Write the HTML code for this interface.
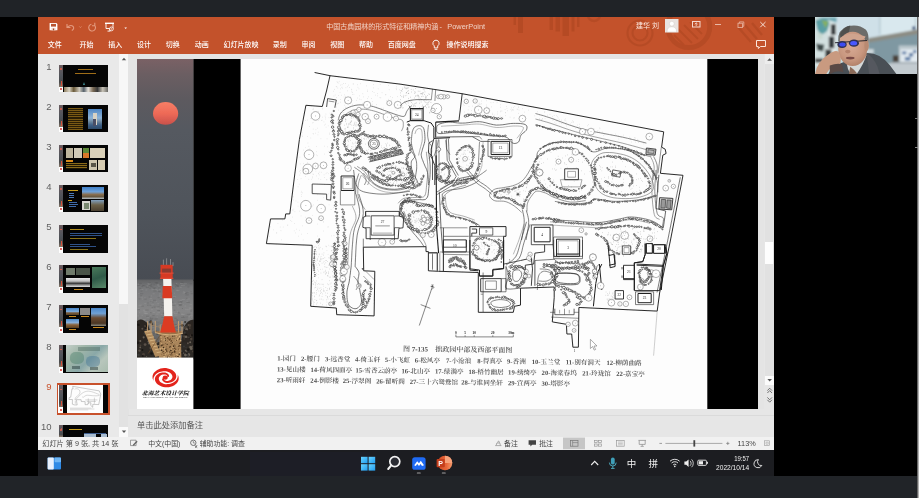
<!DOCTYPE html>
<html lang="zh-CN">
<head>
<meta charset="utf-8">
<title>中国古典园林的形式特征和精神内涵 - PowerPoint</title>
<style>
html,body{margin:0;padding:0;}
body{width:919px;height:498px;overflow:hidden;background:#000;position:relative;font-family:"Liberation Sans","Noto Sans CJK SC",sans-serif;}
.abs{position:absolute;}
#root{position:absolute;left:0;top:0;width:919px;height:498px;will-change:transform;}
#topbar{left:0;top:0;width:919px;height:17px;background:#202327;}
#botbar{left:0;top:476px;width:919px;height:22px;background:#212428;}
#rstrip{left:917.2px;top:17px;width:1.8px;height:481px;background:linear-gradient(90deg,#3a3a3a,#8a8a8a 45%,#d4d4d4);}
#ppt{left:38px;top:17px;width:736px;height:433px;background:#e6e6e6;overflow:hidden;}
#title{left:0;top:0;width:736px;height:37px;background:#c3522b;}
#title .t{color:#f1d2c6;font-size:7px;white-space:nowrap;line-height:10px;}
#menu span{position:absolute;top:22.7px;color:#fff;font-size:7px;line-height:10px;white-space:nowrap;font-weight:500;}
#thumbs{left:0;top:37px;width:81px;height:383px;background:#e9e9e9;}
.num{position:absolute;left:0;width:14px;text-align:right;font-size:10px;color:#444;line-height:12px;}
.th{position:absolute;left:21px;width:48px;height:27px;background:#050505;overflow:hidden;}
#tscroll{left:80.5px;top:37px;width:10px;height:383px;background:#f3f3f3;}
#work{left:90px;top:37px;width:636px;height:355px;background:#e4e4e4;}
#vscroll{left:726.5px;top:37px;width:9.6px;height:355px;background:#e1e1e1;}
#notes{left:90px;top:398px;width:646px;height:22px;background:#e6e6e6;border-top:1px solid #dadada;}
#status{left:0;top:420px;width:736px;height:13px;background:#f1f1f1;font-size:7.2px;color:#444;}
#status span{position:absolute;top:0;line-height:13px;white-space:nowrap;}
#taskbar{left:38px;top:450px;width:736px;height:27px;background:#1c1d21;}
#slide{left:137px;top:59px;width:621px;height:350px;background:#fdfdfd;overflow:hidden;}
#tw i{position:absolute;display:block;}
.tn{position:absolute;left:37px;width:14.5px;text-align:right;font-size:9.5px;line-height:12px;}
.leg{position:absolute;font-family:"Liberation Serif","Noto Serif CJK SC",serif;font-size:7.4px;color:#333;white-space:nowrap;line-height:10px;font-weight:500;}
</style>
</head>
<body>
<div id="root">
<div id="topbar" class="abs"></div>

<div id="ppt" class="abs">
  <div id="title" class="abs">
    <svg class="abs" style="left:0;top:0" width="736" height="37" viewBox="0 0 736 37">
      <!-- decorative pattern -->
      <g fill="#a8431f" opacity="0.5">
        <rect x="475.5" y="0" width="2.5" height="8"/><rect x="480" y="0" width="5" height="16"/>
        <rect x="511.5" y="0" width="3.5" height="13"/><rect x="517.5" y="0" width="4.5" height="14.5"/><rect x="524.5" y="0" width="6.5" height="19"/><rect x="533.5" y="0" width="3" height="14.5"/><rect x="539" y="0" width="2.5" height="10"/>
      </g>
      <g fill="none" stroke="#a8431f" opacity="0.45">
        <circle cx="556" cy="-2" r="6" stroke-width="2.5"/>
        <circle cx="602" cy="16" r="7.5" stroke-width="2.2"/><circle cx="602" cy="16" r="12.5" stroke-width="2.2"/>
        <circle cx="650.8" cy="9.6" r="21" stroke-width="5"/>
        <path d="M640 12l14 14M646 8l14 14M652 5l12 12M636 18l10 10" stroke-width="2"/>
        <path d="M700 10l13 15M707 8l12 14M714 6l10 12" stroke-width="2.5"/>
      </g>
      <!-- quick access icons -->
      <g fill="none" stroke="#fff" stroke-width="1" transform="translate(0 0.9)">
        <path d="M11.6 5h6.8l1 1v6.4h-7.8z" fill="#fff" stroke="none"/><rect x="13" y="6" width="5" height="2.7" fill="#b9532f" stroke="none"/><rect x="13.4" y="10" width="4.2" height="2.4" fill="#f3d9cd" stroke="none"/><rect x="14.9" y="10.6" width="1.2" height="1.8" fill="#9a4526" stroke="none"/>
        <path d="M29.4 9.3 Q32.6 6.2 35.2 8.6 Q36.6 11 33.8 12.6 M29 6.2 V9.6 H32.4" stroke="#e39a7e" stroke-width="1.1"/>
        <path d="M41.4 8.6l1 1 1-1" stroke="#e39a7e" stroke-width="0.8"/>
        <path d="M53.4 6.4 A3.4 3.4 0 1 0 56.4 7.2 M56.8 4.8 V7.8 H54" stroke="#e39a7e" stroke-width="1.1"/>
        <path d="M67 5.4h9" stroke-width="1.4"/><path d="M68 6v4.6h7V6 M71.5 10.6v2.2 M69.5 13.2h3" stroke-width="0.9"/>
        <circle cx="73.4" cy="11" r="1.9" fill="#c3522b" stroke-width="0.8"/><path d="M72.9 10.2l1.3 0.8-1.3 0.8z" fill="#fff" stroke="none"/>
        <path d="M86.4 9.6l1.3 1.5 1.3 -1.5z" fill="#fff" stroke="none"/>
      </g>
      <!-- user avatar -->
      <rect x="627" y="2" width="13.5" height="13.5" fill="#e9e3e0"/>
      <circle cx="633.8" cy="6.7" r="2.4" fill="#fff" stroke="#c9c2be" stroke-width="0.4"/><path d="M629 15 Q629 9.8 633.8 9.8 Q638.6 9.8 638.6 15z" fill="#fff" stroke="#c9c2be" stroke-width="0.4"/>
      <!-- window controls -->
      <g fill="none" stroke="#f4d9cf" stroke-width="1">
        <rect x="654.5" y="4.5" width="7.5" height="5.5"/><path d="M658.2 6v3 M656.8 7.2l1.4-1.4 1.4 1.4" stroke-width="0.8"/>
        <path d="M677 7.5h6" stroke="#e8b8a5"/>
        <rect x="700" y="6.2" width="4.4" height="4.4" stroke="#e8b8a5" stroke-width="0.8"/><path d="M701.4 6.2v-1.3h4.4v4.4h-1.4" stroke="#e8b8a5" stroke-width="0.8"/>
        <path d="M722.3 5l5.2 5.2 M727.5 5l-5.2 5.2" stroke="#fbeee8" stroke-width="0.9"/>
      </g>
    </svg>
    <div class="t abs" style="left:288.2px;top:4.5px;">中国古典园林的形式特征和精神内涵</div><div class="t abs" style="left:401.5px;top:4.5px;font-size:7.4px">-</div><div class="t abs" style="left:409.3px;top:4.5px;font-size:7.4px">PowerPoint</div>
    <div class="t abs" style="left:598px;top:3.5px;color:#fbe9e1;">建华 刘</div>
    <div id="menu">
      <span style="left:9.7px">文件</span><span style="left:41.6px">开始</span><span style="left:70.3px">插入</span><span style="left:99.0px">设计</span><span style="left:127.8px">切换</span><span style="left:156.7px">动画</span><span style="left:185.4px">幻灯片放映</span><span style="left:234.7px">录制</span><span style="left:263.6px">审阅</span><span style="left:292.2px">视图</span><span style="left:320.9px">帮助</span><span style="left:349.8px">百度网盘</span><span style="left:408.6px">操作说明搜索</span>
    </div>
    <svg class="abs" style="left:391px;top:20.5px" width="14" height="15" viewBox="0 0 14 15"><path d="M7 2.2a3.1 3.1 0 0 1 1.7 5.7v2h-3.4v-2A3.1 3.1 0 0 1 7 2.2z M5.6 11.3h2.8" fill="none" stroke="#fff" stroke-width="0.9"/></svg>
    <svg class="abs" style="left:716px;top:22px" width="14" height="12" viewBox="0 0 14 12"><path d="M2.5 1.5h9v6h-5l-2.2 2v-2h-1.8z" fill="none" stroke="#fbe6dc" stroke-width="1"/></svg>
  </div>

  <div id="thumbs" class="abs"></div>
  <div id="tscroll" class="abs"><div class="abs" style="left:0;top:0;width:10px;height:250px;background:#f7f7f7"></div><div class="abs" style="left:0;top:250px;width:10px;height:133px;background:#e2e2e2"></div><div class="abs" style="left:0.5px;top:373px;width:9px;height:9.5px;background:#fafafa"></div>
<svg class="abs" style="left:0;top:0" width="10" height="383"><path d="M2.8 6.2L5 3.8 7.2 6.2z" fill="#555"/><path d="M2.8 376.5L5 378.9 7.2 376.5z" fill="#555"/></svg></div>
  <div id="work" class="abs"></div>
  <div id="vscroll" class="abs">
<div class="abs" style="left:0;top:0;width:9.6px;height:10px;background:#ededed"></div>
<div class="abs" style="left:0.4px;top:188px;width:8.6px;height:22.3px;background:#fdfdfd"></div>
<div class="abs" style="left:0.3px;top:322px;width:8.8px;height:8.6px;background:#fbfbfb"></div>
<div class="abs" style="left:0;top:331px;width:9.6px;height:24px;background:#e6e6e6"></div>
<svg class="abs" style="left:0;top:0" width="10" height="355"><path d="M2.2 6.8L4.6 4.2 7 6.8z" fill="#555"/><path d="M2.4 325L4.7 327.6 7 325z" fill="#555"/>
<path d="M2.4 336.6L4.7 334.2 7 336.6M2.4 339L4.7 336.6 7 339" fill="none" stroke="#555" stroke-width="0.8"/><path d="M2.4 343.4L4.7 345.8 7 343.4M2.4 345.8L4.7 348.2 7 345.8" fill="none" stroke="#555" stroke-width="0.8"/></svg>
</div>
  <div id="notes" class="abs"><span style="position:absolute;left:9px;top:3.5px;font-size:8.25px;color:#555;line-height:12px;">单击此处添加备注</span></div>
  <div id="status" class="abs">
    <span style="left:4.2px">幻灯片 第 9 张, 共 14 张</span>
    <span style="left:110.2px;font-size:6.9px">中文(中国)</span>
    <span style="left:161.7px;font-size:6.9px">辅助功能: 调查</span>
    <span style="left:466px;font-size:6.9px">备注</span>
    <span style="left:501.2px;font-size:6.9px">批注</span>
    <span style="left:699.6px;font-size:7.3px">113%</span>
    <svg class="abs" style="left:0;top:0" width="736" height="13" viewBox="38 437 736 13">
<!-- notes-check icon -->
<path d="M130.5 440.2h5.6v5.4h-5.6z" fill="none" stroke="#777" stroke-width="0.7"/><path d="M133 444.6l3.6-3.8 1 .9-3.6 3.7-1.3.4z" fill="#666"/>
<!-- accessibility -->
<circle cx="193.3" cy="442.8" r="2.7" fill="none" stroke="#555" stroke-width="0.8"/><path d="M193.3 441v2h1.6" fill="none" stroke="#555" stroke-width="0.6"/><path d="M194.6 445.4l2.6 2.2M197 445.2l-1.6 2.6" stroke="#555" stroke-width="0.8"/>
<!-- notes icon -->
<path d="M495.2 445.6h6.2M496.2 445.4l.6-2.4h3l.6 2.4M497.6 442.8l.6-1.6h.8l.6 1.6" fill="none" stroke="#999" stroke-width="0.8"/>
<!-- comments icon -->
<path d="M528.6 440.2h7.4v4.6h-3.8l-1.8 1.8v-1.8h-1.8z" fill="#444"/>
<!-- view buttons -->
<rect x="563" y="437.6" width="22" height="11.6" fill="#c6c6c6"/>
<rect x="570.4" y="440.6" width="7.6" height="5.6" fill="none" stroke="#777" stroke-width="0.7"/><path d="M572.6 440.6v5.6M572.6 442.6h5.4" stroke="#777" stroke-width="0.6"/>
<g fill="none" stroke="#999" stroke-width="0.7"><rect x="594.4" y="440.4" width="2.8" height="2.2"/><rect x="598.6" y="440.4" width="2.8" height="2.2"/><rect x="594.4" y="444" width="2.8" height="2.2"/><rect x="598.6" y="444" width="2.8" height="2.2"/></g>
<g fill="none" stroke="#999" stroke-width="0.7"><rect x="616.6" y="440.4" width="7.6" height="5.8"/><path d="M618 442h4.8M618 443.4h4.8M618 444.8h4.8" stroke-width="0.5"/></g>
<g fill="none" stroke="#888" stroke-width="0.7"><path d="M638.4 440.4h7.6M639.2 440.6v3.8h6v-3.8M642.2 444.4v1.6M640.6 446.4h3.2"/></g>
<!-- zoom slider -->
<path d="M659.4 443.4h2.6" stroke="#777" stroke-width="0.7"/>
<path d="M665.4 443.4h57" stroke="#8a8a8a" stroke-width="0.7"/>
<rect x="693.4" y="440.2" width="1.8" height="6.4" fill="#444"/>
<path d="M726.2 443.4h3.2M727.8 441.8v3.2" stroke="#777" stroke-width="0.7"/>
<!-- fit -->
<rect x="764.6" y="440.8" width="5" height="4.8" fill="none" stroke="#999" stroke-width="0.6"/><path d="M766 442.2h2.2v2h-2.2z" fill="none" stroke="#999" stroke-width="0.5"/>
</svg>

  </div>
</div>

<div id="tw"><span class="tn" style="top:60.8px;color:#606060">1</span>
<i style="left:58.8px;top:65.0px;width:48.9px;height:27.4px;background:#050505;"></i>
<i style="left:59.4px;top:65.0px;width:3.6px;height:22.2px;background:linear-gradient(#6b5c60,#50545a 50%,#4a4a4c 78%,#8a7a6a 100%);"></i>
<i style="left:60.3px;top:68.3px;width:1.8px;height:1.8px;background:#e2604c;border-radius:50%"></i>
<i style="left:60.5px;top:80.5px;width:1.5px;height:5.5px;background:#d8523a;"></i>
<i style="left:59.4px;top:87.0px;width:3.6px;height:5.4px;background:#fff;"></i>
<i style="left:60.2px;top:88.2px;width:2.0px;height:2.0px;background:#d8332a;border-radius:50%"></i>
<span class="tn" style="top:100.8px;color:#606060">2</span>
<i style="left:58.8px;top:105.0px;width:48.9px;height:27.4px;background:#050505;"></i>
<i style="left:59.4px;top:105.0px;width:3.6px;height:22.2px;background:linear-gradient(#6b5c60,#50545a 50%,#4a4a4c 78%,#8a7a6a 100%);"></i>
<i style="left:60.3px;top:108.3px;width:1.8px;height:1.8px;background:#e2604c;border-radius:50%"></i>
<i style="left:60.5px;top:120.5px;width:1.5px;height:5.5px;background:#d8523a;"></i>
<i style="left:59.4px;top:127.0px;width:3.6px;height:5.4px;background:#fff;"></i>
<i style="left:60.2px;top:128.2px;width:2.0px;height:2.0px;background:#d8332a;border-radius:50%"></i>
<span class="tn" style="top:140.9px;color:#606060">3</span>
<i style="left:58.8px;top:145.1px;width:48.9px;height:27.4px;background:#050505;"></i>
<i style="left:59.4px;top:145.1px;width:3.6px;height:22.2px;background:linear-gradient(#6b5c60,#50545a 50%,#4a4a4c 78%,#8a7a6a 100%);"></i>
<i style="left:60.3px;top:148.4px;width:1.8px;height:1.8px;background:#e2604c;border-radius:50%"></i>
<i style="left:60.5px;top:160.6px;width:1.5px;height:5.5px;background:#d8523a;"></i>
<i style="left:59.4px;top:167.1px;width:3.6px;height:5.4px;background:#fff;"></i>
<i style="left:60.2px;top:168.3px;width:2.0px;height:2.0px;background:#d8332a;border-radius:50%"></i>
<span class="tn" style="top:180.9px;color:#606060">4</span>
<i style="left:58.8px;top:185.1px;width:48.9px;height:27.4px;background:#050505;"></i>
<i style="left:59.4px;top:185.1px;width:3.6px;height:22.2px;background:linear-gradient(#6b5c60,#50545a 50%,#4a4a4c 78%,#8a7a6a 100%);"></i>
<i style="left:60.3px;top:188.4px;width:1.8px;height:1.8px;background:#e2604c;border-radius:50%"></i>
<i style="left:60.5px;top:200.6px;width:1.5px;height:5.5px;background:#d8523a;"></i>
<i style="left:59.4px;top:207.1px;width:3.6px;height:5.4px;background:#fff;"></i>
<i style="left:60.2px;top:208.3px;width:2.0px;height:2.0px;background:#d8332a;border-radius:50%"></i>
<span class="tn" style="top:221.0px;color:#606060">5</span>
<i style="left:58.8px;top:225.2px;width:48.9px;height:27.4px;background:#050505;"></i>
<i style="left:59.4px;top:225.2px;width:3.6px;height:22.2px;background:linear-gradient(#6b5c60,#50545a 50%,#4a4a4c 78%,#8a7a6a 100%);"></i>
<i style="left:60.3px;top:228.5px;width:1.8px;height:1.8px;background:#e2604c;border-radius:50%"></i>
<i style="left:60.5px;top:240.7px;width:1.5px;height:5.5px;background:#d8523a;"></i>
<i style="left:59.4px;top:247.2px;width:3.6px;height:5.4px;background:#fff;"></i>
<i style="left:60.2px;top:248.4px;width:2.0px;height:2.0px;background:#d8332a;border-radius:50%"></i>
<span class="tn" style="top:261.1px;color:#606060">6</span>
<i style="left:58.8px;top:265.2px;width:48.9px;height:27.4px;background:#050505;"></i>
<i style="left:59.4px;top:265.2px;width:3.6px;height:22.2px;background:linear-gradient(#6b5c60,#50545a 50%,#4a4a4c 78%,#8a7a6a 100%);"></i>
<i style="left:60.3px;top:268.6px;width:1.8px;height:1.8px;background:#e2604c;border-radius:50%"></i>
<i style="left:60.5px;top:280.8px;width:1.5px;height:5.5px;background:#d8523a;"></i>
<i style="left:59.4px;top:287.2px;width:3.6px;height:5.4px;background:#fff;"></i>
<i style="left:60.2px;top:288.4px;width:2.0px;height:2.0px;background:#d8332a;border-radius:50%"></i>
<span class="tn" style="top:301.1px;color:#606060">7</span>
<i style="left:58.8px;top:305.3px;width:48.9px;height:27.4px;background:#050505;"></i>
<i style="left:59.4px;top:305.3px;width:3.6px;height:22.2px;background:linear-gradient(#6b5c60,#50545a 50%,#4a4a4c 78%,#8a7a6a 100%);"></i>
<i style="left:60.3px;top:308.6px;width:1.8px;height:1.8px;background:#e2604c;border-radius:50%"></i>
<i style="left:60.5px;top:320.8px;width:1.5px;height:5.5px;background:#d8523a;"></i>
<i style="left:59.4px;top:327.3px;width:3.6px;height:5.4px;background:#fff;"></i>
<i style="left:60.2px;top:328.5px;width:2.0px;height:2.0px;background:#d8332a;border-radius:50%"></i>
<span class="tn" style="top:341.1px;color:#606060">8</span>
<i style="left:58.8px;top:345.3px;width:48.9px;height:27.4px;background:#050505;"></i>
<i style="left:59.4px;top:345.3px;width:3.6px;height:22.2px;background:linear-gradient(#6b5c60,#50545a 50%,#4a4a4c 78%,#8a7a6a 100%);"></i>
<i style="left:60.3px;top:348.6px;width:1.8px;height:1.8px;background:#e2604c;border-radius:50%"></i>
<i style="left:60.5px;top:360.8px;width:1.5px;height:5.5px;background:#d8523a;"></i>
<i style="left:59.4px;top:367.3px;width:3.6px;height:5.4px;background:#fff;"></i>
<i style="left:60.2px;top:368.5px;width:2.0px;height:2.0px;background:#d8332a;border-radius:50%"></i>
<span class="tn" style="top:381.2px;color:#c8512b">9</span>
<i style="left:56.9px;top:383.3px;width:52.7px;height:31.4px;background:#c8512b;"></i>
<i style="left:58.2px;top:384.6px;width:50.1px;height:28.8px;background:#fff;"></i>
<i style="left:58.8px;top:385.4px;width:48.9px;height:27.4px;background:#050505;"></i>
<i style="left:59.4px;top:385.4px;width:3.6px;height:22.2px;background:linear-gradient(#6b5c60,#50545a 50%,#4a4a4c 78%,#8a7a6a 100%);"></i>
<i style="left:60.3px;top:388.7px;width:1.8px;height:1.8px;background:#e2604c;border-radius:50%"></i>
<i style="left:60.5px;top:400.9px;width:1.5px;height:5.5px;background:#d8523a;"></i>
<i style="left:59.4px;top:407.4px;width:3.6px;height:5.4px;background:#fff;"></i>
<i style="left:60.2px;top:408.6px;width:2.0px;height:2.0px;background:#d8332a;border-radius:50%"></i>
<span class="tn" style="top:421.2px;color:#606060">10</span>
<i style="left:58.8px;top:425.4px;width:48.9px;height:11.4px;background:#050505;"></i>
<i style="left:59.4px;top:425.4px;width:3.6px;height:11.4px;background:linear-gradient(#6b5c60,#50545a 50%,#4a4a4c 78%,#8a7a6a 100%);"></i>
<i style="left:60.3px;top:428.8px;width:1.8px;height:1.8px;background:#e2604c;border-radius:50%"></i>
<i style="left:60.5px;top:428.4px;width:1.4px;height:1.4px;background:#e2604c;border-radius:50%"></i>
<i style="left:77.8px;top:69.1px;width:15.5px;height:1.4px;background:#a06e18;"></i>
<i style="left:75.2px;top:72.5px;width:20.7px;height:1.6px;background:#a06e18;"></i>
<i style="left:83.3px;top:81.5px;width:0;height:0;border-left:1.8px solid transparent;border-right:1.8px solid transparent;border-bottom:3px solid #3f8f96;background:none"></i>
<i style="left:64.1px;top:86.7px;width:43.6px;height:5.8px;background:linear-gradient(90deg,#8a7a5a,#d8d2c2 12%,#6a5a3a 22%,#cfcabd 35%,#55606a 45%,#e6e2da 55%,#7a6a55 66%,#3a3a3a 76%,#c9c4b8 88%,#6a6a66);"></i>
<i style="left:67.7px;top:108.2px;width:14.9px;height:22.1px;background:repeating-linear-gradient(#7a5a14 0 1px,#2a1e06 1px 2.1px);"></i>
<i style="left:87.8px;top:109.2px;width:14.5px;height:20.1px;background:linear-gradient(#4f86c4,#8fb4d8 45%,#6f8aa0 62%,#3d5f86 80%,#2e4a68);"></i>
<i style="left:92.8px;top:113.2px;width:4.0px;height:12.0px;background:#d9d2c4;"></i>
<i style="left:93.2px;top:118.9px;width:3.0px;height:6.8px;background:#4a4f66;"></i>
<i style="left:66.1px;top:148.4px;width:7.0px;height:10.0px;background:#bdb59e;"></i>
<i style="left:74.2px;top:148.4px;width:7.6px;height:10.0px;background:#cfc9b8;"></i>
<i style="left:82.6px;top:148.4px;width:6.6px;height:4.8px;background:#5e8a3a;"></i>
<i style="left:82.6px;top:153.3px;width:6.6px;height:5.2px;background:#d9772a;"></i>
<i style="left:90.2px;top:148.4px;width:15.1px;height:10.0px;background:#d9d0b8;"></i>
<i style="left:89.2px;top:160.1px;width:8.0px;height:10.0px;background:#cfc6ae;"></i>
<i style="left:97.8px;top:160.1px;width:7.4px;height:10.0px;background:#d6ccb2;"></i>
<i style="left:91.2px;top:162.5px;width:5.0px;height:4.6px;background:#5a5648;"></i>
<i style="left:66.1px;top:160.1px;width:7.0px;height:1.6px;background:#d98a1a;"></i>
<i style="left:66.1px;top:163.1px;width:21.1px;height:6.4px;background:repeating-linear-gradient(#8a6a1a 0 1px,#1e1604 1px 2.2px);"></i>
<i style="left:68.1px;top:189.6px;width:10.0px;height:1.4px;background:#c9a020;"></i>
<i style="left:69.1px;top:193.2px;width:5.0px;height:0.6px;background:#4a78b8;"></i>
<i style="left:69.1px;top:195.2px;width:5.0px;height:0.6px;background:#4a78b8;"></i>
<i style="left:69.1px;top:197.2px;width:5.0px;height:0.6px;background:#4a78b8;"></i>
<i style="left:68.1px;top:199.8px;width:4.0px;height:0.6px;background:#c9a020;"></i>
<i style="left:69.1px;top:201.8px;width:8.0px;height:0.6px;background:#3f6aa8;"></i>
<i style="left:69.1px;top:203.9px;width:9.0px;height:0.6px;background:#3f6aa8;"></i>
<i style="left:69.1px;top:205.9px;width:7.0px;height:0.6px;background:#3f6aa8;"></i>
<i style="left:81.8px;top:187.2px;width:22.5px;height:11.4px;background:linear-gradient(#3f7fc8,#6fa2d8 40%,#8a7050 62%,#6a5a40 80%,#b8c4cc);"></i>
<i style="left:81.8px;top:201.2px;width:8.4px;height:9.0px;background:#d8d8d0;"></i>
<i style="left:83.8px;top:202.7px;width:4.8px;height:6.6px;background:#7a8a70;"></i>
<i style="left:90.8px;top:200.2px;width:13.5px;height:10.4px;background:linear-gradient(#7fa0c0,#6a6048 45%,#4a4030);"></i>
<i style="left:70.1px;top:228.8px;width:14.1px;height:1.0px;background:#b08c1c;"></i>
<i style="left:70.1px;top:233.2px;width:32.1px;height:0.6px;background:#2f5288;"></i>
<i style="left:70.1px;top:235.4px;width:32.1px;height:0.6px;background:#2f5288;"></i>
<i style="left:70.1px;top:237.6px;width:26.1px;height:0.6px;background:#8a741a;"></i>
<i style="left:36.0px;top:225.2px;width:0.0px;height:0.0px;background:#000;"></i>
<i style="left:69.5px;top:243.5px;width:20.0px;height:0.7px;background:#2f5288;"></i>
<i style="left:69.5px;top:246.0px;width:26.0px;height:0.7px;background:#2f5288;"></i>
<i style="left:69.5px;top:248.5px;width:18.0px;height:0.7px;background:#8a741a;"></i>
<i style="left:65.7px;top:268.1px;width:9.4px;height:7.4px;background:#6f7a6a;"></i>
<i style="left:75.8px;top:268.1px;width:14.5px;height:7.4px;background:#4a5448;"></i>
<i style="left:91.8px;top:267.4px;width:14.5px;height:20.7px;background:linear-gradient(160deg,#4a7a5a,#2f5a48 50%,#5a8a6a);"></i>
<i style="left:66.1px;top:277.5px;width:24.1px;height:9.6px;background:linear-gradient(#e8e8e8,#bfbfbf 35%,#3a3a3a 60%,#9a9a9a 80%,#e0e0e0);"></i>
<i style="left:74.2px;top:288.7px;width:9.0px;height:1.0px;background:#c98a20;"></i>
<i style="left:65.7px;top:308.2px;width:13.5px;height:7.0px;background:linear-gradient(#4a86c8,#7aa8d8 50%,#7a5a38 70%,#5a4428);"></i>
<i style="left:80.2px;top:307.6px;width:9.6px;height:7.6px;background:#8a8a8a;"></i>
<i style="left:90.6px;top:307.6px;width:15.7px;height:18.1px;background:linear-gradient(#4a86c8,#6fa0d4 30%,#6a4a30 55%,#4a3624 85%,#8a8a80);"></i>
<i style="left:65.7px;top:318.9px;width:13.5px;height:8.8px;background:linear-gradient(#4f8aca,#8ab0d8 40%,#8a6238 65%,#5a4022);"></i>
<i style="left:69.1px;top:316.2px;width:7.0px;height:0.8px;background:#c98a20;"></i>
<i style="left:69.1px;top:328.5px;width:7.0px;height:0.8px;background:#c98a20;"></i>
<i style="left:93.2px;top:326.9px;width:11.0px;height:0.8px;background:#c98a20;"></i>
<i style="left:81.2px;top:316.2px;width:7.4px;height:0.8px;background:#c98a20;"></i>
<i style="left:66.0px;top:345.4px;width:41.7px;height:26.6px;background:linear-gradient(135deg,#c4cfc8,#9fb5a8 30%,#8aa8a8 55%,#b8c6bc 75%,#a9bcae);"></i>
<i style="left:70.0px;top:352.0px;width:14.0px;height:12.0px;background:rgba(80,130,110,.45);border-radius:40%"></i>
<i style="left:86.0px;top:356.0px;width:14.0px;height:11.0px;background:rgba(70,120,150,.45);border-radius:40%"></i>
<i style="left:78.0px;top:347.0px;width:22.0px;height:4.0px;background:rgba(60,90,80,.35);"></i>
<i style="left:72.0px;top:366.0px;width:8.0px;height:3.0px;background:rgba(40,60,60,.5);"></i>
<i style="left:90.0px;top:367.0px;width:8.0px;height:3.0px;background:rgba(40,60,60,.5);"></i>
<i style="left:67.2px;top:385.4px;width:35.6px;height:27.4px;background:#fdfdfd;"></i>
<svg style="position:absolute;left:67.2px;top:385.4px" width="35.6" height="27.4" viewBox="241 59 466 350"><path d="M315 72L664 132 683 175 660 293 657 311 578 308 578 347 552 322 554 287 520 288 513 312 478 312 478 272 428 271 426 247 363 247 374 316 336 315 311 306 312 245 266 244 270 219 290 214 306 105 322 106Z" fill="none" stroke="#777" stroke-width="5"/><path d="M340 110C380 90 420 120 410 160S350 200 345 240 400 180 460 150 560 140 640 170 600 200 530 190 470 230 440 210M480 250H640M500 270H620M520 230V300M600 220V300M350 260V300" fill="none" stroke="#999" stroke-width="5"/><path d="M280 357H560M280 369H600M280 381H520" stroke="#aaa" stroke-width="5"/></svg>
<i style="left:69.0px;top:429.1px;width:13.0px;height:1.4px;background:#c9a020;"></i>
<i style="left:84.0px;top:434.1px;width:12.0px;height:3.2px;background:#a8bcd0;"></i>
<i style="left:101.0px;top:434.1px;width:6.0px;height:3.2px;background:#a8bcd0;"></i>
<i style="left:84.0px;top:432.6px;width:22.0px;height:0.9px;background:#3f5f90;"></i></div>
<div id="slide" class="abs">
<svg class="abs" style="left:0;top:0" width="621" height="350" viewBox="137 59 621 350" font-family="'Liberation Serif','Noto Serif CJK SC',serif">
<defs>
<linearGradient id="sky" x1="0" y1="0" x2="0" y2="1"><stop offset="0" stop-color="#7a6165"/><stop offset="0.07" stop-color="#6b5e62"/><stop offset="0.18" stop-color="#5d5a5f"/><stop offset="0.32" stop-color="#555960"/><stop offset="0.7" stop-color="#4f545b"/><stop offset="1" stop-color="#484c53"/></linearGradient>
<linearGradient id="sun" x1="0" y1="0" x2="0" y2="1"><stop offset="0" stop-color="#f67e66"/><stop offset="0.5" stop-color="#ee6a57"/><stop offset="1" stop-color="#c9514b"/></linearGradient>
<filter id="mb" x="137" y="59" width="621" height="350" filterUnits="userSpaceOnUse"><feGaussianBlur stdDeviation="0.35"/></filter>
<linearGradient id="sea" x1="0" y1="0" x2="0" y2="1"><stop offset="0" stop-color="#606163"/><stop offset="0.1" stop-color="#77787a"/><stop offset="0.4" stop-color="#858586"/><stop offset="0.65" stop-color="#6e6e6e"/><stop offset="1" stop-color="#4a4a4a"/></linearGradient>
<filter id="sb"><feGaussianBlur stdDeviation="0.5"/></filter>
</defs>
<rect x="137" y="59" width="621" height="350" fill="#fdfdfd"/>
<!-- left picture strip -->
<rect x="137" y="59" width="56.6" height="222" fill="url(#sky)"/>
<ellipse cx="165.6" cy="113.4" rx="12.6" ry="11.3" fill="url(#sun)" filter="url(#sb)"/>
<rect x="137" y="279.5" width="56.6" height="80" fill="url(#sea)"/>
<path d="M170.6 319.1h3.0M187.9 319.0h3.3M138.6 305.3h3.4M172.0 327.0h1.3M162.3 294.3h2.4M168.0 282.7h1.5M152.1 327.8h2.9M145.6 321.9h1.3M170.3 288.3h1.0M184.1 292.5h1.5M190.1 325.6h1.7M188.9 309.0h2.7M148.1 329.0h2.7M189.2 326.7h1.7M156.5 290.3h1.4M140.5 297.1h2.5M137.2 315.9h1.8M153.7 322.9h2.2M154.1 306.1h2.8M140.1 330.8h1.1M177.5 324.2h1.0M179.5 300.3h2.4M137.5 284.3h1.5M188.6 291.8h2.9M187.2 329.1h1.9M156.2 308.2h2.9M142.8 319.4h3.0M183.4 283.8h3.4M141.9 299.0h2.5M186.6 299.0h3.3M166.4 297.6h1.8M146.6 285.9h1.4M174.2 331.8h1.4M139.6 331.3h2.3M158.9 293.9h2.5M181.6 304.8h2.1M140.0 327.8h1.1M163.7 323.9h1.3M176.5 329.5h2.6M179.6 287.3h2.1M145.1 324.2h1.7M161.5 332.0h3.1M189.7 304.7h2.2M176.4 306.0h1.7M158.8 289.3h1.9M190.4 330.0h2.6M164.0 298.9h1.2M151.7 321.1h3.2M156.5 321.3h2.9M174.5 315.2h2.9M156.6 317.2h1.7M163.2 320.5h2.7M152.9 329.3h2.6M168.4 282.6h2.4M150.5 315.6h2.2M181.1 314.4h3.0M155.8 314.2h2.8M181.7 299.5h3.1M184.0 316.4h3.4M188.7 307.9h2.3M146.0 323.8h3.3M162.8 316.6h2.8M176.4 290.6h3.0M168.4 315.3h2.1M170.7 320.7h2.6M175.9 283.4h1.4M160.8 314.5h1.5M174.0 313.5h1.1M162.5 293.3h1.1M144.2 297.9h1.5M147.4 283.8h2.2M157.5 312.6h2.5M149.8 327.2h1.0M158.9 295.9h2.0M143.2 323.6h1.9M138.9 312.7h1.2M166.4 299.0h2.5M188.7 322.9h2.0M180.9 314.1h1.9M144.7 311.8h2.4M188.7 330.4h2.5M156.0 326.7h1.0M142.8 310.3h2.5M144.6 313.5h3.2M157.3 303.6h1.6M152.7 330.6h1.9M188.9 327.7h2.5M151.0 331.0h2.2M159.4 298.0h3.5M163.6 296.3h2.2M143.6 313.1h2.1M152.8 321.1h3.1M137.7 308.6h1.7M187.5 321.1h1.6M151.5 289.7h3.5M152.8 312.4h2.2M171.8 312.2h2.9M143.4 320.0h1.8M165.8 298.8h1.7M165.6 305.2h1.9M177.2 311.5h1.1M150.6 304.8h3.3M184.9 309.3h1.0M179.0 303.4h2.4M175.2 313.6h2.2M186.2 301.3h2.0M183.0 291.8h1.7M181.8 285.3h3.1M174.5 303.6h1.7M179.2 327.5h1.4M162.8 309.5h2.2M154.9 289.7h2.5M180.8 285.4h1.6M181.3 321.6h2.7M138.4 318.1h3.4M190.9 317.1h1.1M182.5 293.0h2.6M188.4 317.6h1.3M152.8 327.9h1.4M170.0 302.7h1.4M170.6 284.2h1.3M157.5 285.6h1.1M168.1 319.1h3.2M144.3 303.6h1.8M169.4 306.5h3.3M157.2 284.8h2.7M145.2 313.6h2.3M186.2 309.7h2.6M151.2 309.6h1.6M177.5 307.8h1.3M149.7 300.6h2.8M146.7 317.7h2.6M141.6 315.4h1.2M143.7 311.7h1.6M184.4 306.0h1.8M180.0 283.5h2.8M139.9 289.5h3.4M173.8 293.2h1.3M189.5 315.3h3.1M144.5 313.2h1.9M149.7 298.7h2.5M155.8 301.3h1.3M181.9 314.4h3.0M160.4 324.6h2.3M169.0 310.7h2.9M158.4 286.8h1.1M147.9 284.0h3.2M163.0 320.0h1.0M162.4 326.5h2.5M160.1 305.3h1.2M145.4 290.0h1.9M157.8 326.0h1.4M150.7 295.9h1.4M152.5 293.8h2.2M138.7 328.2h1.9M187.6 316.4h2.7M162.5 329.3h1.3M173.1 296.6h2.7M176.4 290.2h1.5M138.3 293.5h1.2" stroke="#a5a5a5" stroke-width="0.5" opacity="0.55"/>
<path d="M158.7 334.6h1.9M153.8 307.3h1.7M176.5 320.8h1.4M150.0 318.3h3.4M171.9 305.3h3.4M137.3 285.3h2.9M159.1 284.4h2.4M190.4 310.0h1.9M142.1 285.8h3.2M163.5 332.5h1.1M150.1 284.7h2.0M140.2 295.8h2.0M153.5 284.8h1.1M189.5 291.7h2.3M158.7 310.7h1.2M153.9 287.8h2.4M186.8 314.3h3.1M148.6 282.9h2.3M163.3 312.9h1.9M170.8 321.2h3.3M153.6 306.2h3.1M149.1 288.2h1.8M141.7 323.7h3.0M153.9 289.0h1.2M150.2 286.6h2.1M168.2 295.3h1.2M174.8 284.6h1.5M152.4 302.2h1.2M159.7 299.0h2.9M167.0 330.4h2.6M178.0 313.0h2.1M181.1 317.4h3.4M176.3 319.9h1.7M180.9 302.6h1.3M140.6 291.1h1.7M173.5 297.4h1.2M178.2 312.1h1.1M139.7 289.0h1.9M183.4 333.3h2.5M149.5 305.2h1.9M154.8 282.7h2.5M181.7 321.2h1.2M165.6 291.2h2.8M161.1 332.7h3.0M143.4 299.1h3.3M161.9 305.4h2.1M178.4 332.6h2.3M189.4 314.2h1.3M181.0 304.7h1.1M189.8 283.8h2.4M163.0 329.6h2.0M148.6 297.0h1.5M167.4 301.3h2.9M150.0 301.0h1.6M190.1 327.4h3.1M170.4 303.6h1.4M181.9 308.5h1.1M146.2 287.3h2.8M185.6 292.8h3.0M154.5 318.9h3.2M170.6 325.2h1.9M137.5 309.6h2.5M147.0 303.0h1.8M138.5 298.9h2.0M162.7 320.0h2.0M190.0 326.0h3.3M174.4 318.2h2.3M180.1 301.6h2.5M173.7 310.2h1.7M141.2 286.7h1.9M168.3 323.0h2.8M153.6 332.2h1.7M175.7 285.9h2.9M173.2 333.7h3.2M174.1 327.3h2.8M170.0 293.3h2.3M185.4 294.9h3.4M166.4 303.2h1.0M158.1 291.6h2.6M185.6 331.1h2.5M157.9 287.9h2.7M166.9 320.6h1.9M184.9 293.5h1.8M151.5 315.6h3.2M146.0 316.2h2.9M149.1 285.4h2.4M181.8 329.4h2.8M159.5 305.0h2.3M185.9 298.3h1.7M169.7 334.2h1.5M138.6 288.2h2.4M169.6 291.9h1.5M169.1 316.9h2.7M176.4 285.3h2.2M182.1 333.7h1.8M182.9 316.8h3.3M149.4 319.6h3.1M162.7 287.4h1.5M145.5 287.0h1.4M170.2 287.7h2.9M176.8 326.1h3.0M175.5 331.9h3.4M170.8 334.1h1.3M142.6 285.5h1.5M157.2 306.8h2.7M177.1 286.5h2.0M166.3 302.3h1.3M169.2 302.2h2.7M163.8 334.0h3.4M140.9 323.0h2.8M153.0 288.3h2.2M156.1 321.8h3.3M157.6 297.7h2.2M174.6 324.6h2.4M153.0 300.2h3.1M165.0 284.7h2.1M149.8 318.0h1.2M151.6 287.2h2.2M190.2 311.2h2.0M187.4 287.0h1.9M180.8 282.3h2.9M156.5 282.9h1.6M161.7 302.7h2.3M139.9 293.8h3.4M160.9 307.5h1.2M152.1 333.6h2.7M164.4 284.9h2.0M179.0 305.5h2.5M185.7 316.8h2.6M138.9 283.3h2.9M159.3 329.2h3.1M186.4 302.4h3.5M177.8 330.2h1.4M179.2 304.8h3.4M190.7 293.7h2.1M151.6 307.4h1.7M173.0 288.7h1.4M161.7 286.0h2.0M185.5 329.8h1.5M138.0 326.7h3.4M169.3 289.4h1.6M186.7 332.6h1.1M147.0 305.2h1.7M177.7 302.1h2.9M145.2 310.0h3.4M174.9 286.9h1.3M171.7 302.2h1.9M162.8 313.4h3.4M150.0 312.7h1.7M166.4 321.5h1.3M163.0 320.1h1.0M178.6 304.6h2.3M170.0 324.8h1.1M164.0 284.1h2.0M155.7 283.2h1.7M161.3 317.4h3.3M157.0 310.6h2.8M187.6 333.3h3.5M153.3 291.0h3.3M141.2 306.2h2.8" stroke="#4a4a4a" stroke-width="0.5" opacity="0.5"/>
<path d="M137 321.1 Q141.2 316.9 147.6 323.2 Q151.1 332.3 152.5 342.2 L155.3 359 L137 359z" fill="#2b2622"/>
<path d="M193.6 319.7 Q188.3 319.0 184.1 326.7 Q182.0 336.5 180.6 345.0 L179.2 359 L193.6 359z" fill="#2b2622"/>
<rect x="137" y="342.2" width="56.6" height="16.8" fill="#2e2a26"/>
<circle cx="185.7" cy="350.6" r="0.9" fill="#6a6258"/><circle cx="185.2" cy="322.1" r="1.1" fill="#3a3a38"/><circle cx="146.5" cy="326.1" r="1.4" fill="#1a1714"/><circle cx="184.2" cy="338.9" r="0.6" fill="#4a4038"/><circle cx="191.0" cy="335.6" r="1.1" fill="#5a5048"/><circle cx="188.1" cy="354.0" r="1.3" fill="#3a3a38"/><circle cx="181.6" cy="341.6" r="0.5" fill="#4a4038"/><circle cx="151.6" cy="322.9" r="0.9" fill="#6a6258"/><circle cx="152.1" cy="340.8" r="1.2" fill="#4a4038"/><circle cx="152.1" cy="324.3" r="1.0" fill="#3a3a38"/><circle cx="155.7" cy="355.5" r="1.2" fill="#1a1714"/><circle cx="190.1" cy="337.9" r="0.8" fill="#1a1714"/><circle cx="191.8" cy="335.3" r="1.2" fill="#1a1714"/><circle cx="188.3" cy="325.1" r="0.9" fill="#4a4038"/><circle cx="186.3" cy="328.1" r="0.6" fill="#6a6258"/><circle cx="187.0" cy="353.9" r="0.6" fill="#1a1714"/><circle cx="148.8" cy="341.4" r="1.2" fill="#6a6258"/><circle cx="184.0" cy="332.3" r="0.6" fill="#1a1714"/><circle cx="191.2" cy="339.0" r="1.2" fill="#4a4038"/><circle cx="157.1" cy="333.8" r="0.6" fill="#1a1714"/><circle cx="154.7" cy="349.2" r="1.0" fill="#5a5048"/><circle cx="189.7" cy="325.5" r="1.4" fill="#4a4038"/><circle cx="184.5" cy="336.4" r="1.4" fill="#4a4038"/><circle cx="138.4" cy="355.0" r="1.3" fill="#3a3a38"/><circle cx="145.5" cy="329.9" r="0.5" fill="#3a3a38"/><circle cx="188.8" cy="354.7" r="1.4" fill="#6a6258"/><circle cx="145.0" cy="326.0" r="1.0" fill="#4a4038"/><circle cx="189.0" cy="337.3" r="0.8" fill="#3a3a38"/><circle cx="146.5" cy="329.3" r="1.0" fill="#5a5048"/><circle cx="145.0" cy="333.4" r="1.3" fill="#3a3a38"/><circle cx="184.7" cy="332.7" r="1.1" fill="#3a3a38"/><circle cx="150.3" cy="348.0" r="0.8" fill="#6a6258"/><circle cx="145.5" cy="326.7" r="0.7" fill="#4a4038"/><circle cx="146.3" cy="327.9" r="0.6" fill="#6a6258"/><circle cx="142.4" cy="350.1" r="1.0" fill="#1a1714"/><circle cx="184.0" cy="346.4" r="1.0" fill="#3a3a38"/><circle cx="190.2" cy="342.2" r="1.0" fill="#6a6258"/><circle cx="187.3" cy="343.2" r="0.6" fill="#1a1714"/><circle cx="186.0" cy="335.0" r="1.3" fill="#1a1714"/><circle cx="150.8" cy="322.0" r="1.4" fill="#1a1714"/><circle cx="186.0" cy="336.7" r="1.3" fill="#6a6258"/><circle cx="189.8" cy="346.9" r="1.1" fill="#4a4038"/><circle cx="140.3" cy="340.9" r="1.0" fill="#6a6258"/><circle cx="154.6" cy="338.8" r="0.6" fill="#5a5048"/><circle cx="140.5" cy="345.3" r="0.9" fill="#4a4038"/><circle cx="145.1" cy="344.6" r="1.4" fill="#5a5048"/><circle cx="188.0" cy="337.2" r="0.8" fill="#4a4038"/><circle cx="188.2" cy="349.5" r="1.2" fill="#1a1714"/><circle cx="181.0" cy="324.0" r="0.5" fill="#5a5048"/><circle cx="186.5" cy="353.5" r="1.0" fill="#1a1714"/><circle cx="181.3" cy="351.2" r="1.1" fill="#3a3a38"/><circle cx="188.8" cy="356.6" r="0.7" fill="#4a4038"/><circle cx="183.4" cy="353.1" r="0.7" fill="#6a6258"/><circle cx="186.1" cy="328.6" r="1.4" fill="#6a6258"/><circle cx="192.4" cy="346.1" r="0.7" fill="#6a6258"/><circle cx="155.9" cy="331.6" r="1.0" fill="#5a5048"/><circle cx="191.3" cy="348.7" r="1.4" fill="#6a6258"/><circle cx="186.0" cy="347.6" r="0.7" fill="#3a3a38"/><circle cx="142.3" cy="328.7" r="1.0" fill="#5a5048"/><circle cx="182.1" cy="334.7" r="0.6" fill="#1a1714"/><circle cx="187.5" cy="355.2" r="1.2" fill="#3a3a38"/><circle cx="190.9" cy="347.4" r="1.4" fill="#6a6258"/><circle cx="140.2" cy="347.3" r="0.9" fill="#6a6258"/><circle cx="187.9" cy="343.3" r="1.0" fill="#5a5048"/><circle cx="145.3" cy="330.0" r="0.8" fill="#3a3a38"/><circle cx="138.5" cy="324.9" r="1.2" fill="#1a1714"/><circle cx="189.8" cy="328.1" r="0.9" fill="#4a4038"/><circle cx="143.5" cy="354.4" r="1.4" fill="#4a4038"/><circle cx="187.2" cy="329.6" r="0.8" fill="#6a6258"/><circle cx="142.8" cy="355.9" r="1.0" fill="#1a1714"/><circle cx="154.5" cy="354.6" r="0.8" fill="#4a4038"/><circle cx="188.5" cy="325.1" r="0.8" fill="#5a5048"/><circle cx="182.2" cy="325.4" r="1.4" fill="#1a1714"/><circle cx="137.7" cy="342.8" r="1.4" fill="#1a1714"/><circle cx="190.9" cy="340.0" r="0.6" fill="#3a3a38"/><circle cx="149.0" cy="343.5" r="0.9" fill="#6a6258"/><circle cx="181.8" cy="352.8" r="0.8" fill="#1a1714"/><circle cx="145.8" cy="328.1" r="0.9" fill="#1a1714"/><circle cx="137.9" cy="324.4" r="0.6" fill="#1a1714"/><circle cx="143.0" cy="337.2" r="0.8" fill="#1a1714"/><circle cx="193.0" cy="351.5" r="1.1" fill="#4a4038"/><circle cx="186.7" cy="351.7" r="0.6" fill="#6a6258"/><circle cx="185.4" cy="355.0" r="1.4" fill="#6a6258"/><circle cx="186.4" cy="326.6" r="1.2" fill="#3a3a38"/><circle cx="146.6" cy="356.4" r="0.5" fill="#6a6258"/><circle cx="143.6" cy="337.3" r="1.1" fill="#6a6258"/><circle cx="139.5" cy="350.6" r="1.2" fill="#5a5048"/><circle cx="151.5" cy="353.5" r="1.3" fill="#1a1714"/><circle cx="185.0" cy="327.7" r="1.4" fill="#4a4038"/><circle cx="181.4" cy="340.4" r="0.5" fill="#5a5048"/>
<path d="M159.8 333.7 L180.9 333.7 L181.4 359 L158.8 359z" fill="#a8845a"/>
<circle cx="180.7" cy="342.7" r="0.5" fill="#3a2a18"/><circle cx="169.4" cy="335.9" r="0.4" fill="#6a4a2a"/><circle cx="162.1" cy="351.0" r="0.4" fill="#5a3e24"/><circle cx="173.2" cy="352.8" r="0.8" fill="#c8a270"/><circle cx="179.2" cy="354.2" r="0.7" fill="#3a2a18"/><circle cx="168.5" cy="352.9" r="0.5" fill="#d8b480"/><circle cx="163.5" cy="351.6" r="0.6" fill="#5a3e24"/><circle cx="176.0" cy="345.9" r="0.5" fill="#5a3e24"/><circle cx="175.2" cy="351.9" r="0.8" fill="#c8a270"/><circle cx="164.4" cy="350.3" r="0.4" fill="#d8b480"/><circle cx="160.6" cy="341.1" r="0.6" fill="#5a3e24"/><circle cx="175.4" cy="356.3" r="0.5" fill="#6a4a2a"/><circle cx="180.0" cy="346.3" r="0.7" fill="#5a3e24"/><circle cx="172.3" cy="342.5" r="0.5" fill="#3a2a18"/><circle cx="165.4" cy="340.1" r="0.7" fill="#c8a270"/><circle cx="166.0" cy="338.6" r="0.4" fill="#c8a270"/><circle cx="164.0" cy="355.9" r="0.6" fill="#5a3e24"/><circle cx="164.6" cy="339.8" r="0.6" fill="#c8a270"/><circle cx="164.4" cy="354.4" r="0.4" fill="#6a4a2a"/><circle cx="162.3" cy="348.7" r="0.7" fill="#c8a270"/><circle cx="170.1" cy="355.1" r="0.6" fill="#3a2a18"/><circle cx="161.5" cy="339.4" r="0.6" fill="#c8a270"/><circle cx="173.5" cy="350.6" r="0.6" fill="#c8a270"/><circle cx="169.8" cy="347.1" r="0.7" fill="#3a2a18"/><circle cx="160.1" cy="338.9" r="0.4" fill="#3a2a18"/><circle cx="167.8" cy="354.3" r="0.7" fill="#c8a270"/><circle cx="173.4" cy="338.2" r="0.6" fill="#c8a270"/><circle cx="173.1" cy="352.1" r="0.6" fill="#5a3e24"/><circle cx="179.1" cy="339.3" r="0.6" fill="#6a4a2a"/><circle cx="165.5" cy="338.8" r="0.5" fill="#3a2a18"/><circle cx="161.5" cy="343.2" r="0.7" fill="#c8a270"/><circle cx="164.9" cy="348.9" r="0.8" fill="#d8b480"/><circle cx="169.1" cy="341.0" r="0.6" fill="#d8b480"/><circle cx="180.4" cy="344.4" r="0.8" fill="#d8b480"/><circle cx="179.6" cy="336.6" r="0.8" fill="#d8b480"/><circle cx="172.7" cy="336.2" r="0.6" fill="#3a2a18"/><circle cx="166.8" cy="350.8" r="0.5" fill="#c8a270"/><circle cx="176.8" cy="350.6" r="0.4" fill="#d8b480"/><circle cx="174.7" cy="351.4" r="0.7" fill="#6a4a2a"/><circle cx="171.7" cy="353.1" r="0.6" fill="#3a2a18"/><circle cx="175.7" cy="340.3" r="0.6" fill="#c8a270"/><circle cx="177.7" cy="339.2" r="0.7" fill="#d8b480"/><circle cx="179.6" cy="345.3" r="0.6" fill="#6a4a2a"/><circle cx="166.6" cy="351.5" r="0.8" fill="#5a3e24"/><circle cx="162.4" cy="345.3" r="0.6" fill="#5a3e24"/><circle cx="177.9" cy="338.5" r="0.6" fill="#c8a270"/><circle cx="174.1" cy="338.3" r="0.4" fill="#5a3e24"/><circle cx="177.3" cy="336.6" r="0.5" fill="#6a4a2a"/><circle cx="179.7" cy="352.4" r="0.5" fill="#d8b480"/><circle cx="171.0" cy="350.4" r="0.6" fill="#3a2a18"/><circle cx="174.9" cy="357.3" r="0.6" fill="#d8b480"/><circle cx="177.7" cy="355.6" r="0.5" fill="#c8a270"/><circle cx="166.5" cy="346.6" r="0.4" fill="#6a4a2a"/><circle cx="171.4" cy="340.9" r="0.8" fill="#6a4a2a"/><circle cx="176.9" cy="340.7" r="0.7" fill="#c8a270"/><circle cx="170.3" cy="356.2" r="0.5" fill="#d8b480"/><circle cx="165.3" cy="343.5" r="0.4" fill="#5a3e24"/><circle cx="176.5" cy="340.6" r="0.5" fill="#6a4a2a"/><circle cx="179.7" cy="343.2" r="0.5" fill="#3a2a18"/><circle cx="162.0" cy="347.9" r="0.5" fill="#c8a270"/><circle cx="170.8" cy="341.3" r="0.4" fill="#5a3e24"/><circle cx="161.9" cy="342.0" r="0.4" fill="#6a4a2a"/><circle cx="166.5" cy="356.8" r="0.4" fill="#d8b480"/><circle cx="167.9" cy="337.8" r="0.7" fill="#c8a270"/><circle cx="174.9" cy="352.0" r="0.7" fill="#5a3e24"/><circle cx="166.4" cy="348.0" r="0.4" fill="#6a4a2a"/><circle cx="167.5" cy="357.2" r="0.7" fill="#3a2a18"/><circle cx="161.5" cy="344.9" r="0.6" fill="#d8b480"/><circle cx="169.9" cy="352.0" r="0.8" fill="#5a3e24"/><circle cx="166.3" cy="352.9" r="0.5" fill="#d8b480"/><circle cx="162.1" cy="348.5" r="0.6" fill="#c8a270"/><circle cx="172.9" cy="347.1" r="0.7" fill="#d8b480"/><circle cx="170.8" cy="343.5" r="0.4" fill="#5a3e24"/><circle cx="160.3" cy="349.3" r="0.5" fill="#d8b480"/><circle cx="166.9" cy="340.5" r="0.5" fill="#d8b480"/><circle cx="165.3" cy="340.3" r="0.6" fill="#3a2a18"/><circle cx="161.2" cy="337.1" r="0.8" fill="#c8a270"/><circle cx="171.4" cy="357.7" r="0.5" fill="#d8b480"/><circle cx="179.5" cy="350.3" r="0.4" fill="#d8b480"/><circle cx="170.7" cy="355.0" r="0.4" fill="#3a2a18"/><circle cx="164.7" cy="336.6" r="0.6" fill="#6a4a2a"/><circle cx="164.5" cy="356.7" r="0.8" fill="#d8b480"/><circle cx="171.9" cy="354.9" r="0.6" fill="#6a4a2a"/><circle cx="178.0" cy="346.2" r="0.7" fill="#3a2a18"/><circle cx="161.3" cy="345.7" r="0.7" fill="#3a2a18"/><circle cx="177.5" cy="356.5" r="0.7" fill="#5a3e24"/><circle cx="170.7" cy="350.2" r="0.5" fill="#3a2a18"/><circle cx="174.2" cy="336.0" r="0.5" fill="#3a2a18"/><circle cx="176.4" cy="354.6" r="0.5" fill="#d8b480"/><circle cx="167.7" cy="341.2" r="0.5" fill="#6a4a2a"/><circle cx="172.4" cy="352.3" r="0.8" fill="#5a3e24"/><circle cx="167.0" cy="336.2" r="0.7" fill="#d8b480"/><circle cx="175.7" cy="349.2" r="0.6" fill="#5a3e24"/><circle cx="168.8" cy="339.6" r="0.4" fill="#5a3e24"/><circle cx="171.7" cy="343.8" r="0.5" fill="#6a4a2a"/><circle cx="167.2" cy="344.6" r="0.5" fill="#3a2a18"/><circle cx="170.2" cy="339.0" r="0.7" fill="#5a3e24"/><circle cx="175.8" cy="342.6" r="0.4" fill="#d8b480"/><circle cx="167.4" cy="342.0" r="0.5" fill="#c8a270"/><circle cx="166.7" cy="351.1" r="0.7" fill="#6a4a2a"/><circle cx="169.8" cy="356.8" r="0.5" fill="#3a2a18"/><circle cx="179.4" cy="349.4" r="0.6" fill="#c8a270"/><circle cx="163.9" cy="344.7" r="0.4" fill="#5a3e24"/><circle cx="174.7" cy="348.3" r="0.7" fill="#5a3e24"/><circle cx="177.7" cy="354.9" r="0.6" fill="#d8b480"/><circle cx="174.3" cy="355.5" r="0.4" fill="#c8a270"/><circle cx="164.4" cy="357.8" r="0.4" fill="#c8a270"/><circle cx="180.5" cy="342.4" r="0.7" fill="#6a4a2a"/><circle cx="172.7" cy="351.4" r="0.4" fill="#d8b480"/><circle cx="165.9" cy="349.3" r="0.7" fill="#3a2a18"/><circle cx="174.9" cy="342.3" r="0.4" fill="#3a2a18"/><circle cx="173.7" cy="345.9" r="0.6" fill="#6a4a2a"/><circle cx="165.3" cy="336.9" r="0.4" fill="#c8a270"/><circle cx="162.0" cy="344.5" r="0.6" fill="#5a3e24"/><circle cx="177.8" cy="357.7" r="0.6" fill="#d8b480"/><circle cx="160.6" cy="348.9" r="0.5" fill="#c8a270"/><circle cx="165.2" cy="354.5" r="0.8" fill="#c8a270"/><circle cx="163.9" cy="356.8" r="0.7" fill="#d8b480"/><circle cx="162.6" cy="351.8" r="0.5" fill="#6a4a2a"/><circle cx="173.0" cy="348.7" r="0.5" fill="#5a3e24"/><circle cx="168.0" cy="338.2" r="0.7" fill="#6a4a2a"/><circle cx="179.0" cy="345.2" r="0.4" fill="#5a3e24"/><circle cx="161.9" cy="347.0" r="0.4" fill="#c8a270"/><circle cx="180.6" cy="340.4" r="0.7" fill="#d8b480"/><circle cx="170.4" cy="346.5" r="0.4" fill="#6a4a2a"/><circle cx="171.4" cy="349.0" r="0.8" fill="#c8a270"/><circle cx="177.6" cy="335.6" r="0.4" fill="#d8b480"/><circle cx="173.1" cy="338.2" r="0.4" fill="#5a3e24"/><circle cx="168.6" cy="357.7" r="0.6" fill="#d8b480"/><circle cx="173.6" cy="346.3" r="0.7" fill="#3a2a18"/><circle cx="177.1" cy="346.0" r="0.8" fill="#d8b480"/><circle cx="162.3" cy="351.7" r="0.8" fill="#5a3e24"/><circle cx="163.9" cy="353.6" r="0.6" fill="#6a4a2a"/><circle cx="166.7" cy="350.3" r="0.6" fill="#5a3e24"/><circle cx="167.0" cy="344.0" r="0.4" fill="#5a3e24"/><circle cx="161.3" cy="354.6" r="0.4" fill="#6a4a2a"/><circle cx="178.6" cy="356.2" r="0.5" fill="#3a2a18"/><circle cx="167.9" cy="348.8" r="0.4" fill="#6a4a2a"/><circle cx="161.6" cy="350.3" r="0.8" fill="#3a2a18"/><circle cx="165.4" cy="351.8" r="0.8" fill="#c8a270"/><circle cx="168.0" cy="355.1" r="0.5" fill="#6a4a2a"/><circle cx="172.3" cy="338.6" r="0.4" fill="#6a4a2a"/><circle cx="160.8" cy="335.2" r="0.5" fill="#3a2a18"/><circle cx="170.3" cy="346.4" r="0.6" fill="#5a3e24"/><circle cx="174.0" cy="342.4" r="0.6" fill="#c8a270"/><circle cx="160.7" cy="355.4" r="0.4" fill="#5a3e24"/><circle cx="171.7" cy="354.0" r="0.4" fill="#5a3e24"/><circle cx="169.8" cy="355.7" r="0.7" fill="#c8a270"/><circle cx="178.7" cy="349.1" r="0.7" fill="#6a4a2a"/><circle cx="167.7" cy="337.7" r="0.7" fill="#6a4a2a"/><circle cx="169.7" cy="341.3" r="0.5" fill="#c8a270"/><circle cx="169.6" cy="339.9" r="0.8" fill="#6a4a2a"/><circle cx="178.4" cy="338.0" r="0.6" fill="#d8b480"/><circle cx="160.1" cy="355.2" r="0.8" fill="#d8b480"/><circle cx="164.1" cy="340.2" r="0.6" fill="#d8b480"/><circle cx="179.5" cy="338.7" r="0.5" fill="#3a2a18"/><circle cx="163.5" cy="347.4" r="0.7" fill="#3a2a18"/><circle cx="180.5" cy="343.4" r="0.7" fill="#3a2a18"/><circle cx="163.7" cy="345.0" r="0.4" fill="#6a4a2a"/><circle cx="176.8" cy="336.4" r="0.8" fill="#c8a270"/><circle cx="171.4" cy="357.9" r="0.7" fill="#5a3e24"/><circle cx="178.9" cy="357.3" r="0.4" fill="#6a4a2a"/><circle cx="165.2" cy="352.8" r="0.5" fill="#d8b480"/><circle cx="179.7" cy="356.4" r="0.5" fill="#d8b480"/><circle cx="176.2" cy="340.5" r="0.4" fill="#6a4a2a"/><circle cx="165.3" cy="352.5" r="0.5" fill="#6a4a2a"/><circle cx="174.7" cy="344.9" r="0.4" fill="#3a2a18"/><circle cx="167.0" cy="340.3" r="0.4" fill="#5a3e24"/><circle cx="174.8" cy="351.9" r="0.6" fill="#3a2a18"/><circle cx="174.3" cy="350.8" r="0.6" fill="#3a2a18"/>
<path d="M144.1 331.2 L150.4 329.8 L161.6 355.5 L155.3 356.9 z" fill="#b08a5c"/>
<path d="M144.8 332.0L150.7 330.9" stroke="#e0c08c" stroke-width="0.7"/>
<path d="M146.4 335.0L152.4 333.9" stroke="#e0c08c" stroke-width="0.7"/>
<path d="M148.1 338.0L154.0 336.8" stroke="#e0c08c" stroke-width="0.7"/>
<path d="M149.8 340.9L155.7 339.8" stroke="#e0c08c" stroke-width="0.7"/>
<path d="M151.5 343.9L157.4 342.7" stroke="#e0c08c" stroke-width="0.7"/>
<path d="M153.2 346.8L159.1 345.7" stroke="#e0c08c" stroke-width="0.7"/>
<path d="M154.9 349.8L160.8 348.6" stroke="#e0c08c" stroke-width="0.7"/>
<path d="M156.6 352.7L162.5 351.6" stroke="#e0c08c" stroke-width="0.7"/>
<path d="M148.3 353.4L160.2 335.1" stroke="#6a4a2a" stroke-width="0.6"/>
<path d="M154.6 331.2 L182.7 331.2 L180.9 335.1 L159.8 335.1 z" fill="#9a7248"/>
<path d="M155.0 332.6Q169.4 336.8 183.1 333.2" stroke="#ddb884" stroke-width="0.9" fill="none"/>
<path d="M147.6 321.1V332.6" stroke="#c9a070" stroke-width="0.9"/>
<path d="M151.1 321.1V332.6" stroke="#c9a070" stroke-width="0.9"/>
<path d="M155.3 321.1V332.6" stroke="#c9a070" stroke-width="0.9"/>
<path d="M160.2 324.6V332.6" stroke="#c9a070" stroke-width="0.9"/>
<path d="M170.1 324.6V332.6" stroke="#c9a070" stroke-width="0.9"/>
<path d="M178.5 321.1V332.6" stroke="#c9a070" stroke-width="0.9"/>
<path d="M182.0 321.1V332.6" stroke="#c9a070" stroke-width="0.9"/>
<path d="M147.6 323.9L160.2 327.4 M170.1 327.4L182.0 323.9" stroke="#b08a60" stroke-width="0.5"/>
<path d="M163.1 278.3 L171.4 278.3 L172.4 316.6 L164.2 316.6 z" fill="#f4f2ee"/>
<path d="M162.8 286.0 L171.7 286.0 L172.2 298.2 L162.3 298.2 z" fill="#d93a22"/>
<path d="M164.2 316.2 L172.4 316.2 Q173.5 323.9 175.9 332.6 L160.1 332.6 Q162.8 323.9 164.2 316.2 z" fill="#dc3c22"/>
<rect x="160.5" y="264.8" width="12.2" height="14.1" fill="#d63a24"/>
<rect x="162.1" y="268.6" width="9.0" height="4.5" fill="#8a3a30"/>
<path d="M159.5 273.1H173.7 M159.9 278.3H173.4" stroke="#e8503a" stroke-width="0.9"/>
<path d="M163.4 259.6V264.8 M166.6 258.3V264.8 M170.5 259.0V264.8 M173.0 262.2V266.1" stroke="#b9b9b9" stroke-width="0.5"/>
<!-- white box and logo -->
<rect x="137" y="357.6" width="56.6" height="51.4" fill="#fff"/>
<g transform="translate(165.6 377.7)" fill="#e3241c"><path d="M-12.0 3.2L-12.6 1.9L-13.0 0.7L-13.1 -0.7L-13.0 -2.0L-12.6 -3.3L-11.9 -4.6L-10.9 -5.7L-9.7 -6.8L-8.4 -7.7L-6.8 -8.5L-5.1 -9.1L-3.3 -9.5L-1.4 -9.6L0.5 -9.6L2.3 -9.3L4.0 -8.8L5.5 -8.1L6.9 -7.4L8.1 -6.5L9.1 -5.5L9.9 -4.4L10.4 -3.3L10.6 -2.2L10.7 -1.1L10.5 -0.0L10.1 1.0L9.5 2.0L8.7 2.8L7.8 3.5L6.8 4.1L5.7 4.6L4.6 4.9L3.5 5.1L2.4 5.2L1.3 5.2L0.2 5.1L-0.7 4.8L-1.5 4.4L-2.2 3.9L-2.7 3.4L-3.1 2.9L-3.4 2.3L-3.5 1.8L-3.4 1.3L-3.3 0.9L-1.4 0.4L-1.6 0.6L-1.7 0.9L-1.8 1.2L-1.7 1.6L-1.5 1.9L-1.3 2.3L-0.9 2.6L-0.4 2.9L0.2 3.1L0.8 3.2L1.5 3.3L2.2 3.2L2.9 3.1L3.6 2.9L4.3 2.6L5.0 2.2L5.5 1.8L6.0 1.2L6.4 0.6L6.7 -0.0L6.8 -0.7L6.8 -1.4L6.6 -2.1L6.3 -2.8L5.9 -3.5L5.3 -4.2L4.5 -4.8L3.6 -5.4L2.6 -5.8L1.5 -6.2L0.3 -6.5L-1.0 -6.5L-2.2 -6.4L-3.5 -6.2L-4.8 -6.0L-6.1 -5.6L-7.3 -5.1L-8.5 -4.4L-9.5 -3.6L-10.4 -2.7L-11.1 -1.7L-11.7 -0.6L-12.1 0.6L-12.2 1.9L-12.0 3.2z"/><path d="M-12.0 3.2L-12.6 1.9L-13.0 0.7L-13.1 -0.7L-13.0 -2.0L-12.6 -3.3L-11.9 -4.6L-10.9 -5.7L-9.7 -6.8L-8.4 -7.7L-6.8 -8.5L-5.1 -9.1L-3.3 -9.5L-1.4 -9.6L0.5 -9.6L2.3 -9.3L4.0 -8.8L5.5 -8.1L6.9 -7.4L8.1 -6.5L9.1 -5.5L9.9 -4.4L10.4 -3.3L10.6 -2.2L10.7 -1.1L10.5 -0.0L10.1 1.0L9.5 2.0L8.7 2.8L7.8 3.5L6.8 4.1L5.7 4.6L4.6 4.9L3.5 5.1L2.4 5.2L1.3 5.2L0.2 5.1L-0.7 4.8L-1.5 4.4L-2.2 3.9L-2.7 3.4L-3.1 2.9L-3.4 2.3L-3.5 1.8L-3.4 1.3L-3.3 0.9L-1.4 0.4L-1.6 0.6L-1.7 0.9L-1.8 1.2L-1.7 1.6L-1.5 1.9L-1.3 2.3L-0.9 2.6L-0.4 2.9L0.2 3.1L0.8 3.2L1.5 3.3L2.2 3.2L2.9 3.1L3.6 2.9L4.3 2.6L5.0 2.2L5.5 1.8L6.0 1.2L6.4 0.6L6.7 -0.0L6.8 -0.7L6.8 -1.4L6.6 -2.1L6.3 -2.8L5.9 -3.5L5.3 -4.2L4.5 -4.8L3.6 -5.4L2.6 -5.8L1.5 -6.2L0.3 -6.5L-1.0 -6.5L-2.2 -6.4L-3.5 -6.2L-4.8 -6.0L-6.1 -5.6L-7.3 -5.1L-8.5 -4.4L-9.5 -3.6L-10.4 -2.7L-11.1 -1.7L-11.7 -0.6L-12.1 0.6L-12.2 1.9L-12.0 3.2z" transform="rotate(180)"/><ellipse cx="-0.4" cy="0" rx="2.6" ry="2.1"/></g>
<text x="165.3" y="394.8" font-size="5.4" font-weight="900" text-anchor="middle" fill="#1a1a1a" textLength="47" lengthAdjust="spacingAndGlyphs" font-family="'Liberation Serif','Noto Serif CJK SC',serif" font-style="italic">北海艺术设计学院</text>
<text x="165.3" y="397.6" font-size="1.9" text-anchor="middle" fill="#444" textLength="44" lengthAdjust="spacingAndGlyphs" font-family="'Liberation Sans',sans-serif">BEIHAI UNIVERSITY OF ART AND DESIGN</text>
<!-- black bands -->
<rect x="193.4" y="59" width="47.2" height="350" fill="#000"/>
<rect x="707.3" y="59" width="50.7" height="350" fill="#000"/>
<!-- map -->
<g filter="url(#mb)">
<path d="M357.2 84.7h.5M373.8 92.5h.5M336.5 97.6h.5M334.9 95h.5M337.4 82.6h.5M341.6 87.3h.5M377 93.6h.5M399 89.7h.5M343.2 83.5h.5M346 100.3h.5M381.8 92.7h.5M336.6 86.7h.5M385 94.7h.5M356.5 100.4h.5M367.3 90.1h.5M393.9 104.5h.5M351 100h.5M388.9 89.7h.5M343.8 97h.5M335 103.4h.5M391.6 100h.5M400.3 90.6h.5M386.2 100.8h.5M377.2 95.8h.5M368.9 103.3h.5M336.7 104.6h.5M396.1 89.6h.5M362 103.4h.5M333.7 96h.5M345 83.5h.5M336.5 107h.5M342 88.2h.5M338.2 95.5h.5M395.9 110.5h.5M353.7 94.3h.5M345.7 87.7h.5M350.1 96.8h.5M377.9 88.8h.5M360.8 99.7h.5M406.3 104.2h.5M372.2 101.6h.5M402.2 107.5h.5M400.2 108.1h.5M362.6 93.7h.5M340 102.2h.5M336.8 81.7h.5M348.2 85.1h.5M339.8 92.4h.5M379.9 84.6h.5M351.6 91.8h.5M360.4 83.7h.5M368.3 96.8h.5M338.6 83h.5M358.7 88.8h.5M373.2 84.6h.5M399.3 104.4h.5M352.3 92.5h.5M345 107.2h.5M357.7 87.3h.5M398.5 108.4h.5M395.8 106h.5M349.6 98h.5M334.1 89.4h.5M352.2 104.3h.5M406.6 95.4h.5M406.5 92.5h.5M349.1 87.5h.5M347.3 86.7h.5M397.5 96.6h.5M382.9 108.2h.5M338.5 103.2h.5M403 107.6h.5M390.5 96.6h.5M345.9 107.8h.5M407.8 93.6h.5M388.5 85.4h.5M341.8 84.7h.5M402.6 108.4h.5M343.3 109.2h.5M408.5 103h.5M359.3 99.1h.5M407.7 102.8h.5M396.4 86.9h.5M351.6 89.9h.5M350.7 100.5h.5M352.2 94.4h.5M342.2 112.2h.5M359.5 95.8h.5M371.1 98.5h.5M366.3 85.9h.5M345.4 96.4h.5M388.5 99.4h.5M357.4 98h.5M340.2 99.5h.5M351.3 89.3h.5M392.2 97.6h.5M375.8 106.7h.5M403.2 95.3h.5M379.7 97.6h.5M371.9 104.3h.5M367.2 98.6h.5M405.5 88.7h.5M341.4 95.3h.5M337.6 88h.5M337.6 103.5h.5M344 105.2h.5M363 96.9h.5M409.2 109.4h.5M344.5 94.9h.5M372.2 91.5h.5M347.2 90.8h.5M375.2 95.2h.5M333.3 91.3h.5M380.6 97.8h.5M340.1 88.9h.5M335 107.4h.5M353 84h.5M395.9 88.6h.5M343.6 112.5h.5M376.5 104.6h.5M338.9 81.4h.5M385.7 94.7h.5M381.5 108.3h.5M338.5 110.2h.5M367.4 91.5h.5M352.8 83.9h.5M373.1 87.9h.5M340.5 85.1h.5M335.9 86.6h.5M356.3 90.3h.5" stroke="#b0b0b0" stroke-width="0.5" fill="none"/>
<path d="M319 204.8h.5M301.2 191.3h.5M317.2 236.1h.5M279.9 227h.5M331.1 182.8h.5M323.1 221.9h.5M293.9 230.8h.5M314.1 287.9h.5M315.4 246.3h.5M294.7 211.7h.5M326.7 250.5h.5M287 225.1h.5M277.7 223.5h.5M333.7 235.6h.5M299.5 230.3h.5M280.7 230.6h.5M307.1 233.5h.5M318.4 248.9h.5M316 275.5h.5M293.6 209.1h.5M316.6 247.2h.5M328.1 245.3h.5M317.3 267.5h.5M276.4 232.9h.5M322.1 269.2h.5M313.8 253.2h.5M300.5 170.4h.5M321.6 259.8h.5M301.4 234.2h.5M312.1 177.9h.5M317.5 200.3h.5M317 194.6h.5M317.7 287.1h.5M300.8 215.9h.5M319.5 244h.5M311 179.3h.5M317.9 206.5h.5M305.9 171.5h.5M313 253.1h.5M313.3 204.9h.5M302.3 225.8h.5M298.9 184.2h.5M328.2 193.9h.5M323.2 286.2h.5M297.7 202.2h.5M281.3 239.8h.5M276.6 232.9h.5M332.3 185.9h.5M323.2 231h.5M327.8 254.4h.5M300.3 173h.5M297.8 206.2h.5M324.5 184.4h.5M330.5 255.6h.5M328.8 204.8h.5M292.4 217.1h.5M335.5 240.7h.5M291.6 221.4h.5M302 192.8h.5M327.6 267.4h.5M331.5 235.9h.5M316.3 175.9h.5M317.2 224.1h.5M318.6 247.3h.5M330.5 185.3h.5M299.3 211.2h.5M311.9 206.1h.5M305.1 217.3h.5M301 196.4h.5M329.1 289.6h.5M297.8 186.8h.5M318.3 219.5h.5M295.3 232.9h.5M292.7 210.6h.5M326.1 195.9h.5M294.3 223.5h.5M332.4 271.8h.5M326.8 172.6h.5M328.4 226.8h.5M307.2 170h.5M323.6 272.7h.5M331.5 256.6h.5M298.3 236.2h.5M311.2 206.5h.5M302.9 239.9h.5M293.5 196.8h.5M308.1 171.3h.5M287.6 225.3h.5M332.7 247.3h.5M327.6 227h.5M332.8 254.6h.5M295.7 200.9h.5M312.7 281h.5M290.1 220.5h.5M313.7 193.8h.5M321.6 258.7h.5M301.5 194.6h.5M333.5 207.4h.5M323.2 197.7h.5M300.9 192.5h.5M282.2 220h.5M312.6 283.9h.5M328.5 276h.5M317.2 289.7h.5M330.8 209.5h.5M318.1 173.8h.5M312.5 215.4h.5M292.5 209.8h.5M332.5 184.8h.5M333.1 194.9h.5M323.3 221.9h.5M270.3 226.8h.5M328.5 173.6h.5M319.5 174.9h.5M330.1 200.8h.5M318.2 277.8h.5M332.6 244h.5M329.8 246.1h.5M331.6 172.9h.5M282.9 227h.5M293.4 200.1h.5M296.4 229.2h.5M330.6 192h.5M322 258.6h.5M323.4 262.7h.5M308.6 209.3h.5M320.6 179.5h.5M269.2 236.3h.5M327.5 288.5h.5M273.5 229.8h.5" stroke="#bbb" stroke-width="0.5" fill="none"/>
<path d="M320.7 138.7h.5M302.4 136.4h.5M317.3 155.7h.5M322.2 168.6h.5M319 114.4h.5M325.8 127.2h.5M315.2 133.2h.5M321.8 120.2h.5M302.9 123.6h.5M299.3 171.3h.5M315.7 129.7h.5M308.6 179.4h.5M312.9 122.6h.5M324.5 154.1h.5M331.6 112.9h.5M311.7 166.5h.5M325.8 173.6h.5M330.9 148.9h.5M329.2 133.1h.5M326.8 138.8h.5M303.4 163.4h.5M329.8 113.2h.5M316.4 151.6h.5M301.8 132.8h.5M303.2 150.1h.5M318.5 120.5h.5M319.5 119.1h.5M305.4 120.5h.5M324 146.2h.5M308.6 146.4h.5M318 112.1h.5M299.7 157.2h.5M309.2 126.5h.5M305.2 176.5h.5M305.4 147.6h.5M307.1 136.4h.5M326.7 179.7h.5M307.4 120h.5M321.4 120.5h.5M309.7 166.6h.5M309 171.2h.5M311.1 117.4h.5M318.1 173.3h.5M307.7 143h.5M313.5 174.4h.5M324.4 177.5h.5M329.7 178.2h.5M312 109.3h.5M329.1 134.3h.5M328.2 151.6h.5M325.2 117.3h.5M323.7 121.9h.5M309 168.5h.5M325.3 119h.5M301.8 135.2h.5M313.3 134h.5M321.3 172.3h.5M322.6 108.1h.5M325.7 114.1h.5M316.5 146.4h.5M317.5 128.2h.5M309.6 148.8h.5M309.8 154.5h.5M310.6 138h.5M312.2 122.9h.5M322.8 163.6h.5M311 118.7h.5M311.6 113.3h.5M313 108.3h.5M317.9 111.4h.5M321.7 163.4h.5M313.1 109.4h.5M312.8 133.5h.5M330 115.5h.5M326.4 179.7h.5M321.6 166.2h.5M300.8 178.6h.5M312.3 176.8h.5M328.7 117.6h.5M323.8 174.8h.5M322.5 117.2h.5M327.9 125.8h.5M324.8 116h.5M312.7 174h.5M312.9 129.1h.5M299.6 175.2h.5M319.6 172.2h.5M299.9 163.9h.5M317.9 132.2h.5M327 146.8h.5M315.7 171.2h.5M297.4 179.5h.5M317.7 134.8h.5M324.1 125.1h.5M307.3 162.4h.5M310.4 118.5h.5M322 108.9h.5M325 124.2h.5M318 178.8h.5M316 154.9h.5" stroke="#bbb" stroke-width="0.5" fill="none"/>
<path d="M318.1 245.4h.5M325.3 271.7h.5M322.8 299.9h.5M313.8 259.2h.5M326.1 246.7h.5M313.2 267.1h.5M316 280.9h.5M324.6 257.7h.5M325.5 274.3h.5M313.9 302.4h.5M316.5 254.4h.5M313 284.2h.5M331.3 293h.5M320.2 261.4h.5M324 266.7h.5M326 272.4h.5M332.9 290h.5M316.6 300.4h.5M311.8 277.7h.5M320.3 259.8h.5M312.1 292.8h.5M332.9 254h.5M315.4 282.4h.5M322.7 284.4h.5M329.9 255.9h.5M318 263.6h.5M311.9 299.5h.5M329.2 288.9h.5M328.3 273.7h.5M328.2 272.9h.5M316.1 251.7h.5M316.2 247.7h.5M318.6 291h.5M327.1 296.8h.5M327.5 261.5h.5M323.8 271.9h.5M329.3 277.2h.5M317 284.4h.5M333.5 258.5h.5M331.5 246.2h.5M316.9 259.7h.5M328.3 302.9h.5M328.3 265.2h.5M331.5 265.3h.5M316.4 300.6h.5M325.6 287.5h.5M326.4 305h.5M321.8 296.5h.5M327.2 297.6h.5M321 289.5h.5M324.2 264.1h.5M315.7 283.3h.5M312.6 300.8h.5M314.1 246.9h.5M313.2 301.9h.5M318.9 253.9h.5M327.1 283.9h.5M327.2 290.2h.5M312.3 281.3h.5M319.3 295.1h.5M330.1 299.6h.5M312.3 298.2h.5M332.3 302.9h.5M313.3 257.8h.5M313.4 247.4h.5M330.7 294.8h.5M325.7 295.6h.5M325.6 262.8h.5M313.1 251.3h.5M328.6 257.8h.5M318.3 271.1h.5M317.4 288.9h.5M319.4 264.9h.5M333.5 276h.5M330.8 283h.5M321 292.4h.5M318.9 288.3h.5M323.4 258.5h.5M331.1 250.8h.5M330.1 255.7h.5M328.7 304.9h.5M322.3 293.9h.5M315.1 275.5h.5M318.9 296h.5M316.9 302.8h.5M317.4 258.4h.5M327.2 275.7h.5M313.3 284.1h.5M312.6 293.3h.5M327.2 293.3h.5M325.6 267h.5M320.2 269.4h.5M331.7 250.6h.5M331.7 246.8h.5M315.6 261.3h.5M332 275.9h.5M319.7 299.2h.5M316.2 273.4h.5M323.3 291.3h.5M328.5 284.7h.5M319 265.2h.5M314.4 296.7h.5M326.4 290.5h.5M314.7 272.1h.5M329 280.6h.5M313.7 273.5h.5M331.6 259.8h.5M315.2 263.7h.5M327.3 296.7h.5M314.4 254.8h.5M316.6 265.2h.5M323.1 255.1h.5M318.5 256.8h.5M333.8 289.7h.5M313.1 304h.5M313.1 268.7h.5M334 293.8h.5M328 271.8h.5M315.4 284.2h.5M313.2 257.9h.5M319.9 247.4h.5M320.1 293.5h.5M327.1 275.8h.5M325.7 273.5h.5M314.1 282.1h.5M320.3 290.5h.5M332.2 271.5h.5M324.3 291h.5M320.7 259.2h.5M327.8 299h.5M329 288h.5M330.9 286.7h.5M325.9 273h.5M318.1 283.6h.5M313 270.9h.5M329.2 288.8h.5M325.6 260.5h.5M320.7 273.1h.5M325.4 270.3h.5M326.7 302h.5M315 285.2h.5M329.1 269h.5M322.3 304.7h.5M311.6 278.4h.5M314.5 293h.5M332.9 277h.5M313.1 280.3h.5M323.5 289h.5M322.8 284.3h.5M330.3 277.1h.5M320.4 303.1h.5M315.7 287h.5M320 291.8h.5M313.6 305.3h.5M319.1 248.8h.5M317.2 269.7h.5M320.7 287.9h.5M319 261.5h.5M316 290.5h.5M332.9 277.4h.5M315.9 294.2h.5M320 258.2h.5M313.8 292.6h.5M329.8 284h.5M321.8 279.6h.5M316.1 304.1h.5M319.1 284.2h.5M330.1 295.1h.5M321.8 263.2h.5M323.7 252.9h.5M330.4 266.9h.5M330.8 261.6h.5M319.6 260.8h.5M320.8 256.6h.5M317.4 260.2h.5M317.9 274.5h.5M320.8 284.2h.5M326.3 267.4h.5M332.7 297.4h.5M312.1 295.8h.5M332.1 293.1h.5M314 296h.5M325.7 246.2h.5M311 303.3h.5M326.2 260.5h.5M313.1 254h.5M316.2 292.6h.5M318.9 254.6h.5M332.1 293.6h.5M314.7 299.6h.5M325.1 292.9h.5M326.5 299.8h.5M329.3 296.4h.5M315.4 287.5h.5M323.3 290.5h.5M321.1 299.1h.5M323.8 261.4h.5M316.3 253.8h.5M322.4 248.9h.5M321.8 254.1h.5" stroke="#999" stroke-width="0.5" fill="none"/>
<path d="M415.4 103.3h.5M414.7 105.5h.5M411.7 100.6h.5M400.9 107.1h.5M416 102.9h.5M422.5 107.6h.5M411.5 102.5h.5M406.6 101.2h.5M413.2 105.2h.5M425.9 96.4h.5M425.9 100.1h.5M415.8 95.7h.5M410.4 97.2h.5M409.4 106.3h.5M427.7 104.9h.5M401.6 96.6h.5M400.2 92.9h.5M428.9 107h.5M428.5 107.1h.5M419.3 107.7h.5M421.8 106.6h.5M421.3 93.7h.5M420.9 102h.5M423.9 89.9h.5M405.7 87.8h.5M420.5 98.9h.5M417.6 95.2h.5M409.5 100.7h.5M410 101h.5M401.7 105.7h.5M401.2 90.5h.5M425.4 105.9h.5M428.8 101.6h.5M400.4 99.6h.5M430.7 102.5h.5M412.9 89.9h.5M420.2 93.7h.5M404 87.1h.5M422.5 94.7h.5M423 92.8h.5M422.9 89.3h.5M415.2 88.5h.5M411.5 105.9h.5M419.7 100.6h.5M429.6 113h.5M417.8 96.4h.5M410.4 106.9h.5M418.8 96.9h.5M425.3 96.1h.5M400.1 95.4h.5M413.2 106.3h.5M417.9 95.7h.5M410.9 89.4h.5M429.2 94.4h.5M414.6 93.5h.5M424.8 102h.5M424.2 94.4h.5M427.7 104.1h.5M414.9 106.4h.5M405.9 93h.5M411.4 105.5h.5M412.6 104h.5M404.7 88h.5M424.7 91.8h.5M418.7 98.1h.5M427.1 102.9h.5M417.8 95.3h.5M424.4 100.9h.5M429.6 112.4h.5M408 87.8h.5M406.3 92.6h.5M402.6 88.2h.5M418.7 99.9h.5M408.1 105.5h.5M421 99.8h.5M414 91.9h.5M406.9 87.8h.5M408 98.4h.5M401.7 91.4h.5M421.2 96.6h.5M403.3 97.4h.5M408.1 90.7h.5M415.1 92.2h.5M407.5 91.3h.5M422.5 93.1h.5M404.4 101.6h.5M426.4 107.7h.5M414.2 98h.5M425.8 102.6h.5M419.7 91.3h.5M406.9 88.4h.5M422.4 105.2h.5M408.3 100.4h.5M404.9 95.7h.5M426.3 97.8h.5M405.3 103.1h.5M420.9 93.6h.5M415 96.2h.5M408.1 93.3h.5M403.1 96.3h.5M422.8 96.4h.5M425.3 98h.5M426.1 104.3h.5M405.8 101.2h.5M428.6 93.9h.5M417.9 91.2h.5M422.3 93.1h.5M402.5 89.5h.5M419.1 103.2h.5M408.6 93.5h.5M425.4 106.2h.5M406.3 88.7h.5M423 100.3h.5M425.4 97.8h.5M428.5 102.6h.5M427.3 95.5h.5M411.5 92h.5M411.6 106.6h.5M400.1 104h.5M414 103.9h.5" stroke="#666" stroke-width="0.5" fill="none"/>
<path d="M474.4 115.1h.5M542.1 119.1h.5M493.9 115h.5M499.8 116.1h.5M512.6 110.2h.5M465.6 98.7h.5M464.4 112h.5M518.8 110h.5M547.3 115.2h.5M467 99.4h.5M510.7 109.4h.5M477 111.3h.5M500.5 107.3h.5M486.1 105h.5M541 120.3h.5M542 118.6h.5M467.9 109.9h.5M555.9 120.9h.5M486.9 107.3h.5M504.8 109.5h.5M464.7 99.8h.5M557 116.7h.5M541.4 119.6h.5M513.3 107.6h.5M492.4 113.3h.5M474.4 111.9h.5M488.8 108.5h.5M474.7 99.6h.5M491.2 106.9h.5M490.7 102.6h.5M471.2 110.6h.5M544.4 112.3h.5M518.2 113.4h.5M482.2 115h.5M507.5 110.7h.5M522.3 108.6h.5M492.9 102.6h.5M484.2 109.7h.5M500 111.7h.5M463.8 105.5h.5M516.8 109.2h.5M491.4 116.6h.5M468.7 106.4h.5M505.5 115.6h.5M473.3 102.1h.5M556 115.7h.5M477.7 105.1h.5M497 114h.5M522.6 118.7h.5M534.6 115.8h.5M539.1 114.9h.5M537.2 111.7h.5M518.3 107.2h.5M538.9 119.3h.5M506.7 108.3h.5M500.7 110.9h.5M500.1 104.7h.5M539.3 118.7h.5M511.3 107.9h.5M480.6 104.2h.5M476.8 111.4h.5M544.8 118.4h.5M463.7 97.4h.5M517.6 109.3h.5M552.2 116.6h.5M513 109.9h.5M497.5 111.9h.5M528.5 110.1h.5M472.3 106.1h.5M501.7 111h.5M505.5 112.7h.5M514.3 117.8h.5M479.3 104.6h.5M557.9 118h.5M549.7 114.4h.5M477.9 103.8h.5M512.5 109.5h.5M481 101h.5M524 112.1h.5M502.7 117h.5M492.5 114.5h.5M463 104.2h.5M544.6 111.7h.5M511.1 110.8h.5M488.5 113.3h.5M518.6 107h.5M474.5 100.3h.5M472.4 100.7h.5M513.5 118h.5M522.3 117.5h.5M479.1 103.2h.5M506.4 106.4h.5M505.4 112.6h.5M553.3 118.8h.5M486.3 106.5h.5M509.8 117.2h.5M486.3 100.7h.5M514.6 106.4h.5M496.8 102.6h.5M481.3 103.7h.5" stroke="#b0b0b0" stroke-width="0.5" fill="none"/>
<path d="M558.9 123h.5M599.4 131.9h.5M584.8 130.5h.5M577.2 127.3h.5M637.6 139.4h.5M635.1 142.2h.5M562.7 123.2h.5M620.8 137.4h.5M553.9 115.5h.5M565.6 120.7h.5M579.2 126.6h.5M630.4 139.5h.5M554.6 122.2h.5M591.3 130.9h.5M618.1 136h.5M572.9 122.1h.5M599.7 128.7h.5M561 123.6h.5M555.8 123.4h.5M581.3 129.5h.5M630 138.4h.5M604.6 134.7h.5M629 137.2h.5M597.7 130.5h.5M565.2 124h.5M631 142h.5M599.6 127.9h.5M582.6 128.5h.5M578.5 128.6h.5M581.2 129.2h.5M643.6 143.8h.5M615.2 134h.5M552.7 120.4h.5M590.1 131.5h.5M561 120.1h.5M597.2 132.2h.5M572.8 126.3h.5M570.5 124h.5M638.4 142.5h.5M566.4 126h.5M595.1 133h.5M587.4 125.7h.5M554.4 119h.5M634.1 139.4h.5M611 134.9h.5M573.5 121.9h.5M593.7 128.7h.5M579.1 124.3h.5M557.7 120h.5M565.9 122.9h.5M582.2 130.3h.5M565.1 118.9h.5M601.9 133.4h.5M603.5 135.6h.5M618.6 139h.5M552.7 118.6h.5M564.4 120h.5M571.6 122.4h.5M575.3 128.3h.5M572.3 120.8h.5M623.2 135.1h.5M577.2 125h.5M559.4 119.7h.5M584.1 130.4h.5M635.1 138h.5M589.3 132.3h.5M616.3 135.5h.5M602.4 132.1h.5M634.2 137.6h.5M588.5 124.6h.5" stroke="#b0b0b0" stroke-width="0.5" fill="none"/>
<path d="M314.6 72.5 L330 75.7 L400 84.1 L462 93.7 L550 110.1 L663.7 131.8 L661.6 147.2 L665.2 149.2 L666.1 153.5 L662.8 155.2 L660.4 173.3 L683 175.3 L670.5 240 L659.6 293 L657.2 311.1 L580.1 307.5 L578.9 307.5 L578.4 347.2 L572.9 347.2 L571.7 334 L566.9 334 L566.4 324.3 L552.3 321.9 L554.2 297.8 L554.2 287 L520.5 288.2 L520.5 305.1 L514.5 306.3 L513.3 312.3 L478.3 312.3 L478.3 272.5 L438.6 271.3 L428.4 270.8 L428.4 251.6 L426 251.6 L426 246.7 L363.3 247.2 L363.7 270.8 L374.8 271.3 L374.1 315.9 L336.7 314.7 L336.3 308 L310.7 306.3 L312.2 245.3 L266.4 243.6 L270.5 218.9 L284.9 218.9 L285.7 213.9 L289.8 213.9 L295.3 170 L299.4 139.5 L305.9 105.3 L322.3 106.5 L326.5 91 L330 75.7" fill="none" stroke="#1e1e1e" stroke-width="0.95"/>
<path d="M680.3 177.3 L667.8 240 L657 292.5" fill="none" stroke="#222" stroke-width="0.6"/>
<path d="M657.2 311.1 L653.6 355.7" fill="none" stroke="#888" stroke-width="0.4"/>
<path d="M326.6 107 L327.6 98.6 L336.3 100 L334.8 107.7" fill="none" stroke="#2a2a2a" stroke-width="0.8"/>
<path d="M328.6 101 L334.3 101.9" fill="none" stroke="#2a2a2a" stroke-width="0.5"/>
<g fill="#fff" stroke="#1e1e1e" stroke-width="0.62"><ellipse cx="333.8" cy="111" rx="0.8" ry="0.6"/><ellipse cx="331.9" cy="114.6" rx="0.8" ry="0.5"/><ellipse cx="333" cy="116.2" rx="1" ry="0.8"/><ellipse cx="331.6" cy="117.6" rx="0.8" ry="0.5"/><ellipse cx="332.5" cy="120.4" rx="1.1" ry="0.7"/><ellipse cx="331.6" cy="121.5" rx="1" ry="0.9"/><ellipse cx="332.9" cy="123.1" rx="0.8" ry="0.7"/><ellipse cx="332.6" cy="127.1" rx="1.2" ry="1.2"/><ellipse cx="333.5" cy="130.2" rx="0.7" ry="0.5"/><ellipse cx="333.4" cy="131.3" rx="1.1" ry="0.9"/><ellipse cx="333.9" cy="134.4" rx="1" ry="0.8"/><ellipse cx="334.5" cy="136.7" rx="0.7" ry="0.7"/><ellipse cx="334.3" cy="140" rx="0.9" ry="0.7"/><ellipse cx="332.4" cy="143.7" rx="0.7" ry="0.6"/><ellipse cx="332.6" cy="144.9" rx="0.9" ry="0.6"/><ellipse cx="332.6" cy="145.7" rx="0.7" ry="0.6"/><ellipse cx="332.3" cy="147.9" rx="1.1" ry="0.7"/><ellipse cx="331.5" cy="150.7" rx="0.8" ry="0.5"/><ellipse cx="330.3" cy="152.3" rx="0.7" ry="0.5"/><ellipse cx="331.2" cy="155.8" rx="1.1" ry="0.7"/><ellipse cx="332.7" cy="159.2" rx="0.8" ry="0.6"/><ellipse cx="333" cy="162.2" rx="0.9" ry="0.6"/><ellipse cx="332.8" cy="164.6" rx="1" ry="0.7"/><ellipse cx="332.9" cy="167.3" rx="0.8" ry="0.5"/><ellipse cx="333.2" cy="168.3" rx="0.7" ry="0.5"/><ellipse cx="332.6" cy="170.4" rx="1.1" ry="0.7"/><ellipse cx="332.1" cy="172.6" rx="1.1" ry="1.1"/><ellipse cx="332.5" cy="174.4" rx="0.7" ry="0.6"/><ellipse cx="331.7" cy="175.3" rx="0.8" ry="0.6"/><ellipse cx="331.8" cy="177.9" rx="1.1" ry="0.9"/><ellipse cx="331.7" cy="179.8" rx="1.1" ry="0.9"/></g>
<circle cx="315.5" cy="115.9" r="4.3" fill="#fff" stroke="#555" stroke-width="0.45"/>
<circle cx="315.5" cy="115.9" r="0.35" fill="#555"/>
<circle cx="309" cy="154.7" r="4.8" fill="#fff" stroke="#555" stroke-width="0.45"/>
<circle cx="309" cy="154.7" r="0.35" fill="#555"/>
<circle cx="307.8" cy="168.9" r="4.8" fill="#fff" stroke="#555" stroke-width="0.45"/>
<circle cx="307.8" cy="168.9" r="0.35" fill="#555"/>
<circle cx="315.5" cy="166" r="2.9" fill="#fff" stroke="#555" stroke-width="0.45"/>
<circle cx="315.5" cy="166" r="0.35" fill="#555"/>
<circle cx="323.5" cy="165.3" r="3.4" fill="#fff" stroke="#555" stroke-width="0.45"/>
<circle cx="323.5" cy="165.3" r="0.35" fill="#555"/>
<path d="M338.1 120.3 L338.4 119.5 L338.7 118.4 L339 117 L339.5 115.6 L340.1 114.3 L340.8 113.1 L341.7 112 L342.8 111 L344 110.1 L345.2 109.2 L346.6 108.4 L348.1 107.7 L349.7 107 L351.4 106.4 L353.2 105.9 L355 105.4 L357 105.1 L358.9 104.9 L360.9 104.9 L363 105 L365.1 105.1 L367.3 105.4 L369.4 105.8 L371.6 106.2 L373.7 106.7 L375.8 107.4 L377.9 108.1 L380 108.8 L382.1 109.6 L384.2 110.4 L386.4 111.1 L388.6 112 L390.9 112.8 L393.1 113.6 L395.1 114.3 L396.9 114.9 L398.4 115.4 L399.9 115.8 L401.1 116.2 L402.2 116.4 L403.2 116.5 L404.1 116.3 L404.8 115.9 L405.3 115.1 L405.7 114.2 L406 113.2 L406.4 112.2 L406.8 111.3 L407.4 110.4 L408.1 109.4 L408.8 108.4 L409.5 107.5 L410 106.8 L410.4 106.2" fill="none" stroke="#333" stroke-width="0.62"/>
<path d="M341.7 122.1 L342 121.4 L342.3 120.4 L342.7 119.2 L343.2 118 L343.8 116.8 L344.5 115.8 L345.3 114.9 L346.2 114.1 L347.2 113.3 L348.3 112.5 L349.5 111.9 L350.8 111.3 L352.1 110.7 L353.5 110.2 L355 109.8 L356.5 109.5 L358.1 109.2 L359.8 109.1 L361.6 109.1 L363.5 109.2 L365.5 109.3 L367.5 109.6 L369.5 109.9 L371.6 110.4 L373.6 110.9 L375.8 111.5 L378 112.3 L380.1 113 L382.2 113.8 L384.2 114.5 L386.2 115.2 L388.1 115.9 L390 116.7 L391.8 117.3 L393.5 118 L395.1 118.5 L396.6 118.9 L398 119.1 L399.3 119.3 L400.5 119.4 L401.5 119.8 L402.3 120.3 L402.8 121.1 L403.2 122.1 L403.3 123.3 L403.3 124.5 L403.3 125.6 L403.2 126.6 L403 127.5 L402.7 128.4 L402.3 129.3 L402 130 L401.6 130.7 L401.4 131.1" fill="none" stroke="#505050" stroke-width="0.5700000000000001"/>
<circle cx="348.1" cy="100.4" r="3.6" fill="#fff" stroke="#555" stroke-width="0.45"/>
<circle cx="348.1" cy="100.4" r="0.35" fill="#555"/>
<circle cx="367.1" cy="104.9" r="3.6" fill="#fff" stroke="#555" stroke-width="0.45"/>
<circle cx="367.1" cy="104.9" r="0.35" fill="#555"/>
<circle cx="389.3" cy="103.1" r="2.5" fill="#fff" stroke="#555" stroke-width="0.45"/>
<circle cx="389.3" cy="103.1" r="0.35" fill="#555"/>
<circle cx="397.8" cy="104.9" r="3.6" fill="#fff" stroke="#555" stroke-width="0.45"/>
<circle cx="397.8" cy="104.9" r="0.35" fill="#555"/>
<circle cx="353.1" cy="112.2" r="2.2" fill="#fff" stroke="#555" stroke-width="0.45"/>
<circle cx="353.1" cy="112.2" r="0.35" fill="#555"/>
<circle cx="358.9" cy="109.5" r="2.2" fill="#fff" stroke="#555" stroke-width="0.45"/>
<circle cx="358.9" cy="109.5" r="0.35" fill="#555"/>
<circle cx="358" cy="114.5" r="2.2" fill="#fff" stroke="#555" stroke-width="0.45"/>
<circle cx="358" cy="114.5" r="0.35" fill="#555"/>
<circle cx="365.2" cy="116.7" r="3.3" fill="#fff" stroke="#555" stroke-width="0.45"/>
<circle cx="365.2" cy="116.7" r="0.35" fill="#555"/>
<circle cx="368" cy="121.2" r="2.5" fill="#fff" stroke="#555" stroke-width="0.45"/>
<circle cx="368" cy="121.2" r="0.35" fill="#555"/>
<circle cx="376.6" cy="116.7" r="2.5" fill="#fff" stroke="#555" stroke-width="0.45"/>
<circle cx="376.6" cy="116.7" r="0.35" fill="#555"/>
<circle cx="387.5" cy="117" r="4.3" fill="#fff" stroke="#555" stroke-width="0.45"/>
<circle cx="387.5" cy="117" r="0.35" fill="#555"/>
<circle cx="396" cy="118.5" r="2.5" fill="#fff" stroke="#555" stroke-width="0.45"/>
<circle cx="396" cy="118.5" r="0.35" fill="#555"/>
<circle cx="348.1" cy="168.2" r="3.3" fill="#fff" stroke="#555" stroke-width="0.45"/>
<circle cx="348.1" cy="168.2" r="0.35" fill="#555"/>
<circle cx="436.6" cy="108.6" r="5.1" fill="#fff" stroke="#555" stroke-width="0.45"/>
<circle cx="436.6" cy="108.6" r="0.35" fill="#555"/>
<circle cx="439.3" cy="116.7" r="2.2" fill="#fff" stroke="#555" stroke-width="0.45"/>
<circle cx="439.3" cy="116.7" r="0.35" fill="#555"/>
<circle cx="443.9" cy="96.8" r="2.2" fill="#fff" stroke="#555" stroke-width="0.45"/>
<circle cx="443.9" cy="96.8" r="0.35" fill="#555"/>
<circle cx="438.4" cy="96.8" r="1.8" fill="#fff" stroke="#555" stroke-width="0.45"/>
<circle cx="438.4" cy="96.8" r="0.35" fill="#555"/>
<circle cx="433" cy="110.4" r="2.2" fill="#fff" stroke="#555" stroke-width="0.45"/>
<circle cx="433" cy="110.4" r="0.35" fill="#555"/>
<path d="M347 127.5h.5M346.1 116.2h.5M354.8 122.1h.5M350.1 124.3h.5M357.8 129.2h.5M339.9 126.1h.5M348.8 123.7h.5M356.5 122.8h.5M349.1 131.8h.5M348.4 124.2h.5M349.9 130.5h.5M353.1 128.9h.5M347.6 115.7h.5M353.3 125.4h.5M355.1 129.5h.5M341.8 119.1h.5M354.8 125.6h.5M340.5 127.8h.5M353.9 124h.5M340.5 128h.5M347.9 126h.5M346.2 124.7h.5M345 119.9h.5M345.8 119.7h.5M356.9 125.4h.5M349.8 122.9h.5M357.1 130.1h.5M356.9 119.8h.5M350.4 122h.5M348.9 124.2h.5M351.3 121.8h.5M355.8 118.7h.5M358.2 125.4h.5M350.3 122.6h.5M350.9 121h.5M345 130h.5M345.4 128.4h.5M355.8 126.1h.5M348.7 132.6h.5M348.5 131.5h.5M340.6 123.1h.5M351.6 118.3h.5M358.2 125.5h.5M355.8 124.3h.5M353.2 127.7h.5M345.4 118.9h.5M347.9 127.4h.5M344.7 132.1h.5M353.4 117.8h.5M340.6 128.1h.5M345.4 119.3h.5M351.3 120.9h.5M350.8 117.8h.5M358 121h.5M347.4 115.5h.5M347.2 127h.5M344 125.2h.5M341.3 123.7h.5M354.3 123h.5M353.3 117.1h.5M358.6 124.9h.5M345.3 121.5h.5M354.7 124.3h.5M349.3 131.3h.5M351.6 125.1h.5M344.9 131.8h.5M356.7 119.2h.5M346.4 132.8h.5M346.2 123.4h.5M344.5 129h.5" stroke="#888" stroke-width="0.5" fill="none"/>
<g fill="#fff" stroke="#1e1e1e" stroke-width="0.62"><ellipse cx="342.1" cy="118" rx="0.7" ry="0.5"/><ellipse cx="342.5" cy="117.1" rx="1" ry="1"/><ellipse cx="344.2" cy="115.6" rx="1.1" ry="0.9"/><ellipse cx="345.9" cy="115" rx="0.7" ry="0.6"/><ellipse cx="347" cy="115" rx="0.9" ry="0.6"/><ellipse cx="349.2" cy="114.5" rx="0.7" ry="0.7"/><ellipse cx="350.4" cy="114.4" rx="1.3" ry="0.8"/><ellipse cx="351.8" cy="115.1" rx="1.3" ry="1.1"/><ellipse cx="353.8" cy="115.3" rx="0.7" ry="0.6"/><ellipse cx="355.2" cy="116" rx="1" ry="0.8"/><ellipse cx="356.2" cy="117.1" rx="0.8" ry="0.7"/><ellipse cx="358" cy="118.1" rx="1" ry="1"/><ellipse cx="358.9" cy="120.1" rx="1" ry="0.9"/><ellipse cx="359.6" cy="121.2" rx="0.8" ry="0.6"/><ellipse cx="359.7" cy="123" rx="0.6" ry="0.4"/><ellipse cx="359.7" cy="124.6" rx="1.3" ry="0.9"/><ellipse cx="360.4" cy="126.3" rx="1.1" ry="0.7"/><ellipse cx="360.1" cy="128.2" rx="0.8" ry="0.5"/><ellipse cx="359.5" cy="130.1" rx="1.1" ry="0.8"/><ellipse cx="357.8" cy="131.4" rx="1.2" ry="0.8"/><ellipse cx="355.6" cy="131.4" rx="1.4" ry="0.9"/><ellipse cx="354.3" cy="131.9" rx="0.8" ry="0.5"/><ellipse cx="352.1" cy="131.6" rx="0.9" ry="0.6"/><ellipse cx="351.4" cy="132.8" rx="0.9" ry="0.8"/><ellipse cx="349.4" cy="133.1" rx="1" ry="0.9"/><ellipse cx="348.1" cy="133.2" rx="1.2" ry="1"/><ellipse cx="346.8" cy="133.5" rx="1.3" ry="1.1"/><ellipse cx="344.1" cy="134.3" rx="0.9" ry="0.8"/><ellipse cx="342.2" cy="132.9" rx="1.2" ry="1.2"/><ellipse cx="341.6" cy="131.6" rx="1.3" ry="1.2"/><ellipse cx="340.3" cy="130.1" rx="1.1" ry="1"/><ellipse cx="339.4" cy="128.7" rx="1.3" ry="1.1"/><ellipse cx="338.9" cy="127.2" rx="1.4" ry="1.2"/><ellipse cx="339.5" cy="124.8" rx="0.8" ry="0.5"/><ellipse cx="339.1" cy="123.3" rx="1" ry="0.9"/><ellipse cx="340.1" cy="121.5" rx="1.1" ry="1"/><ellipse cx="340.7" cy="120.5" rx="1.2" ry="1.1"/></g>
<g fill="#fff" stroke="#1e1e1e" stroke-width="0.62"><ellipse cx="338.3" cy="131.2" rx="0.9" ry="0.9"/><ellipse cx="338.5" cy="133.9" rx="0.9" ry="0.8"/><ellipse cx="338" cy="135.7" rx="0.6" ry="0.4"/><ellipse cx="337.6" cy="139.4" rx="1.2" ry="1"/><ellipse cx="337.2" cy="141.8" rx="0.9" ry="0.8"/><ellipse cx="337.4" cy="144.1" rx="1.1" ry="0.8"/><ellipse cx="337.7" cy="147.5" rx="1.2" ry="1.1"/><ellipse cx="338.3" cy="149.4" rx="0.7" ry="0.6"/><ellipse cx="338.2" cy="153" rx="0.7" ry="0.6"/><ellipse cx="339.5" cy="154.8" rx="0.8" ry="0.7"/><ellipse cx="339.8" cy="157.3" rx="0.9" ry="0.7"/><ellipse cx="340.4" cy="159.1" rx="1.4" ry="0.9"/><ellipse cx="341.2" cy="160.1" rx="1" ry="1"/><ellipse cx="343.5" cy="161.6" rx="1" ry="0.7"/><ellipse cx="344.5" cy="163.2" rx="0.7" ry="0.5"/><ellipse cx="346.6" cy="163.4" rx="0.9" ry="0.8"/><ellipse cx="348" cy="162.5" rx="0.7" ry="0.6"/><ellipse cx="350" cy="162" rx="0.9" ry="0.7"/><ellipse cx="351.9" cy="161.4" rx="1" ry="0.8"/><ellipse cx="354.1" cy="159.5" rx="0.9" ry="0.8"/><ellipse cx="355.4" cy="159.1" rx="1.1" ry="1"/><ellipse cx="357.5" cy="158.5" rx="1.3" ry="0.8"/><ellipse cx="358.6" cy="157.7" rx="0.9" ry="0.8"/><ellipse cx="360.6" cy="156.3" rx="0.7" ry="0.4"/></g>
<g fill="#fff" stroke="#1e1e1e" stroke-width="0.62"><ellipse cx="364.6" cy="134.6" rx="0.9" ry="0.7"/><ellipse cx="365.8" cy="135.1" rx="1.2" ry="0.9"/><ellipse cx="368.1" cy="135.9" rx="1.4" ry="1.2"/><ellipse cx="370.3" cy="136.3" rx="0.9" ry="0.8"/><ellipse cx="371.1" cy="136.4" rx="0.8" ry="0.8"/><ellipse cx="373.1" cy="136" rx="1.2" ry="1"/><ellipse cx="374.7" cy="136.8" rx="1.3" ry="0.9"/><ellipse cx="376.4" cy="136.2" rx="0.8" ry="0.6"/><ellipse cx="379.3" cy="136.1" rx="1.4" ry="1"/><ellipse cx="380.3" cy="136.4" rx="1.4" ry="1.1"/><ellipse cx="382.2" cy="136.6" rx="0.7" ry="0.5"/><ellipse cx="384.1" cy="136.4" rx="1.4" ry="1.3"/><ellipse cx="386.6" cy="137.1" rx="1" ry="0.9"/><ellipse cx="387.5" cy="137.6" rx="0.9" ry="0.7"/><ellipse cx="389.8" cy="138.1" rx="1" ry="0.7"/><ellipse cx="391.7" cy="138.5" rx="0.9" ry="0.6"/><ellipse cx="392.4" cy="139.6" rx="1.1" ry="0.7"/><ellipse cx="394.2" cy="140" rx="1.3" ry="1.2"/><ellipse cx="395.1" cy="140.6" rx="0.8" ry="0.7"/><ellipse cx="396.7" cy="142.1" rx="1.2" ry="1.1"/><ellipse cx="397.2" cy="143.6" rx="0.7" ry="0.7"/><ellipse cx="398.5" cy="145.1" rx="1.1" ry="0.8"/><ellipse cx="399.4" cy="146.4" rx="1.4" ry="1"/></g>
<g fill="#fff" stroke="#1e1e1e" stroke-width="0.62"><ellipse cx="360.1" cy="140.8" rx="1.2" ry="1.2"/><ellipse cx="360" cy="143.2" rx="1" ry="1"/><ellipse cx="359.5" cy="144.4" rx="0.7" ry="0.5"/><ellipse cx="360.1" cy="146.9" rx="1" ry="0.8"/><ellipse cx="360.2" cy="147.8" rx="0.9" ry="0.9"/><ellipse cx="361.2" cy="149.1" rx="1.2" ry="1.1"/><ellipse cx="361.8" cy="151.3" rx="1.2" ry="1.2"/><ellipse cx="363.4" cy="152.1" rx="1.2" ry="1.1"/><ellipse cx="364.7" cy="153.1" rx="0.7" ry="0.6"/><ellipse cx="365.6" cy="153.6" rx="0.8" ry="0.8"/><ellipse cx="367.8" cy="153.4" rx="0.8" ry="0.5"/><ellipse cx="370.9" cy="154.1" rx="1.1" ry="0.8"/><ellipse cx="372.1" cy="154" rx="1.2" ry="0.8"/><ellipse cx="375.1" cy="152.9" rx="0.6" ry="0.4"/><ellipse cx="377.1" cy="153.1" rx="0.6" ry="0.6"/><ellipse cx="379.8" cy="152" rx="0.6" ry="0.4"/><ellipse cx="381.4" cy="151.6" rx="1.1" ry="0.9"/><ellipse cx="384.1" cy="150.7" rx="0.8" ry="0.7"/><ellipse cx="385.9" cy="149.9" rx="1.2" ry="1.1"/><ellipse cx="388" cy="149.8" rx="0.6" ry="0.4"/><ellipse cx="390.6" cy="149.4" rx="1.1" ry="0.8"/><ellipse cx="392.7" cy="148.4" rx="1" ry="1"/><ellipse cx="395" cy="148.8" rx="1.4" ry="1"/><ellipse cx="395.8" cy="147.9" rx="1.4" ry="0.9"/></g>
<path d="M351.2 146.6h.5M354.8 143.1h.5M349.6 139.1h.5M350.5 140.5h.5M347.6 147.4h.5M352.1 142.9h.5M347.6 146.9h.5M347.6 140.2h.5M352.7 146.9h.5M355 147.1h.5M355 145.8h.5M348.5 141.6h.5M347.1 145.8h.5M349.8 149.9h.5M356.2 143.1h.5M346.3 137.8h.5M347 148h.5M351.5 148.7h.5M346.6 137.9h.5M352.8 143.9h.5M347.8 140h.5M355.1 142h.5M356.3 149h.5M347.8 145.1h.5M356.5 148.1h.5" stroke="#888" stroke-width="0.5" fill="none"/>
<g fill="#fff" stroke="#1e1e1e" stroke-width="0.62"><ellipse cx="347.6" cy="136.8" rx="0.9" ry="0.7"/><ellipse cx="349.5" cy="136.2" rx="0.6" ry="0.6"/><ellipse cx="351.4" cy="135.6" rx="0.9" ry="0.6"/><ellipse cx="352.7" cy="135.7" rx="1.2" ry="1"/><ellipse cx="354.5" cy="136.7" rx="0.6" ry="0.5"/><ellipse cx="356.4" cy="137.5" rx="1" ry="0.6"/><ellipse cx="357" cy="138.6" rx="1.1" ry="0.8"/><ellipse cx="358.6" cy="139.5" rx="1" ry="0.9"/><ellipse cx="359" cy="141.4" rx="1" ry="1"/><ellipse cx="358.4" cy="143.2" rx="1" ry="1"/><ellipse cx="358.3" cy="145.6" rx="0.7" ry="0.7"/><ellipse cx="357.9" cy="146.7" rx="1" ry="0.6"/><ellipse cx="357" cy="148.2" rx="1.2" ry="0.8"/><ellipse cx="356" cy="149.4" rx="0.7" ry="0.6"/><ellipse cx="354.1" cy="151" rx="1.2" ry="0.9"/><ellipse cx="351.7" cy="151.4" rx="0.7" ry="0.4"/><ellipse cx="350.5" cy="151.2" rx="1.2" ry="1.1"/><ellipse cx="348.7" cy="151.1" rx="0.7" ry="0.6"/><ellipse cx="347.5" cy="150.3" rx="1.2" ry="1.1"/><ellipse cx="346.2" cy="149.1" rx="0.9" ry="0.8"/><ellipse cx="345.4" cy="146.6" rx="1" ry="0.6"/><ellipse cx="344.5" cy="144.8" rx="0.9" ry="0.6"/><ellipse cx="344.3" cy="143.5" rx="1.1" ry="1"/><ellipse cx="344.5" cy="141.4" rx="0.9" ry="0.6"/><ellipse cx="344.9" cy="140" rx="0.8" ry="0.7"/><ellipse cx="345.5" cy="138.2" rx="0.8" ry="0.7"/></g>
<g fill="#fff" stroke="#1e1e1e" stroke-width="0.62"><ellipse cx="344.6" cy="155.1" rx="1" ry="0.7"/><ellipse cx="346.6" cy="154.8" rx="1" ry="1"/><ellipse cx="348" cy="154" rx="1" ry="0.6"/><ellipse cx="350" cy="154.3" rx="0.9" ry="0.7"/><ellipse cx="351.5" cy="154.5" rx="0.7" ry="0.7"/><ellipse cx="353.4" cy="154.9" rx="0.9" ry="0.9"/><ellipse cx="354.2" cy="155" rx="0.9" ry="0.9"/><ellipse cx="356.5" cy="154.7" rx="0.8" ry="0.7"/></g>
<g fill="#fff" stroke="#1e1e1e" stroke-width="0.62"><ellipse cx="353.7" cy="134.4" rx="0.8" ry="0.5"/><ellipse cx="355.2" cy="134.9" rx="0.7" ry="0.5"/><ellipse cx="357.3" cy="136.1" rx="1.1" ry="1"/><ellipse cx="359.1" cy="135.7" rx="1" ry="0.7"/><ellipse cx="359.9" cy="134.3" rx="0.6" ry="0.4"/><ellipse cx="361.7" cy="133.9" rx="1" ry="1"/><ellipse cx="363" cy="133.3" rx="1" ry="0.8"/><ellipse cx="364.1" cy="131.6" rx="0.5" ry="0.5"/></g>
<path d="M375 145h.5M381.4 147.4h.5M364.2 138.3h.5M371.9 152.7h.5M361.3 139.3h.5M367.6 143h.5M387.4 148.2h.5M389.7 149.5h.5M370.4 139.2h.5M361.8 148.2h.5M368.9 139.3h.5M398.2 147.2h.5M383.7 147.5h.5M384 148.3h.5M374.8 136.8h.5M365.1 144.1h.5M398.4 148.1h.5M371.4 149.8h.5M367.6 135.9h.5M372.5 142.4h.5M387.5 143.1h.5M397 141h.5M392.9 138.6h.5M386.8 139.6h.5M361.1 137.8h.5M386.3 146.1h.5M386.4 137.6h.5M366.3 135.9h.5M398.9 141.8h.5M386.1 145.7h.5M369.4 135.2h.5M361.3 151.6h.5M365.8 153.9h.5M374.9 148.9h.5M366.1 150.2h.5M370.5 141.5h.5M370.4 150.4h.5M371.8 141.8h.5M390.4 138.5h.5M368.3 138.4h.5M375.7 141.5h.5M385.6 143.7h.5M377.8 136.3h.5M378.6 148.6h.5M364.4 136.3h.5M379.4 137.5h.5M369.7 143h.5M365.3 135.3h.5M374.8 143.6h.5M397.1 145.4h.5M363.5 138.5h.5M389.6 145.6h.5M397.4 144.8h.5M370 137.4h.5M394.3 138.3h.5M364 139.4h.5M396.6 143.4h.5M378.3 140.5h.5M368.7 147.6h.5M374.8 136.3h.5M399 143.9h.5M386.1 144.6h.5M361.7 143.6h.5M389.5 145h.5M369.8 144.2h.5M384.2 147.4h.5M366.4 150.6h.5M397.5 149.2h.5M394 141.5h.5M369.5 146.3h.5M377.8 136.8h.5M368.2 149.4h.5M376.3 148h.5M361.2 153.6h.5M369.8 143.8h.5M384.9 138.4h.5M393.1 138.1h.5M399.6 143.3h.5M373.2 142.3h.5M374.1 147.8h.5M361.6 141.6h.5M367 151.1h.5M360.7 146.5h.5M370.7 143.3h.5M382.6 148.7h.5M366.1 138.9h.5M365.4 153.8h.5M366.5 136.7h.5M381 145.9h.5M369.8 137.3h.5" stroke="#999" stroke-width="0.5" fill="none"/>
<circle cx="373.9" cy="143.8" r="5.4" fill="#fff" stroke="#222" stroke-width="0.7"/>
<circle cx="373.9" cy="143.8" r="3.8" fill="#fff" stroke="#333" stroke-width="0.5"/>
<text x="373.9" y="145.1" font-size="3.4" text-anchor="middle" fill="#222">25</text>
<path d="M367.7 157.4 L401.1 149.3" fill="none" stroke="#222" stroke-width="0.7"/>
<path d="M369.2 161.9 L403.4 153.8" fill="none" stroke="#222" stroke-width="0.7"/>
<path d="M368.4 159.6 L402.2 151.5" fill="none" stroke="#444" stroke-width="0.5"/>
<g fill="#fff" stroke="#1e1e1e" stroke-width="0.62"><ellipse cx="370.5" cy="157.9" rx="0.9" ry="0.8"/><ellipse cx="372.2" cy="157.8" rx="0.9" ry="0.6"/><ellipse cx="373.7" cy="156.9" rx="1.1" ry="1"/><ellipse cx="375.3" cy="156.6" rx="0.5" ry="0.4"/><ellipse cx="377.7" cy="156.2" rx="1.1" ry="0.9"/><ellipse cx="379.6" cy="155.8" rx="1" ry="0.8"/><ellipse cx="381.2" cy="155.4" rx="0.6" ry="0.5"/><ellipse cx="383.5" cy="155.1" rx="1" ry="0.7"/><ellipse cx="385.2" cy="154.4" rx="0.5" ry="0.4"/><ellipse cx="386.6" cy="153.8" rx="0.9" ry="0.7"/><ellipse cx="388.7" cy="153.3" rx="0.8" ry="0.7"/><ellipse cx="390.5" cy="153.2" rx="0.9" ry="0.8"/><ellipse cx="392.4" cy="152.7" rx="0.5" ry="0.4"/><ellipse cx="394.2" cy="152.4" rx="0.9" ry="0.8"/><ellipse cx="396.1" cy="152" rx="0.6" ry="0.4"/><ellipse cx="398.1" cy="151.5" rx="0.7" ry="0.5"/><ellipse cx="399.3" cy="151" rx="1" ry="0.9"/><ellipse cx="400.4" cy="150.5" rx="0.6" ry="0.4"/></g>
<g fill="#fff" stroke="#1e1e1e" stroke-width="0.62"><ellipse cx="370.9" cy="160.2" rx="0.5" ry="0.4"/><ellipse cx="372.6" cy="160.2" rx="0.5" ry="0.4"/><ellipse cx="374.4" cy="159.5" rx="0.7" ry="0.5"/><ellipse cx="375.8" cy="159.2" rx="0.8" ry="0.5"/><ellipse cx="378.3" cy="158.8" rx="0.7" ry="0.7"/><ellipse cx="380.1" cy="158.3" rx="0.9" ry="0.9"/><ellipse cx="382.1" cy="157.6" rx="0.6" ry="0.4"/><ellipse cx="383.9" cy="157.4" rx="1" ry="1"/><ellipse cx="385.4" cy="156.5" rx="0.9" ry="0.7"/><ellipse cx="387.2" cy="156.1" rx="0.9" ry="0.6"/><ellipse cx="389.4" cy="155.6" rx="0.6" ry="0.4"/><ellipse cx="391.4" cy="155.7" rx="0.6" ry="0.4"/><ellipse cx="393.5" cy="155.3" rx="0.6" ry="0.4"/><ellipse cx="395.3" cy="154.4" rx="0.7" ry="0.5"/><ellipse cx="397" cy="153.8" rx="0.8" ry="0.5"/><ellipse cx="398.6" cy="153.7" rx="0.6" ry="0.5"/><ellipse cx="400.6" cy="153.4" rx="0.6" ry="0.5"/><ellipse cx="401.6" cy="153.2" rx="0.8" ry="0.7"/></g>
<path d="M401.1 149.3 L403.4 153.8" fill="none" stroke="#222" stroke-width="0.7"/>
<g fill="#fff" stroke="#1e1e1e" stroke-width="0.62"><ellipse cx="377.2" cy="167.9" rx="0.6" ry="0.5"/><ellipse cx="379.5" cy="167.3" rx="1.2" ry="1.1"/><ellipse cx="382.5" cy="165.7" rx="0.7" ry="0.6"/><ellipse cx="385.5" cy="165" rx="1.2" ry="0.8"/><ellipse cx="387.9" cy="164.1" rx="1.1" ry="0.8"/><ellipse cx="390" cy="164.1" rx="1.1" ry="0.7"/><ellipse cx="393.3" cy="163.2" rx="0.8" ry="0.7"/><ellipse cx="396.5" cy="162.2" rx="0.6" ry="0.4"/><ellipse cx="399.2" cy="162.3" rx="1.1" ry="1.1"/><ellipse cx="401.2" cy="162.4" rx="0.8" ry="0.5"/><ellipse cx="403.1" cy="163" rx="0.7" ry="0.7"/><ellipse cx="405.8" cy="163.9" rx="1.2" ry="0.8"/><ellipse cx="407.2" cy="164.1" rx="0.9" ry="0.7"/><ellipse cx="407.8" cy="165.9" rx="0.7" ry="0.4"/><ellipse cx="410" cy="167.2" rx="1.3" ry="0.9"/><ellipse cx="410.5" cy="168.9" rx="0.7" ry="0.5"/><ellipse cx="411.3" cy="171" rx="1.2" ry="0.8"/><ellipse cx="411.7" cy="172.5" rx="0.7" ry="0.5"/><ellipse cx="411.8" cy="174.3" rx="1.1" ry="0.9"/><ellipse cx="412.6" cy="176.2" rx="1.2" ry="0.9"/><ellipse cx="412.4" cy="178.4" rx="1.3" ry="0.9"/><ellipse cx="411.2" cy="180" rx="1" ry="0.6"/><ellipse cx="410.6" cy="181.7" rx="1.4" ry="1.1"/><ellipse cx="409" cy="183.3" rx="1.1" ry="1"/></g>
<g fill="#fff" stroke="#1e1e1e" stroke-width="0.62"><ellipse cx="363.2" cy="167.8" rx="1.2" ry="0.9"/><ellipse cx="365.3" cy="168.7" rx="0.7" ry="0.5"/><ellipse cx="366" cy="169.8" rx="1.2" ry="0.8"/><ellipse cx="368.1" cy="171.7" rx="0.7" ry="0.5"/><ellipse cx="369.9" cy="172.2" rx="0.7" ry="0.5"/><ellipse cx="370.7" cy="174" rx="0.7" ry="0.5"/><ellipse cx="372.7" cy="175.1" rx="0.8" ry="0.8"/><ellipse cx="374.4" cy="175.9" rx="1" ry="0.7"/><ellipse cx="375.6" cy="177.1" rx="1" ry="0.6"/><ellipse cx="377.4" cy="177.2" rx="0.8" ry="0.7"/><ellipse cx="378.1" cy="178.2" rx="0.9" ry="0.7"/><ellipse cx="379.6" cy="179.6" rx="1.4" ry="1"/><ellipse cx="382" cy="179.6" rx="0.7" ry="0.5"/><ellipse cx="383.8" cy="180.6" rx="0.9" ry="0.8"/><ellipse cx="385.4" cy="180.5" rx="0.6" ry="0.6"/><ellipse cx="386.7" cy="180.6" rx="1.4" ry="1.3"/><ellipse cx="388.6" cy="179.7" rx="0.8" ry="0.6"/><ellipse cx="390.2" cy="179" rx="0.9" ry="0.9"/><ellipse cx="392.6" cy="179.3" rx="0.9" ry="0.8"/><ellipse cx="394.6" cy="178.5" rx="0.8" ry="0.8"/><ellipse cx="396.1" cy="177.7" rx="1.2" ry="0.8"/><ellipse cx="397.3" cy="176.8" rx="1.1" ry="0.7"/><ellipse cx="398.7" cy="175.9" rx="1" ry="0.8"/><ellipse cx="400.9" cy="175" rx="1.3" ry="0.8"/></g>
<path d="M407.5 179.6h.5M399 177.6h.5M394.8 173.4h.5M388 180.4h.5M402.4 182.2h.5M384 170.9h.5M402.9 168.5h.5M401.1 167.9h.5M392 172.2h.5M403.1 184h.5M387.1 177.2h.5M406.1 173.7h.5M406.3 179.3h.5M387.1 182.3h.5M395.6 165.9h.5M396.1 181.4h.5M393.9 174h.5M390.5 182.5h.5M398.6 168.1h.5M388.8 171.4h.5M408.2 178.5h.5M391.1 179h.5M391 165.6h.5M394 181.2h.5M402.7 171.3h.5M384.2 179.6h.5M403.1 168.3h.5M405.7 184.8h.5M391.1 171.8h.5M400.1 183.5h.5M383.6 170.1h.5M387.7 179.3h.5M383.1 175.3h.5M393.3 177.9h.5M409.5 175.6h.5M402.9 167.6h.5M406.6 175.4h.5M401.7 182.2h.5M388.8 183.4h.5M393.3 182.8h.5M406.3 184h.5M393.6 183.6h.5M395.2 166.7h.5M397.5 180.8h.5M390.8 176.5h.5M385.4 169.6h.5M390.7 174.6h.5M392.2 165.6h.5M400.3 179.6h.5M384.7 169.1h.5M393.8 167.4h.5M396.6 183h.5M383.6 176.2h.5M400.4 179.7h.5M400.2 178.8h.5M385.9 181.6h.5M407.7 173.1h.5M402.9 178.1h.5M381.6 173.5h.5M397.8 185h.5M387.9 180h.5M385 167.9h.5M382.2 172.4h.5M397.1 170.1h.5M382.3 168.3h.5M379.8 167.8h.5M387.3 174.4h.5M383 173.9h.5M391.3 184.4h.5M392.8 183.8h.5M392.3 167.9h.5M396.2 166.8h.5M399.8 184.3h.5M390.1 171.2h.5M390.8 171.2h.5M399.5 172h.5M404.6 179.2h.5M388.5 177.1h.5M406.9 172.2h.5M391.1 170h.5M395 177.8h.5M400.9 183.9h.5M381.7 171.5h.5M404.7 180.5h.5M396.2 178.1h.5M388.1 183.8h.5M394.9 172.3h.5M406.2 180.8h.5M392.6 174.3h.5M388.8 182.8h.5" stroke="#888" stroke-width="0.5" fill="none"/>
<circle cx="398.7" cy="178.1" r="1.8" fill="#fff" stroke="#555" stroke-width="0.45"/>
<circle cx="403.2" cy="174.5" r="1.6" fill="#fff" stroke="#555" stroke-width="0.45"/>
<circle cx="393.3" cy="172.7" r="1.4" fill="#fff" stroke="#555" stroke-width="0.45"/>
<circle cx="405.9" cy="179.9" r="1.4" fill="#fff" stroke="#555" stroke-width="0.45"/>
<circle cx="389.6" cy="176.3" r="1.3" fill="#fff" stroke="#555" stroke-width="0.45"/>
<g fill="#fff" stroke="#1e1e1e" stroke-width="0.62"><ellipse cx="384.1" cy="170.6" rx="0.8" ry="0.7"/><ellipse cx="385.4" cy="169.4" rx="0.9" ry="0.7"/><ellipse cx="387" cy="168.7" rx="1.1" ry="0.8"/><ellipse cx="389.3" cy="168.4" rx="0.8" ry="0.6"/><ellipse cx="391.5" cy="167.8" rx="0.8" ry="0.7"/><ellipse cx="393.1" cy="167.8" rx="0.6" ry="0.5"/><ellipse cx="395.3" cy="168.2" rx="0.6" ry="0.5"/><ellipse cx="397.7" cy="169.8" rx="1.1" ry="1"/><ellipse cx="399.5" cy="170.1" rx="0.9" ry="0.9"/><ellipse cx="400.1" cy="172.1" rx="0.9" ry="0.8"/></g>
<path d="M354.4 167.3 L355.2 167.9 L356.4 168.6 L357.7 169.6 L359.2 170.6 L360.5 171.6 L361.6 172.7 L362.6 173.8 L363.6 175.1 L364.5 176.4 L365.2 177.6 L365.8 178.8 L366.1 179.9 L366.2 181 L365.9 182 L365.5 182.9 L365 183.8 L364.6 184.5 L364.3 185" fill="none" stroke="#333" stroke-width="0.5700000000000001"/>
<path d="M357.1 166.4 L358 167 L359.2 167.7 L360.6 168.6 L362.1 169.6 L363.5 170.7 L364.7 171.8 L365.7 173 L366.6 174.3 L367.4 175.7 L368.1 177.1 L368.7 178.4 L369 179.6 L369.1 180.7 L368.9 181.8 L368.6 182.8 L368.2 183.7 L367.8 184.4 L367.6 185" fill="none" stroke="#505050" stroke-width="0.52"/>
<path d="M410.4 108.6 L423.1 108.6 L423.1 120.3 L410.4 120.3Z" fill="#fff" stroke="#222" stroke-width="1.1"/>
<path d="M411.7 109.8 L421.8 109.8 L421.8 119 L411.7 119Z" fill="none" stroke="#444" stroke-width="0.45"/>
<text x="416.8" y="115.7" font-size="3.6" text-anchor="middle" fill="#222">24</text>
<path d="M406.8 122.1 L410.4 120.7 L424 120.7 L431.2 123 L433.9 127.2 L433.9 138.4 L450 137.7" fill="none" stroke="#1a1a1a" stroke-width="1.0"/>
<path d="M409.5 106.2 L410.4 108.6" fill="none" stroke="#2a2a2a" stroke-width="0.6"/>
<path d="M424 106.2 L423.1 108.6" fill="none" stroke="#2a2a2a" stroke-width="0.6"/>
<path d="M435.7 122.1 L435.7 137.7" fill="none" stroke="#1a1a1a" stroke-width="0.95"/>
<path d="M435.7 122.1 L459 120.8" fill="none" stroke="#1a1a1a" stroke-width="1.2"/>
<path d="M412.2 132.1 L412.4 131.5 L412.7 130.7 L413 129.7 L413.5 128.7 L414 127.8 L414.6 127.2 L415.4 126.7 L416.3 126.2 L417.4 125.9 L418.5 125.7 L419.5 125.6 L420.4 125.7 L421.1 126 L421.8 126.3 L422.5 126.8 L423.1 127.4 L423.6 128.3 L424 129.3 L424.3 130.7 L424.6 132.5 L424.8 134.4 L424.9 136.4 L425 138.4 L424.9 140.2 L424.7 141.8 L424.3 143.4 L423.8 145 L423.4 146.5 L422.9 147.9 L422.5 149.2 L422.2 150.4 L421.9 151.5 L421.6 152.4 L421.4 153.4 L421.2 154.4 L421.3 155.5 L421.5 156.8 L421.8 158.1 L422.3 159.4 L422.9 160.8 L423.4 162.3 L424 163.7 L424.6 165.1 L425.2 166.5 L425.9 167.9 L426.6 169.4 L427.1 171 L427.6 172.7 L427.9 174.7 L428.1 177 L428.3 179.4 L428.4 181.7 L428.4 183.6 L428.5 185" fill="none" stroke="#333" stroke-width="0.67"/>
<path d="M412.2 132.1 L412.1 133.1 L411.9 134.7 L411.7 136.5 L411.5 138.4 L411.3 140.3 L411.3 142 L411.5 143.6 L411.7 145.2 L412.1 146.8 L412.4 148.3 L412.8 149.7 L413.1 151 L413.5 152.1 L413.9 153.1 L414.4 154 L414.7 154.8 L415 155.6 L414.9 156.4 L414.6 157.3 L414 158.1 L413.2 158.9 L412.4 159.8 L411.7 160.8 L411.3 161.9 L411.2 163.2 L411.2 164.6 L411.3 166.2 L411.5 167.8 L411.8 169.4 L412.2 170.9 L412.8 172.5 L413.6 174.1 L414.4 175.7 L415.3 177.2 L416.1 178.7 L416.8 179.9 L417.2 181.1 L417.6 182.1 L417.9 183 L418.2 183.8 L418.4 184.5 L418.6 185" fill="none" stroke="#333" stroke-width="0.62"/>
<path d="M414.9 133.9 L415.1 133.4 L415.4 132.7 L415.6 131.8 L416 131 L416.3 130.3 L416.8 129.7 L417.2 129.3 L417.8 129 L418.4 128.7 L419 128.6 L419.5 128.6 L420 128.6 L420.4 128.8 L420.8 129 L421.1 129.2 L421.4 129.7 L421.6 130.3 L421.8 131.1 L422 132.3 L422.1 133.7 L422.2 135.3 L422.3 136.9 L422.3 138.6 L422.2 140.2 L422 141.7 L421.6 143.3 L421.2 144.9 L420.8 146.4 L420.4 147.9 L420 149.2 L419.7 150.5 L419.4 151.8 L419.1 152.9 L418.9 154 L418.7 154.9 L418.6 155.5" fill="none" stroke="#5a5a5a" stroke-width="0.47"/>
<g fill="#fff" stroke="#1e1e1e" stroke-width="0.62"><ellipse cx="408.5" cy="124.5" rx="0.8" ry="0.7"/><ellipse cx="409.1" cy="125.3" rx="1" ry="0.6"/><ellipse cx="407.5" cy="128.1" rx="0.6" ry="0.5"/><ellipse cx="407.4" cy="129.7" rx="0.6" ry="0.5"/><ellipse cx="408.3" cy="132.1" rx="1" ry="1"/><ellipse cx="407.9" cy="134.6" rx="0.9" ry="0.6"/><ellipse cx="409" cy="137.8" rx="1.2" ry="0.8"/><ellipse cx="408.5" cy="140.1" rx="0.7" ry="0.6"/><ellipse cx="409.4" cy="143" rx="0.6" ry="0.4"/><ellipse cx="410" cy="144.8" rx="0.9" ry="0.7"/><ellipse cx="410.1" cy="146.2" rx="1.2" ry="0.9"/><ellipse cx="410.9" cy="149" rx="1.2" ry="1"/><ellipse cx="410.1" cy="150.3" rx="0.6" ry="0.6"/><ellipse cx="410.3" cy="152.5" rx="0.5" ry="0.4"/><ellipse cx="409" cy="153.4" rx="0.5" ry="0.5"/><ellipse cx="407.6" cy="154.9" rx="1" ry="0.9"/><ellipse cx="407.2" cy="157.5" rx="1.2" ry="0.9"/><ellipse cx="406.4" cy="159.8" rx="0.8" ry="0.7"/><ellipse cx="407.2" cy="162.2" rx="1.1" ry="1"/><ellipse cx="407.4" cy="163.7" rx="0.8" ry="0.6"/><ellipse cx="407.9" cy="166.2" rx="0.7" ry="0.5"/><ellipse cx="407.5" cy="168.8" rx="1.2" ry="1.1"/><ellipse cx="409" cy="170.2" rx="0.6" ry="0.6"/><ellipse cx="409.4" cy="172.5" rx="1" ry="0.6"/><ellipse cx="409.8" cy="173.4" rx="1.1" ry="0.7"/><ellipse cx="411" cy="175.7" rx="1.2" ry="0.8"/><ellipse cx="411.8" cy="176.8" rx="1.1" ry="0.9"/><ellipse cx="411.7" cy="179.4" rx="1.1" ry="0.8"/><ellipse cx="413" cy="181.8" rx="0.8" ry="0.8"/><ellipse cx="412.9" cy="183.4" rx="0.8" ry="0.8"/><ellipse cx="413.6" cy="184.9" rx="0.9" ry="0.9"/></g>
<path d="M428.5 124.8 L428.4 125.9 L428.2 127.5 L428 129.3 L427.8 131.3 L427.6 133.1 L427.6 134.8 L427.7 136.2 L427.9 137.6 L428.1 138.9 L428.4 140.2 L428.7 141.3 L429 142.4 L429.4 143.2 L429.9 143.8 L430.4 144.4 L430.9 145 L431.3 145.6 L431.6 146.5 L431.7 147.7 L431.7 149.1 L431.7 150.6 L431.6 152.1 L431.4 153.5 L431.2 154.6 L430.9 155.5 L430.5 156.3 L430.1 157 L429.7 157.5 L429.3 157.9 L429 158.3" fill="none" stroke="#333" stroke-width="0.5700000000000001"/>
<path d="M433.9 138.4 L431.2 149.2 L431.2 156.4 L434.8 165.5 L434.8 185" fill="none" stroke="#222" stroke-width="0.9"/>
<path d="M438.4 139.3 L436.6 149.2 L433.9 156.4" fill="none" stroke="#2a2a2a" stroke-width="0.5"/>
<path d="M445.7 140.2 L446.6 149.2 L450 154.6" fill="none" stroke="#2a2a2a" stroke-width="0.5"/>
<g fill="#fff" stroke="#1e1e1e" stroke-width="0.62"><ellipse cx="442.1" cy="169.8" rx="0.9" ry="0.6"/><ellipse cx="443.5" cy="168.8" rx="1" ry="0.8"/><ellipse cx="445.3" cy="167.4" rx="1.1" ry="0.8"/><ellipse cx="448.2" cy="166.3" rx="0.7" ry="0.6"/><ellipse cx="449.9" cy="167" rx="0.6" ry="0.4"/><ellipse cx="451.8" cy="166.7" rx="0.9" ry="0.8"/></g>
<g fill="#fff" stroke="#1e1e1e" stroke-width="0.62"><ellipse cx="440.7" cy="176.2" rx="0.8" ry="0.5"/><ellipse cx="440.9" cy="178.1" rx="1.1" ry="0.9"/><ellipse cx="442.6" cy="180.4" rx="0.8" ry="0.6"/><ellipse cx="444.5" cy="181" rx="1.1" ry="0.8"/><ellipse cx="447.1" cy="181.5" rx="1.2" ry="1.1"/><ellipse cx="449.4" cy="181.7" rx="1" ry="0.8"/><ellipse cx="451.9" cy="181.9" rx="0.6" ry="0.5"/></g>
<path d="M438.4 146.5 L438.7 146.8 L439.2 147.2 L439.7 147.7 L440.1 148.2 L440.5 148.7 L440.6 149.2 L440.5 149.8 L440.1 150.4 L439.7 151 L439.2 151.6 L438.7 152.1 L438.4 152.5" fill="none" stroke="#333" stroke-width="0.62"/>
<path d="M400 105.8 L400.5 105.4 L401.1 104.8 L401.8 104.1 L402.7 103.4 L403.7 102.7 L404.8 102.2 L406.1 101.7 L407.4 101.2 L408.9 100.7 L410.5 100.3 L412.4 100 L414.5 99.8 L417 99.6 L420.2 99.6 L423.5 99.6 L426.7 99.7 L429.4 99.7 L431.3 99.8" fill="none" stroke="#333" stroke-width="0.62"/>
<path d="M432.5 88.9 L431.3 99.8" fill="none" stroke="#2a2a2a" stroke-width="0.5"/>
<path d="M435.7 89.4 L434.9 101" fill="none" stroke="#2a2a2a" stroke-width="0.5"/>
<path d="M462.2 93.7 L459 120.2" fill="none" stroke="#1e1e1e" stroke-width="0.9"/>
<path d="M438.6 124.6 L439.7 124 L441 123.5 L442.6 123.1 L444.3 122.7 L446.2 122.4 L448.2 122.2 L450.3 122.2 L452.6 122.3 L455 122.6 L457.5 122.9 L460 123.1 L462.7 123.1 L465.3 123 L468.1 122.7 L470.9 122.3 L473.8 121.9 L476.7 121.7 L479.5 121.7 L482.3 122 L485.1 122.6 L488 123.4 L490.8 124.1 L493.6 124.7 L496.4 125.1 L499.3 125 L502.2 124.8 L505.1 124.4 L508 123.9 L510.7 123.5 L513.3 123.4 L515.7 123.4 L518 123.4 L520.3 123.5 L522.3 123.8 L524 124.1 L525.3 124.6 L526.2 125.2 L526.8 126 L527 127 L527 128 L526.8 128.9 L526.5 129.9 L525.9 130.7 L525 131.6 L524 132.4 L522.8 133.3 L521.8 134.2 L521 135.2 L520.4 136.3 L520.1 137.5 L519.8 138.8 L519.5 140 L519.1 141.1 L518.6 141.9 L517.8 142.5 L516.9 143 L515.9 143.3 L514.9 143.5 L513.8 143.4 L512.8 143.1 L511.8 142.5 L510.9 141.5 L509.9 140.3 L508.9 139 L507.6 137.9 L506 137.1 L504.1 136.6 L502 136.4 L499.6 136.3 L497 136.2 L494.3 136.1 L491.6 135.9 L488.6 135.6 L485.4 135.1 L482.1 134.7 L478.7 134.3 L475.4 133.8 L472.3 133.5 L469.3 133.2 L466.5 132.9 L463.7 132.7 L460.9 132.5 L458.2 132.3 L455.4 132.3 L452.5 132.4 L449.4 132.7 L446.3 133.1 L443.4 133.4 L441 133.6 L439 133.5 L437.8 133 L437 132.3 L436.7 131.4 L436.6 130.5 L436.6 129.5 L436.6 128.7 L436.6 127.9 L436.7 127.2 L436.8 126.5 L437.2 125.8 L437.7 125.2Z" fill="none" stroke="#333" stroke-width="0.67"/>
<path d="M441 126.3 L443.4 126.1 L446.8 125.9 L450.8 125.7 L455 125.5 L459.1 125.3 L462.7 125.1 L465.7 124.8 L468.6 124.6 L471.4 124.3 L474.1 124.1 L476.8 124 L479.5 124.1 L482.3 124.5 L485.1 125.1 L488 125.8 L490.8 126.5 L493.6 127.1 L496.4 127.5 L499.3 127.5 L502.3 127.3 L505.3 126.9 L508.2 126.5 L510.9 126.2 L513.3 126 L515.4 126 L517.4 126 L519.2 126.1 L520.7 126.3 L522 126.6 L522.9 127 L523.4 127.5 L523.4 128.2 L523.2 129.1 L522.8 129.9 L522.2 130.9 L521.7 131.8 L521 132.9 L520.2 134.1 L519.2 135.4 L518.3 136.6 L517.4 137.6 L516.9 138.3" fill="none" stroke="#6a6a6a" stroke-width="0.47"/>
<g fill="#fff" stroke="#222" stroke-width="0.62"><ellipse cx="465.4" cy="116.1" rx="1.2" ry="1.1"/><ellipse cx="467.7" cy="115.3" rx="1.4" ry="1.2"/><ellipse cx="469.1" cy="114.9" rx="1" ry="0.7"/><ellipse cx="471.3" cy="114.7" rx="1" ry="0.7"/><ellipse cx="473.6" cy="115.1" rx="1" ry="0.7"/><ellipse cx="475.4" cy="115.6" rx="1.3" ry="1.3"/><ellipse cx="477.9" cy="116" rx="0.7" ry="0.5"/><ellipse cx="480.1" cy="115.5" rx="1" ry="0.7"/><ellipse cx="482.7" cy="116.5" rx="0.7" ry="0.6"/><ellipse cx="484.5" cy="116.5" rx="1.4" ry="1.3"/><ellipse cx="485.9" cy="117.2" rx="1.1" ry="1"/><ellipse cx="487.8" cy="116.9" rx="0.9" ry="0.9"/><ellipse cx="490" cy="116.9" rx="0.8" ry="0.5"/><ellipse cx="491.3" cy="117.7" rx="1" ry="0.7"/><ellipse cx="493.7" cy="118.1" rx="1.3" ry="1.2"/><ellipse cx="495.6" cy="118.4" rx="1.4" ry="0.8"/><ellipse cx="497.2" cy="118.9" rx="0.6" ry="0.5"/><ellipse cx="498.3" cy="118.6" rx="1.1" ry="1"/><ellipse cx="501.5" cy="118.5" rx="1.1" ry="0.7"/></g>
<circle cx="441" cy="96.6" r="2.4" fill="#fff" stroke="#555" stroke-width="0.45"/>
<circle cx="441" cy="96.6" r="0.35" fill="#555"/>
<circle cx="447.7" cy="96.6" r="1.9" fill="#fff" stroke="#555" stroke-width="0.45"/>
<circle cx="447.7" cy="96.6" r="0.35" fill="#555"/>
<circle cx="466.3" cy="101.4" r="2.2" fill="#fff" stroke="#555" stroke-width="0.45"/>
<circle cx="466.3" cy="101.4" r="0.35" fill="#555"/>
<circle cx="475.2" cy="101" r="2.2" fill="#fff" stroke="#555" stroke-width="0.45"/>
<circle cx="475.2" cy="101" r="0.35" fill="#555"/>
<circle cx="478.3" cy="109.9" r="3.9" fill="#fff" stroke="#555" stroke-width="0.45"/>
<circle cx="478.3" cy="109.9" r="0.35" fill="#555"/>
<circle cx="486.7" cy="110.6" r="2.9" fill="#fff" stroke="#555" stroke-width="0.45"/>
<circle cx="486.7" cy="110.6" r="0.35" fill="#555"/>
<circle cx="522.4" cy="118.6" r="3.4" fill="#fff" stroke="#555" stroke-width="0.45"/>
<circle cx="522.4" cy="118.6" r="0.35" fill="#555"/>
<path d="M436.1 137.1 L472.3 136.6 L480.7 141.4 L490.4 141.4" fill="none" stroke="#2a2a2a" stroke-width="0.7"/>
<path d="M432.5 140.7 L428.9 143.1 L428.4 152.8 L432.5 156.4 L432.5 180" fill="none" stroke="#2a2a2a" stroke-width="0.8"/>
<path d="M436.1 139.5 L436.1 180" fill="none" stroke="#2a2a2a" stroke-width="0.8"/>
<path d="M439 139.5 L439 180" fill="none" stroke="#2a2a2a" stroke-width="0.5"/>
<path d="M459.6 165.8h.5M461.1 166.9h.5M465.3 154.2h.5M472.9 156h.5M468.4 148.3h.5M461.2 150.1h.5M462.8 161.9h.5M467.6 150.4h.5M468.9 159.4h.5M462.7 167.4h.5M460.9 150h.5M466.6 165.1h.5M459.3 158.3h.5M466.3 159.6h.5M463.6 159.2h.5M463.8 152.2h.5M469.4 152.3h.5M470.5 152.3h.5M458.2 157.7h.5M463.2 154.4h.5M469.5 151.8h.5M467.9 165.9h.5M464.3 158.3h.5M472.2 160.6h.5M458 154.3h.5M458.1 161.6h.5M463.8 153.8h.5M465.3 168.2h.5M460.7 150.3h.5M461.8 154.2h.5M463.9 150.5h.5M470.9 161.6h.5M459.3 161.1h.5M457.6 158.4h.5M462.3 149.1h.5M469.2 163.2h.5M465.2 150.6h.5M467.9 156.7h.5M467.8 148.8h.5M460.4 155.9h.5" stroke="#888" stroke-width="0.5" fill="none"/>
<g fill="#fff" stroke="#1e1e1e" stroke-width="0.62"><ellipse cx="456.6" cy="154.5" rx="0.7" ry="0.7"/><ellipse cx="457.5" cy="152.5" rx="0.8" ry="0.5"/><ellipse cx="459" cy="150.5" rx="0.8" ry="0.5"/><ellipse cx="460.2" cy="149.6" rx="0.6" ry="0.6"/><ellipse cx="461.4" cy="147.9" rx="0.6" ry="0.4"/><ellipse cx="463" cy="147.4" rx="1" ry="0.7"/><ellipse cx="465.1" cy="146.4" rx="1.2" ry="0.8"/><ellipse cx="466.3" cy="146.3" rx="0.9" ry="0.8"/><ellipse cx="468.9" cy="145.7" rx="1" ry="0.8"/><ellipse cx="470.1" cy="147.1" rx="1.1" ry="0.7"/><ellipse cx="471.8" cy="148.6" rx="1" ry="0.8"/><ellipse cx="472.7" cy="150.5" rx="0.8" ry="0.8"/><ellipse cx="472.6" cy="152.6" rx="0.9" ry="0.8"/><ellipse cx="473.6" cy="154.9" rx="1.2" ry="1.1"/><ellipse cx="473.1" cy="157.4" rx="1.1" ry="0.9"/><ellipse cx="472.7" cy="160" rx="0.5" ry="0.5"/><ellipse cx="472.3" cy="163.3" rx="1.3" ry="1.1"/><ellipse cx="471.7" cy="166" rx="1.2" ry="1"/><ellipse cx="470.6" cy="167.4" rx="1.2" ry="1"/><ellipse cx="469" cy="168.9" rx="0.9" ry="0.7"/><ellipse cx="467" cy="169.8" rx="1" ry="0.8"/><ellipse cx="465" cy="170.8" rx="0.9" ry="0.6"/><ellipse cx="462.7" cy="171" rx="0.9" ry="0.8"/><ellipse cx="461" cy="169.9" rx="1.1" ry="1.1"/><ellipse cx="459.5" cy="168.7" rx="0.9" ry="0.7"/><ellipse cx="458.8" cy="166.6" rx="1.1" ry="0.9"/><ellipse cx="457.5" cy="163.5" rx="0.7" ry="0.5"/><ellipse cx="457.4" cy="162.3" rx="0.8" ry="0.5"/><ellipse cx="457" cy="159.1" rx="0.7" ry="0.6"/></g>
<circle cx="438.6" cy="149.2" r="1.9" fill="#fff" stroke="#555" stroke-width="0.45"/>
<circle cx="438.6" cy="149.2" r="0.35" fill="#555"/>
<circle cx="465.1" cy="158.8" r="2.4" fill="#fff" stroke="#555" stroke-width="0.45"/>
<circle cx="465.1" cy="158.8" r="0.35" fill="#555"/>
<path d="M488 139.5 L512 139.5 L512 156.4 L488 156.4Z" fill="none" stroke="#2a2a2a" stroke-width="0.6"/>
<path d="M491.1 141.4 L509.6 141.4 L509.6 154.5 L491.1 154.5Z" fill="#fff" stroke="#222" stroke-width="1.0"/>
<path d="M492.8 143.1 L508 143.1 L508 152.8 L492.8 152.8Z" fill="none" stroke="#444" stroke-width="0.45"/>
<text x="500.4" y="149.3" font-size="3.6" text-anchor="middle" fill="#222">13</text>
<g fill="#fff" stroke="#1e1e1e" stroke-width="0.62"><ellipse cx="491" cy="157.4" rx="0.8" ry="0.5"/><ellipse cx="492.7" cy="158.4" rx="0.6" ry="0.5"/><ellipse cx="495" cy="158.5" rx="0.8" ry="0.6"/><ellipse cx="495.6" cy="158.6" rx="0.6" ry="0.5"/><ellipse cx="497.2" cy="158.3" rx="0.7" ry="0.6"/><ellipse cx="499.1" cy="159" rx="0.8" ry="0.8"/><ellipse cx="499.9" cy="158.6" rx="0.7" ry="0.7"/><ellipse cx="502" cy="158.6" rx="0.5" ry="0.5"/><ellipse cx="504.5" cy="158.9" rx="0.9" ry="0.9"/><ellipse cx="506.7" cy="158.6" rx="0.7" ry="0.5"/><ellipse cx="509.5" cy="157.9" rx="0.5" ry="0.4"/><ellipse cx="510.5" cy="157.2" rx="0.8" ry="0.6"/></g>
<path d="M472.3 136.6 L479.5 136.6 L481.9 139.5" fill="none" stroke="#2a2a2a" stroke-width="0.5"/>
<path d="M479.5 141.9 L478.3 166 L472.3 180" fill="none" stroke="#2a2a2a" stroke-width="0.5"/>
<path d="M483.1 141.9 L481.9 166 L476.6 180" fill="none" stroke="#666" stroke-width="0.4"/>
<path d="M535.5 113.5 L536.9 113.9 L538.7 114.4 L540.8 115 L543.4 115.7 L546.4 116.7 L550 117.8 L554.1 119.3 L558.8 121.1 L564 123 L569.5 125 L575.4 126.9 L581.3 128.7 L587.8 130.2 L594.9 131.8 L602.3 133.2 L609.5 134.6 L616.3 135.9 L622.3 137.1 L627.6 138.3 L632.5 139.5 L636.9 140.6 L640.8 141.7 L644 142.5 L646.4 143.1" fill="none" stroke="#333" stroke-width="0.5700000000000001"/>
<path d="M535.5 119 L536.9 119.4 L538.7 119.9 L540.8 120.4 L543.4 121.2 L546.4 122 L550 123.1 L554.1 124.5 L558.8 126.1 L564 128 L569.5 129.9 L575.4 131.7 L581.3 133.5 L587.8 135.2 L594.9 136.9 L602.3 138.6 L609.5 140.2 L616.3 141.7 L622.3 143.1 L627.6 144.5 L632.5 145.8 L636.9 147 L640.8 148.1 L644 149 L646.4 149.6" fill="none" stroke="#505050" stroke-width="0.52"/>
<path d="M535.5 124.6 L536.9 125 L538.8 125.5 L541 126.2 L543.6 126.9 L546.6 127.8 L550 128.7 L553.8 129.7 L558 130.7 L562.7 131.9 L567.7 133.1 L573.1 134.5 L578.9 135.9 L585.5 137.5 L593.1 139.3 L601 141.2 L608.8 143.2 L616.1 145 L622.3 146.7 L627.5 148.4 L632.1 150 L636.1 151.6 L639.6 153 L642.6 154.2 L645.2 155.2 L647.2 155.8 L648.7 156.2 L649.6 156.3 L650.3 156.3 L650.7 156.3 L651.2 156.4" fill="none" stroke="#333" stroke-width="0.5700000000000001"/>
<circle cx="582.5" cy="131.6" r="3.1" fill="#fff" stroke="#555" stroke-width="0.45"/>
<circle cx="582.5" cy="131.6" r="0.35" fill="#555"/>
<circle cx="591" cy="131.6" r="3.4" fill="#fff" stroke="#555" stroke-width="0.45"/>
<circle cx="591" cy="131.6" r="0.35" fill="#555"/>
<circle cx="649.3" cy="136.6" r="3.4" fill="#fff" stroke="#555" stroke-width="0.45"/>
<circle cx="649.3" cy="136.6" r="0.35" fill="#555"/>
<path d="M646.4 148 L656 149.2 L655.1 155.2 L645.9 154.5Z" fill="#bbb" stroke="#2a2a2a" stroke-width="0.8"/>
<path d="M648.3 149.6 L654.1 150.6 L653.6 153.5 L647.8 152.8Z" fill="none" stroke="#2a2a2a" stroke-width="0.5"/>
<path d="M653.6 156.4 L654.1 157.4 L654.7 158.7 L655.5 160.3 L656.2 162.1 L656.9 164.1 L657.2 166 L657.3 168.3 L657.1 170.9 L656.9 173.6 L656.5 176.2 L656.2 178.4 L656 180" fill="none" stroke="#333" stroke-width="0.5700000000000001"/>
<path d="M650.7 156.9 L651.1 157.8 L651.8 159.1 L652.5 160.6 L653.2 162.3 L653.7 164.1 L654.1 166 L654.2 168.2 L654.1 170.8 L653.8 173.6 L653.5 176.2 L653.3 178.4 L653.1 180" fill="none" stroke="#505050" stroke-width="0.52"/>
<path d="M661.3 147.2 L658 173.3" fill="none" stroke="#2a2a2a" stroke-width="0.5"/>
<path d="M556.5 148.8h.5M556.1 185.9h.5M553.7 181.9h.5M571.6 157.6h.5M570.8 162.8h.5M569.2 176.7h.5M553 150h.5M553.2 180.1h.5M570.2 173.5h.5M540.8 158.8h.5M552.4 168.9h.5M555.6 192.9h.5M548 190.7h.5M548.2 177.3h.5M556.4 150.1h.5M582.2 188.4h.5M549.8 186.7h.5M536.6 167.1h.5M547.2 179.2h.5M581 189.9h.5M566.9 167.4h.5M549.2 185.5h.5M538.8 171.1h.5M555.9 169.7h.5M564.4 162.6h.5M576.4 173.8h.5M564.6 172.7h.5M556.1 190.9h.5M555.2 164.9h.5M571 176.1h.5M550.7 152.4h.5M540.3 180.7h.5M565.9 164.5h.5M553.4 190.1h.5M554 168.9h.5M557.9 156.3h.5M573.9 181.2h.5M560.7 168.3h.5M547.5 187.4h.5M561.3 189.4h.5M556.3 184.6h.5M592.3 182h.5M574.8 172.9h.5M562.3 158h.5M543.9 180.2h.5M575.9 161.1h.5M572.8 155h.5M570.9 156.7h.5M564.6 163.8h.5M567.1 154.9h.5M562.9 178.8h.5M541.5 163.5h.5M574.9 175.3h.5M571.1 186.9h.5M568.4 159.2h.5M560.4 189.3h.5M568.1 185.5h.5M555.6 170.4h.5M573.4 153.5h.5M570.8 149.9h.5M578 161.5h.5M584.1 174h.5M560.3 189.3h.5M575.5 174.6h.5M588.5 165h.5M534.8 164.9h.5M571.6 154.2h.5M543.1 162.7h.5M588.9 191.3h.5M582.1 162.2h.5M590.2 188.4h.5M578.2 159.5h.5M567.2 178.6h.5M576.2 171.2h.5M581.5 170.8h.5M550.5 185.1h.5M584.3 160.5h.5M575.9 167.9h.5M547 159h.5M564.6 173.1h.5M579 191.6h.5M555.2 158.6h.5M554.6 184.5h.5M573.7 168.3h.5M565.5 155.9h.5M589.7 171.6h.5M564.4 187.2h.5M545.4 184h.5M555 188.5h.5M539 161.9h.5" stroke="#888" stroke-width="0.5" fill="none"/>
<g fill="#fff" stroke="#1e1e1e" stroke-width="0.62"><ellipse cx="535.1" cy="161.4" rx="1" ry="0.8"/><ellipse cx="535.9" cy="159.1" rx="0.7" ry="0.6"/><ellipse cx="537.4" cy="157.9" rx="0.7" ry="0.6"/><ellipse cx="538.1" cy="156.3" rx="1" ry="0.7"/><ellipse cx="540.8" cy="154.6" rx="1.2" ry="1.1"/><ellipse cx="543.3" cy="153.4" rx="0.9" ry="0.6"/><ellipse cx="544.4" cy="152.1" rx="0.6" ry="0.4"/><ellipse cx="546.6" cy="151.2" rx="0.7" ry="0.5"/><ellipse cx="548" cy="150.3" rx="0.7" ry="0.5"/><ellipse cx="549.5" cy="150" rx="0.9" ry="0.9"/><ellipse cx="551.9" cy="149.1" rx="0.6" ry="0.3"/><ellipse cx="553.3" cy="149" rx="1.1" ry="0.8"/><ellipse cx="554.8" cy="148.8" rx="1.1" ry="0.8"/><ellipse cx="556.9" cy="148.1" rx="1" ry="0.8"/><ellipse cx="558.7" cy="148.3" rx="0.6" ry="0.4"/><ellipse cx="560.6" cy="147.5" rx="0.9" ry="0.9"/><ellipse cx="561.7" cy="147.6" rx="1.2" ry="0.7"/><ellipse cx="563.7" cy="147.9" rx="0.7" ry="0.5"/><ellipse cx="566.1" cy="147.9" rx="0.8" ry="0.7"/><ellipse cx="567.5" cy="147.9" rx="1.1" ry="0.6"/><ellipse cx="569.4" cy="148.7" rx="0.8" ry="0.7"/><ellipse cx="571.3" cy="148.3" rx="1.3" ry="1.1"/><ellipse cx="573.8" cy="149.1" rx="0.8" ry="0.6"/><ellipse cx="575.3" cy="149.7" rx="0.6" ry="0.5"/><ellipse cx="577.8" cy="151.2" rx="0.9" ry="0.7"/><ellipse cx="579.7" cy="152.8" rx="0.7" ry="0.5"/><ellipse cx="582" cy="154" rx="1" ry="0.8"/><ellipse cx="583.9" cy="156.4" rx="0.7" ry="0.5"/><ellipse cx="586.1" cy="158.6" rx="0.8" ry="0.5"/><ellipse cx="587.6" cy="160.6" rx="1" ry="0.8"/><ellipse cx="588.8" cy="162.9" rx="0.6" ry="0.6"/><ellipse cx="590.7" cy="165.4" rx="0.7" ry="0.6"/><ellipse cx="591.8" cy="167.7" rx="0.6" ry="0.5"/><ellipse cx="592.4" cy="170.9" rx="0.8" ry="0.6"/><ellipse cx="593.5" cy="173.5" rx="1.1" ry="1"/><ellipse cx="594.4" cy="174.4" rx="0.6" ry="0.6"/><ellipse cx="594.8" cy="176.3" rx="0.6" ry="0.4"/><ellipse cx="594.8" cy="177.9" rx="0.8" ry="0.5"/><ellipse cx="594.8" cy="180.1" rx="0.9" ry="0.7"/><ellipse cx="594.8" cy="183" rx="0.9" ry="0.6"/><ellipse cx="595.1" cy="185" rx="1" ry="0.9"/><ellipse cx="593.2" cy="187.1" rx="0.7" ry="0.6"/><ellipse cx="591.9" cy="190.1" rx="1.2" ry="1.1"/><ellipse cx="590" cy="192.5" rx="0.7" ry="0.6"/><ellipse cx="588.7" cy="194.1" rx="1.2" ry="1"/><ellipse cx="585.1" cy="195.9" rx="0.8" ry="0.8"/><ellipse cx="584.3" cy="196.8" rx="0.8" ry="0.5"/><ellipse cx="582.1" cy="196.8" rx="1.2" ry="1.1"/><ellipse cx="580.7" cy="196.9" rx="0.6" ry="0.4"/><ellipse cx="578.7" cy="197.3" rx="0.6" ry="0.3"/><ellipse cx="576.8" cy="197.9" rx="0.6" ry="0.4"/><ellipse cx="575.1" cy="197.7" rx="1.1" ry="0.8"/><ellipse cx="572.7" cy="198.3" rx="1.1" ry="0.7"/><ellipse cx="571.2" cy="198.1" rx="1.2" ry="1.2"/><ellipse cx="568.9" cy="198.1" rx="0.6" ry="0.5"/><ellipse cx="567.3" cy="197.8" rx="1.1" ry="0.7"/><ellipse cx="565.5" cy="197.6" rx="0.9" ry="0.6"/><ellipse cx="564" cy="196.7" rx="0.7" ry="0.7"/><ellipse cx="561.6" cy="196.4" rx="0.9" ry="0.7"/><ellipse cx="560.3" cy="196.2" rx="0.9" ry="0.7"/><ellipse cx="557.8" cy="196.4" rx="1.2" ry="1.1"/><ellipse cx="556.7" cy="194.9" rx="1.3" ry="1.2"/><ellipse cx="554" cy="195.2" rx="1" ry="0.8"/><ellipse cx="552.7" cy="193.4" rx="1.1" ry="1.1"/><ellipse cx="550.7" cy="193.3" rx="0.7" ry="0.5"/><ellipse cx="549.8" cy="191.8" rx="0.9" ry="0.8"/><ellipse cx="548.1" cy="191.6" rx="0.6" ry="0.5"/><ellipse cx="546.4" cy="191" rx="0.6" ry="0.4"/><ellipse cx="545.4" cy="189.7" rx="0.8" ry="0.8"/><ellipse cx="544.3" cy="188.4" rx="1" ry="0.8"/><ellipse cx="543.8" cy="187.7" rx="0.7" ry="0.6"/><ellipse cx="542.2" cy="186.4" rx="1.3" ry="0.9"/><ellipse cx="541.6" cy="185.3" rx="1.1" ry="1"/><ellipse cx="539.2" cy="182.9" rx="1.2" ry="0.9"/><ellipse cx="537.7" cy="180.9" rx="0.8" ry="0.7"/><ellipse cx="536.6" cy="178.3" rx="1.1" ry="0.8"/><ellipse cx="534.9" cy="176.7" rx="0.9" ry="0.6"/><ellipse cx="534.5" cy="174.8" rx="0.7" ry="0.6"/><ellipse cx="533.9" cy="173.1" rx="0.8" ry="0.5"/><ellipse cx="532.5" cy="171.5" rx="0.8" ry="0.6"/><ellipse cx="533.4" cy="169.6" rx="0.5" ry="0.3"/><ellipse cx="532.7" cy="167.6" rx="1.2" ry="0.8"/><ellipse cx="533.7" cy="166.2" rx="0.6" ry="0.5"/><ellipse cx="533.7" cy="164.9" rx="0.7" ry="0.5"/></g>
<g fill="#fff" stroke="#1e1e1e" stroke-width="0.62"><ellipse cx="549.2" cy="178.8" rx="1.1" ry="1"/><ellipse cx="550.4" cy="181.4" rx="0.5" ry="0.4"/><ellipse cx="552.4" cy="182.9" rx="0.8" ry="0.7"/><ellipse cx="554.1" cy="185" rx="0.7" ry="0.6"/><ellipse cx="557" cy="187" rx="0.8" ry="0.7"/><ellipse cx="560.2" cy="188.2" rx="1.1" ry="0.8"/><ellipse cx="561.6" cy="188.3" rx="1.1" ry="0.8"/><ellipse cx="564.1" cy="189.3" rx="0.9" ry="0.8"/><ellipse cx="565.9" cy="189.6" rx="1.1" ry="0.8"/><ellipse cx="567.5" cy="189.6" rx="1" ry="0.8"/><ellipse cx="569.4" cy="190.5" rx="1" ry="1"/><ellipse cx="571.1" cy="190.5" rx="0.6" ry="0.4"/><ellipse cx="573.7" cy="190.5" rx="1.1" ry="1"/><ellipse cx="575.9" cy="190.8" rx="0.9" ry="0.6"/><ellipse cx="578.9" cy="188.9" rx="0.5" ry="0.4"/><ellipse cx="581.8" cy="188" rx="0.7" ry="0.7"/><ellipse cx="583.5" cy="186.4" rx="1" ry="0.7"/><ellipse cx="584.9" cy="185.6" rx="0.8" ry="0.6"/></g>
<path d="M564.7 168.8 L578.4 168.8 L578.4 179.7 L564.7 179.7Z" fill="#fff" stroke="#2a2a2a" stroke-width="0.9"/>
<path d="M567.6 171.4 L575.5 171.4 L575.5 177.2 L567.6 177.2Z" fill="none" stroke="#2a2a2a" stroke-width="0.4"/>
<path d="M560.4 179.7 L582 179.7 L580.2 186.9 L562.2 186.9Z" fill="none" stroke="#2a2a2a" stroke-width="0.4"/>
<circle cx="539.4" cy="172.5" r="3.6" fill="#fff" stroke="#555" stroke-width="0.45"/>
<circle cx="539.4" cy="172.5" r="0.35" fill="#555"/>
<circle cx="558.5" cy="161.6" r="2.5" fill="#fff" stroke="#555" stroke-width="0.45"/>
<circle cx="558.5" cy="161.6" r="0.35" fill="#555"/>
<circle cx="571.2" cy="159.8" r="2.5" fill="#fff" stroke="#555" stroke-width="0.45"/>
<circle cx="571.2" cy="159.8" r="0.35" fill="#555"/>
<circle cx="575.5" cy="151.9" r="3.3" fill="#fff" stroke="#555" stroke-width="0.45"/>
<circle cx="575.5" cy="151.9" r="0.35" fill="#555"/>
<path d="M591.8 162.7 L592.8 160.6 L594.2 158.6 L596 156.7 L598.1 155.1 L600.4 153.8 L603 152.9 L605.9 152.5 L609.4 152.5 L613 152.7 L616.8 153.3 L620.3 154 L623.6 154.7 L626.5 155.6 L629.3 156.7 L631.9 157.9 L634.4 159.3 L636.8 160.9 L639.1 162.7 L641.4 164.7 L643.6 167.1 L645.8 169.6 L647.7 172.2 L649.4 174.7 L650.7 177.2 L651.8 179.5 L652.7 181.9 L653.3 184.3 L653.6 186.6 L653.3 188.7 L652.5 190.5 L651 192.2 L648.9 193.7 L646.3 195 L643.4 196.1 L640.2 197 L637 197.8 L633.5 198.2 L629.5 198.5 L625.3 198.6 L621.2 198.5 L617.3 198.2 L613.8 197.8 L610.8 197.2 L608.1 196.4 L605.5 195.5 L603.3 194.4 L601.2 193.1 L599.4 191.6 L597.8 189.9 L596.5 187.9 L595.5 185.7 L594.6 183.4 L593.9 181 L593.2 178.6 L592.6 176 L591.9 173.3 L591.4 170.4 L591.2 167.7 L591.2 165Z" fill="none" stroke="#505050" stroke-width="0.52"/>
<path d="M612.2 179.2h.5M617.6 187.9h.5M632.5 192.9h.5M640.1 178.4h.5M615.5 166.1h.5M624.1 170.4h.5M621.4 171.5h.5M600.2 184h.5M638.1 178.9h.5M601 178.9h.5M642.3 181.4h.5M609.7 191.1h.5M639.5 190.2h.5M608.1 178.1h.5M615.2 167.4h.5M636 179.6h.5M612.7 176.8h.5M645 177.7h.5M644.2 177.7h.5M619.6 177.1h.5M634.1 193h.5M628.5 174.3h.5M629.1 176.4h.5M632.9 192.1h.5M595.4 168.4h.5M629.8 186.6h.5M607.6 170.7h.5M607 182.9h.5M623.3 179.2h.5M612.3 178.5h.5M646.4 185.8h.5M622.7 170.8h.5M613.4 186.7h.5M604.2 177.4h.5M636.6 191.7h.5M595.7 166.5h.5M621.4 191.7h.5M603.5 188.1h.5M616.2 177h.5M612.5 162.1h.5M601.9 167.7h.5M632.7 178.2h.5M601.3 186.6h.5M622.2 161.6h.5M639.2 187.3h.5M636.2 185.5h.5M629 187.8h.5M639.9 191.1h.5M611.7 182.1h.5M631.8 188.4h.5M625.4 166.7h.5M608.3 176.8h.5M632.5 181.7h.5M601.3 185.7h.5M636.2 167.8h.5M600 166.9h.5M636.5 173.9h.5M600.5 169.4h.5M599.6 181.5h.5M599.2 165.6h.5M630.7 189.3h.5M616.9 173.3h.5M596.4 169.1h.5M607.8 186.1h.5M633.4 186h.5M623.5 182.7h.5M601.6 170.8h.5M610.6 166.9h.5M612.3 166.9h.5M641.5 180.4h.5" stroke="#888" stroke-width="0.5" fill="none"/>
<g fill="#fff" stroke="#1e1e1e" stroke-width="0.62"><ellipse cx="595.5" cy="161.9" rx="0.9" ry="0.9"/><ellipse cx="597.2" cy="160" rx="0.9" ry="0.6"/><ellipse cx="598.5" cy="158.1" rx="0.7" ry="0.7"/><ellipse cx="601.1" cy="157.5" rx="0.7" ry="0.5"/><ellipse cx="604.1" cy="156.7" rx="0.8" ry="0.6"/><ellipse cx="607" cy="156.2" rx="0.6" ry="0.6"/><ellipse cx="608.4" cy="155.9" rx="1" ry="0.7"/><ellipse cx="610.4" cy="156.5" rx="0.9" ry="0.8"/><ellipse cx="612.4" cy="156.7" rx="1.2" ry="0.8"/><ellipse cx="614.6" cy="156.9" rx="1.2" ry="0.9"/><ellipse cx="615.8" cy="157.2" rx="1.3" ry="1.2"/><ellipse cx="618.7" cy="156.8" rx="0.8" ry="0.7"/><ellipse cx="620" cy="157.2" rx="0.9" ry="0.8"/><ellipse cx="621.3" cy="158.6" rx="1.1" ry="0.7"/><ellipse cx="623.3" cy="158.6" rx="0.8" ry="0.8"/><ellipse cx="625.1" cy="158.9" rx="1.2" ry="0.8"/><ellipse cx="626.5" cy="159.7" rx="0.6" ry="0.5"/><ellipse cx="627.9" cy="160.1" rx="1.2" ry="1"/><ellipse cx="630" cy="161" rx="0.7" ry="0.5"/><ellipse cx="630.6" cy="161.5" rx="0.8" ry="0.7"/><ellipse cx="632.9" cy="162.6" rx="0.9" ry="0.6"/><ellipse cx="633.2" cy="163.2" rx="0.6" ry="0.5"/><ellipse cx="634.6" cy="164.6" rx="1.2" ry="0.9"/><ellipse cx="636.3" cy="164.7" rx="0.9" ry="0.6"/><ellipse cx="637.7" cy="166.1" rx="1" ry="1"/><ellipse cx="638.6" cy="166.9" rx="1.1" ry="0.9"/><ellipse cx="639.7" cy="168.1" rx="1" ry="0.8"/><ellipse cx="641.6" cy="170.1" rx="0.6" ry="0.4"/><ellipse cx="642.1" cy="170.9" rx="0.9" ry="0.6"/><ellipse cx="643.5" cy="172.9" rx="1.1" ry="0.8"/><ellipse cx="644.7" cy="174.2" rx="1.1" ry="0.8"/><ellipse cx="645.2" cy="175.9" rx="0.9" ry="0.8"/><ellipse cx="646.6" cy="176.2" rx="0.9" ry="0.7"/><ellipse cx="648.1" cy="178.5" rx="0.7" ry="0.5"/><ellipse cx="649.1" cy="181.7" rx="1.2" ry="0.8"/><ellipse cx="649.7" cy="183.5" rx="0.7" ry="0.6"/><ellipse cx="650" cy="186" rx="0.8" ry="0.7"/><ellipse cx="649.2" cy="188.4" rx="1.2" ry="0.8"/><ellipse cx="647.7" cy="189.6" rx="1.2" ry="0.9"/><ellipse cx="646.2" cy="190.6" rx="1.1" ry="1"/><ellipse cx="644.3" cy="192.1" rx="0.9" ry="0.6"/><ellipse cx="640.8" cy="193" rx="1.1" ry="0.7"/><ellipse cx="639.8" cy="193.8" rx="0.7" ry="0.6"/><ellipse cx="638.2" cy="194" rx="0.9" ry="0.6"/><ellipse cx="636.4" cy="194.4" rx="0.9" ry="0.6"/><ellipse cx="634.2" cy="193.9" rx="0.8" ry="0.6"/><ellipse cx="632.4" cy="194.2" rx="1.1" ry="1"/><ellipse cx="630.4" cy="194.3" rx="0.6" ry="0.4"/><ellipse cx="627.8" cy="194.5" rx="0.7" ry="0.7"/><ellipse cx="625.1" cy="195.1" rx="1.2" ry="1.1"/><ellipse cx="622.7" cy="195.3" rx="0.9" ry="0.9"/><ellipse cx="620.5" cy="194.5" rx="0.5" ry="0.4"/><ellipse cx="618.9" cy="194" rx="0.8" ry="0.8"/><ellipse cx="615.8" cy="194.9" rx="0.8" ry="0.5"/><ellipse cx="614.1" cy="194" rx="0.7" ry="0.4"/><ellipse cx="612.6" cy="193.9" rx="0.7" ry="0.5"/><ellipse cx="611.4" cy="193.8" rx="0.8" ry="0.7"/><ellipse cx="610.4" cy="193.4" rx="0.8" ry="0.6"/><ellipse cx="607" cy="191.7" rx="0.9" ry="0.8"/><ellipse cx="604.4" cy="191.4" rx="1" ry="0.9"/><ellipse cx="603.1" cy="189.2" rx="0.6" ry="0.5"/><ellipse cx="600.9" cy="187.9" rx="1.1" ry="1"/><ellipse cx="599.8" cy="185.9" rx="0.7" ry="0.7"/><ellipse cx="598.8" cy="183.3" rx="0.7" ry="0.5"/><ellipse cx="597.2" cy="181.6" rx="0.6" ry="0.4"/><ellipse cx="596.4" cy="179.3" rx="1.1" ry="1.1"/><ellipse cx="595.8" cy="176.9" rx="0.6" ry="0.5"/><ellipse cx="595.1" cy="173.5" rx="1.2" ry="1.2"/><ellipse cx="595.5" cy="172.5" rx="0.8" ry="0.5"/><ellipse cx="595.2" cy="170" rx="0.9" ry="0.9"/><ellipse cx="594.8" cy="169" rx="1.1" ry="0.7"/><ellipse cx="593.8" cy="167.7" rx="1.2" ry="1.1"/><ellipse cx="594.6" cy="164.5" rx="0.8" ry="0.7"/></g>
<g fill="#fff" stroke="#1e1e1e" stroke-width="0.62"><ellipse cx="607.2" cy="168" rx="0.5" ry="0.5"/><ellipse cx="608.7" cy="169.6" rx="0.8" ry="0.6"/><ellipse cx="610.4" cy="171.3" rx="0.5" ry="0.5"/><ellipse cx="612.4" cy="173.8" rx="0.9" ry="0.9"/><ellipse cx="614.1" cy="174.5" rx="1.1" ry="1"/><ellipse cx="616.2" cy="174.8" rx="0.9" ry="0.7"/><ellipse cx="619.3" cy="173.5" rx="0.9" ry="0.5"/><ellipse cx="621" cy="172.5" rx="1.1" ry="0.7"/><ellipse cx="623.7" cy="172.1" rx="1.1" ry="0.7"/><ellipse cx="625.6" cy="172.5" rx="1.1" ry="0.7"/><ellipse cx="627.7" cy="172.8" rx="0.7" ry="0.6"/><ellipse cx="629.6" cy="174.3" rx="0.5" ry="0.5"/><ellipse cx="630.9" cy="175.9" rx="1" ry="0.9"/><ellipse cx="631.9" cy="177.7" rx="0.8" ry="0.6"/><ellipse cx="632.3" cy="180.1" rx="1" ry="0.8"/><ellipse cx="632.3" cy="181.2" rx="0.7" ry="0.6"/><ellipse cx="632.2" cy="182.9" rx="0.8" ry="0.7"/><ellipse cx="630.4" cy="184.1" rx="1.1" ry="0.8"/><ellipse cx="629.3" cy="185.8" rx="0.7" ry="0.4"/></g>
<g fill="#fff" stroke="#1e1e1e" stroke-width="0.62"><ellipse cx="605.7" cy="181.5" rx="1.1" ry="0.9"/><ellipse cx="607.8" cy="182.2" rx="0.9" ry="0.8"/><ellipse cx="609.7" cy="183.8" rx="0.6" ry="0.6"/><ellipse cx="611.6" cy="185.1" rx="0.6" ry="0.5"/><ellipse cx="613.4" cy="185" rx="1.1" ry="0.7"/><ellipse cx="616.5" cy="185.7" rx="0.9" ry="0.9"/><ellipse cx="618.8" cy="185.9" rx="0.8" ry="0.7"/><ellipse cx="621.2" cy="185.3" rx="0.9" ry="0.8"/><ellipse cx="622.6" cy="185.1" rx="0.8" ry="0.7"/></g>
<path d="M612.8 169.9 L621.1 171.4 L620 177.2 L611.7 175.7Z" fill="none" stroke="#2a2a2a" stroke-width="0.7"/>
<path d="M536.9 159.8 L536.9 158.8 L536.9 157.4 L536.9 155.8 L537.1 154 L537.6 152.3 L538.7 150.8 L540.2 149.3 L542.1 147.7 L544.4 146.2 L547 144.8 L549.9 143.7 L553.1 142.8 L556.8 142.3 L561.2 141.9 L565.8 141.8 L570.4 141.9 L574.7 142.2 L578.4 142.8 L581.5 144 L584 145.6 L586.3 147.6 L588.5 149.4 L590.6 151 L592.9 151.9 L595.2 151.9 L597.4 151.4 L599.7 150.5 L602 149.5 L604.5 148.6 L607.3 148.2 L610.6 148.2 L614.2 148.3 L618.1 148.6 L621.9 149.1 L625.6 149.8 L629 150.8 L632.1 152 L635 153.6 L637.8 155.3 L640.5 157.3 L642.9 159.4 L645.3 161.6 L647.5 164 L649.6 166.7 L651.6 169.5 L653.4 172.4 L654.9 175.2 L656.1 177.9 L657 180.6 L657.5 183.4 L657.7 186.1 L657.8 188.7 L657.8 190.8 L657.9 192.3" fill="none" stroke="#333" stroke-width="0.5700000000000001"/>
<path d="M554.9 201.4 L556.7 201.7 L559.1 202.2 L561.9 202.7 L565 203.3 L568.2 203.7 L571.2 203.9 L574.2 203.9 L577.6 203.8 L580.9 203.6 L584.1 203.2 L587 202.9 L589.3 202.5 L590.7 201.9 L591.5 201.2 L591.9 200.4 L592.3 199.7 L593.1 199.1 L594.7 198.8 L597.1 199 L600 199.4 L603.4 200 L607 200.6 L610.8 201.1 L614.6 201.4 L618.6 201.3 L622.9 201.2 L627.4 200.9 L631.9 200.5 L636.1 200.1 L639.9 199.6 L643.3 198.9 L646.6 198.1 L649.6 197.3 L652.2 196.4 L654.5 195.7 L656.1 195.2" fill="none" stroke="#333" stroke-width="0.5700000000000001"/>
<path d="M536.9 157.2 L536.2 158.5 L535.3 160.3 L534.2 162.4 L533 164.7 L531.7 166.9 L530.5 169 L529.4 170.9 L528.3 172.9 L527.1 174.8 L525.9 176.6 L524.6 178.3 L523.3 179.8 L521.9 181.1 L520.5 182.1 L519 183.1 L517.5 183.9 L515.9 184.6 L514.3 185.2 L512.6 185.8 L510.7 186.3 L508.9 186.6 L507 187 L505.2 187.3 L503.4 187.6 L501.8 187.9 L500.1 188.1 L498.5 188.3 L497 188.5 L495.6 188.9 L494.4 189.4 L493.2 190.1 L492.1 191 L491.1 192.1 L490.3 193.1 L489.7 194.2 L489.5 195.2 L489.7 196.2 L490.2 197.2 L491 198.2 L492 199.1 L493.1 200 L494.4 200.6 L495.9 201 L497.6 201.1 L499.6 201.1 L501.5 201.1 L503.5 201.2 L505.2 201.5 L506.9 202 L508.5 202.7 L510 203.4 L511.5 204.3 L512.9 205.1 L514.3 206 L515.7 207.1 L517.1 208.2 L518.5 209.5 L519.7 210.6 L520.7 211.6 L521.5 212.4" fill="none" stroke="#444" stroke-width="0.5700000000000001"/>
<g fill="#fff" stroke="#1e1e1e" stroke-width="0.62"><ellipse cx="538" cy="164.8" rx="0.9" ry="0.7"/><ellipse cx="536.8" cy="167.4" rx="0.9" ry="0.6"/><ellipse cx="536.1" cy="169" rx="0.6" ry="0.5"/><ellipse cx="534.4" cy="171.1" rx="1.1" ry="0.7"/><ellipse cx="533.8" cy="173.2" rx="1.3" ry="1"/><ellipse cx="531.4" cy="175.9" rx="0.9" ry="0.8"/><ellipse cx="530.3" cy="177.6" rx="0.8" ry="0.7"/><ellipse cx="529.1" cy="178.9" rx="1" ry="0.9"/><ellipse cx="528.1" cy="180.5" rx="1.3" ry="1.1"/><ellipse cx="526.3" cy="182.5" rx="1.4" ry="0.9"/><ellipse cx="524.5" cy="183.3" rx="0.6" ry="0.6"/><ellipse cx="522.3" cy="185.4" rx="1.1" ry="1.1"/><ellipse cx="519.8" cy="186" rx="1.1" ry="0.8"/><ellipse cx="518.7" cy="187.1" rx="0.8" ry="0.5"/><ellipse cx="515.9" cy="187.7" rx="0.8" ry="0.6"/><ellipse cx="514.3" cy="187.9" rx="1" ry="0.8"/><ellipse cx="512.3" cy="189.3" rx="0.9" ry="0.6"/><ellipse cx="509" cy="189.1" rx="1.1" ry="0.9"/><ellipse cx="507.1" cy="189.1" rx="1.1" ry="0.7"/><ellipse cx="504.8" cy="189.9" rx="1" ry="0.9"/><ellipse cx="503.2" cy="190.3" rx="1.3" ry="1.1"/><ellipse cx="501.5" cy="190.6" rx="0.8" ry="0.6"/><ellipse cx="499.7" cy="191" rx="1" ry="0.6"/><ellipse cx="497.2" cy="191.7" rx="0.7" ry="0.5"/><ellipse cx="495.6" cy="192.8" rx="1.2" ry="0.9"/><ellipse cx="495.1" cy="193.8" rx="1.2" ry="1.2"/><ellipse cx="494.8" cy="195.5" rx="0.8" ry="0.7"/><ellipse cx="494.9" cy="196.4" rx="0.9" ry="0.9"/><ellipse cx="497.3" cy="197.5" rx="0.9" ry="0.7"/><ellipse cx="498.5" cy="197.7" rx="0.8" ry="0.7"/><ellipse cx="500.5" cy="198.1" rx="1" ry="0.8"/><ellipse cx="502.4" cy="197.4" rx="0.7" ry="0.6"/><ellipse cx="504.2" cy="197.3" rx="1" ry="0.7"/><ellipse cx="506" cy="198.1" rx="0.8" ry="0.8"/><ellipse cx="508.4" cy="198.3" rx="1.2" ry="0.7"/><ellipse cx="509.3" cy="198.6" rx="0.6" ry="0.5"/><ellipse cx="511.7" cy="199.7" rx="1.3" ry="0.9"/><ellipse cx="513.8" cy="200.7" rx="1.4" ry="0.9"/><ellipse cx="515" cy="202.3" rx="1.4" ry="0.9"/><ellipse cx="516.7" cy="203.4" rx="1.1" ry="0.8"/><ellipse cx="518.3" cy="204.5" rx="0.7" ry="0.7"/><ellipse cx="520.5" cy="205.1" rx="1.1" ry="0.8"/><ellipse cx="522.3" cy="206" rx="0.7" ry="0.6"/><ellipse cx="522.9" cy="207.8" rx="0.9" ry="0.9"/></g>
<g fill="#fff" stroke="#1e1e1e" stroke-width="0.62"><ellipse cx="524" cy="206" rx="0.8" ry="0.7"/><ellipse cx="524.2" cy="204.1" rx="1" ry="0.6"/><ellipse cx="524.8" cy="201.5" rx="0.7" ry="0.6"/><ellipse cx="526.2" cy="199.8" rx="1" ry="0.8"/><ellipse cx="527" cy="197.3" rx="0.6" ry="0.5"/><ellipse cx="527.5" cy="196.7" rx="0.7" ry="0.5"/><ellipse cx="528.7" cy="195.2" rx="0.8" ry="0.5"/><ellipse cx="529.6" cy="193.5" rx="1.1" ry="0.8"/><ellipse cx="530.2" cy="191.7" rx="1.1" ry="0.8"/><ellipse cx="531.2" cy="190.6" rx="0.9" ry="0.8"/><ellipse cx="532.9" cy="189.9" rx="1" ry="0.7"/><ellipse cx="535.1" cy="189" rx="0.9" ry="0.8"/><ellipse cx="536.4" cy="188.5" rx="1.2" ry="1"/><ellipse cx="538" cy="187.7" rx="0.7" ry="0.7"/><ellipse cx="540.4" cy="188.6" rx="0.9" ry="0.5"/><ellipse cx="543.1" cy="189.5" rx="1.2" ry="1.1"/><ellipse cx="544.5" cy="190.1" rx="0.9" ry="0.7"/><ellipse cx="546.6" cy="190" rx="0.9" ry="0.8"/><ellipse cx="548.9" cy="191" rx="1" ry="0.7"/><ellipse cx="550.4" cy="192.6" rx="1" ry="0.7"/><ellipse cx="551.6" cy="193.5" rx="1.2" ry="1"/><ellipse cx="553.6" cy="193.7" rx="1" ry="1"/><ellipse cx="556.1" cy="194.4" rx="1.2" ry="0.8"/><ellipse cx="557.2" cy="195.8" rx="1.4" ry="1.1"/><ellipse cx="559.4" cy="195.8" rx="1" ry="0.9"/><ellipse cx="561.5" cy="196" rx="0.7" ry="0.4"/><ellipse cx="562.9" cy="197.4" rx="1.1" ry="1"/><ellipse cx="563.9" cy="196.9" rx="1.3" ry="0.9"/><ellipse cx="565.8" cy="198" rx="1.2" ry="1.1"/><ellipse cx="568" cy="198.8" rx="0.7" ry="0.7"/><ellipse cx="569.6" cy="198.3" rx="0.9" ry="0.9"/><ellipse cx="571.4" cy="198.6" rx="1.2" ry="1.1"/><ellipse cx="573.2" cy="198.7" rx="1" ry="0.9"/><ellipse cx="574.4" cy="198.9" rx="1.1" ry="1.1"/><ellipse cx="576.7" cy="198.2" rx="1" ry="1"/><ellipse cx="577.8" cy="199" rx="1.2" ry="0.8"/><ellipse cx="579.7" cy="198.7" rx="0.9" ry="0.7"/><ellipse cx="581.2" cy="197.6" rx="1.4" ry="0.9"/><ellipse cx="583.8" cy="197.4" rx="0.7" ry="0.5"/><ellipse cx="585.2" cy="197.8" rx="1" ry="0.9"/></g>
<path d="M526.9 211.4 L527 210.5 L527 209.3 L527 207.8 L527 206.2 L527.2 204.7 L527.5 203.3 L527.9 202.1 L528.4 200.9 L529 199.8 L529.6 198.7 L530.3 197.7 L531.1 196.6 L531.8 195.6 L532.6 194.5 L533.5 193.4 L534.4 192.4 L535.4 191.7 L536.5 191.2 L537.8 191.1 L539.3 191.2 L540.8 191.5 L542.4 192 L544 192.5 L545.5 193 L546.9 193.6 L548.1 194.3 L549.3 195 L550.7 195.8 L552.2 196.6 L554 197.4 L556.3 198.2 L558.9 199.1 L561.7 200.1 L564.7 200.9 L567.6 201.6 L570.3 202.1 L573.1 202.1 L576.1 202 L579 201.6 L581.7 201.2 L584 200.8 L585.7 200.6" fill="none" stroke="#444" stroke-width="0.5700000000000001"/>
<path d="M522.4 209.6 L522.7 211 L523 212.7 L523.5 214.9 L523.9 217.2 L524.2 219.7 L524.2 222.3 L524 225.2 L523.6 228.5 L523 231.9 L522.4 235.2 L521.9 238 L521.5 240" fill="none" stroke="#333" stroke-width="0.62"/>
<path d="M526.4 210.5 L526.7 211.8 L527.2 213.4 L527.7 215.3 L528.2 217.5 L528.6 219.9 L528.7 222.3 L528.5 225.1 L528.1 228.4 L527.5 231.9 L526.9 235.2 L526.4 238 L526 240" fill="none" stroke="#333" stroke-width="0.62"/>
<path d="M466.4 168.1 L467.6 169.4 L469.3 171.3 L471.2 173.6 L473.3 175.9 L475.4 178 L477.2 179.8 L478.9 181.2 L480.4 182.3 L482 183.3 L483.5 184.2 L484.9 185.2 L486.3 186.1 L487.7 187.3 L489.1 188.5 L490.4 189.7 L491.7 190.8 L492.7 191.8 L493.5 192.5" fill="none" stroke="#333" stroke-width="0.62"/>
<path d="M466.4 171.7 L467.5 172.9 L469 174.7 L470.8 176.7 L472.7 178.9 L474.6 180.9 L476.3 182.5 L477.9 183.9 L479.5 185 L481.1 186 L482.6 187 L484 187.9 L485.4 188.9 L486.6 189.9 L487.9 190.9 L489.1 192 L490.1 192.9 L491 193.7 L491.7 194.3" fill="none" stroke="#333" stroke-width="0.5700000000000001"/>
<path d="M514.3 191.4h.5M506.6 194.5h.5M526.6 186.9h.5M517.8 193.7h.5M519.7 196.2h.5M519.1 191.9h.5M523.5 200h.5M523.3 198.8h.5M505.4 197.2h.5M527.4 184.7h.5M507.8 194.4h.5M515.2 198.9h.5M499 193.3h.5M525.9 184.6h.5M526.2 187.8h.5M514.3 189.7h.5M526.1 187.6h.5M508.4 194.1h.5M504.4 196.6h.5M525.4 184h.5M518.5 189.5h.5M511.2 198.3h.5M519.5 195.8h.5M523 190.7h.5M514.3 199.4h.5M497.9 193.2h.5M525.4 191.3h.5M515.3 191.1h.5M523.6 200.1h.5M520.3 194.4h.5M504 191.3h.5M506.8 192h.5M518.6 189h.5M521.6 186.2h.5M500.2 195h.5M517.7 189.9h.5M501.1 194.7h.5M520.4 191.9h.5M511.6 196.2h.5M515.8 190.9h.5" stroke="#999" stroke-width="0.5" fill="none"/>
<path d="M516.1 194.3 L519.7 194.3" fill="none" stroke="#2a2a2a" stroke-width="0.5"/>
<path d="M517.9 192.5 L517.9 196.1" fill="none" stroke="#2a2a2a" stroke-width="0.5"/>
<path d="M516.6 193 L519.2 195.5" fill="none" stroke="#2a2a2a" stroke-width="0.5"/>
<path d="M519.2 193 L516.6 195.5" fill="none" stroke="#2a2a2a" stroke-width="0.5"/>
<circle cx="539.6" cy="172.6" r="3.3" fill="#fff" stroke="#555" stroke-width="0.45"/>
<circle cx="539.6" cy="172.6" r="0.35" fill="#555"/>
<circle cx="504.3" cy="191.2" r="1.4" fill="#fff" stroke="#555" stroke-width="0.45"/>
<circle cx="504.3" cy="191.2" r="0.35" fill="#555"/>
<circle cx="508.9" cy="191.9" r="1.3" fill="#fff" stroke="#555" stroke-width="0.45"/>
<circle cx="508.9" cy="191.9" r="0.35" fill="#555"/>
<path d="M414.9 179.8 L415.1 178.5 L415.5 176.7 L415.8 174.5 L416.2 172.2 L416.5 170 L416.7 168.1 L416.7 166.4 L416.7 164.8 L416.6 163.3 L416.5 161.9 L416.2 160.5 L415.8 159 L415.2 157.5 L414.4 156 L413.5 154.4 L412.6 153 L411.8 151.8 L411.3 150.9" fill="none" stroke="#333" stroke-width="0.62"/>
<path d="M428.4 150 L428.7 152 L429 154.7 L429.4 157.9 L429.8 161.4 L430.1 164.9 L430.2 168.1 L430.2 171.2 L430.1 174.3 L429.9 177.5 L429.6 180.6 L429.3 183.5 L429 186.1 L428.7 188.7 L428.5 191.1 L428.3 193.3 L428 195.4 L427.4 197.1 L426.6 198.4 L425.6 199.3 L424.2 199.7 L422.8 199.8 L421.1 199.7 L419.4 199.6 L417.6 199.7 L415.6 199.8 L413.3 199.9 L411 200 L408.7 200.1 L406.6 200.3 L404.9 200.6 L403.7 201 L402.7 201.5 L402 202.1 L401.4 202.7 L400.9 203.4 L400.4 204.2 L400.1 205.2 L399.8 206.4 L399.7 207.6 L399.6 208.8 L399.6 209.8 L399.5 210.5" fill="none" stroke="#333" stroke-width="0.67"/>
<path d="M426.3 151.8 L426.5 153.6 L426.8 156 L427.2 158.9 L427.5 162 L427.8 165.1 L427.9 168.1 L427.9 171 L427.7 174 L427.5 177 L427.2 180 L426.9 182.7 L426.6 185.2 L426.4 187.5 L426.2 189.7 L426 191.7 L425.6 193.4 L425.2 194.9 L424.5 196.1 L423.5 196.9 L422.5 197.2 L421.2 197.3 L419.9 197.3 L418.3 197.3 L416.7 197.4 L414.8 197.5 L412.6 197.6 L410.3 197.7 L407.9 197.8 L405.8 198 L404 198.4 L402.6 199.1 L401.3 200 L400.3 200.9 L399.4 201.9 L398.6 202.7 L398.1 203.3" fill="none" stroke="#505050" stroke-width="0.52"/>
<path d="M358.9 173.5 L358.5 174.4 L358.1 175.7 L357.5 177.3 L357 179 L356.5 180.8 L356.1 182.5 L355.9 184.4 L355.8 186.6 L355.7 188.9 L355.7 191 L355.6 192.8 L355.6 194.1" fill="none" stroke="#333" stroke-width="0.62"/>
<path d="M361.2 175.3 L360.9 176.1 L360.4 177.3 L359.9 178.6 L359.3 180.2 L358.9 181.8 L358.5 183.4 L358.2 185.2 L358 187.2 L357.9 189.3 L357.8 191.4 L357.8 193.4 L358 195.2 L358.3 196.8 L358.7 198.2 L359.3 199.6 L359.9 200.9 L360.6 202.1 L361.2 203.3 L361.9 204.5 L362.6 205.8 L363.4 207 L364.1 208.1 L364.7 209 L365.2 209.6" fill="none" stroke="#505050" stroke-width="0.52"/>
<path d="M363.4 173.1 L364.2 174.2 L365.4 175.6 L366.8 177.3 L368.4 179 L370 180.7 L371.5 182.2 L373 183.4 L374.5 184.6 L376.1 185.7 L377.7 186.7 L379.5 187.6 L381.4 188.3 L383.6 188.9 L386 189.4 L388.5 189.8 L391 190 L393.5 190.1 L395.9 190.1 L398.2 190 L400.6 189.7 L402.9 189.3 L405.1 188.7 L407.2 188 L408.9 187.2 L410.4 186.2 L411.7 184.8 L412.8 183.3 L413.7 181.9 L414.5 180.7 L415.1 179.8" fill="none" stroke="#444" stroke-width="0.5700000000000001"/>
<path d="M361.9 175.3 L362.9 176.4 L364.1 177.9 L365.6 179.6 L367.3 181.5 L369 183.2 L370.6 184.7 L372.2 186 L373.8 187.2 L375.4 188.2 L377.2 189.2 L379 190.1 L381.1 190.8 L383.4 191.5 L385.8 192 L388.5 192.3 L391.1 192.6 L393.7 192.7 L396.3 192.7 L398.8 192.5 L401.3 192.1 L403.8 191.7 L406.2 191 L408.4 190.3 L410.4 189.4 L412 188.2 L413.4 186.7 L414.7 185 L415.7 183.4 L416.6 182 L417.2 181.1" fill="none" stroke="#6a6a6a" stroke-width="0.47"/>
<g fill="#fff" stroke="#1e1e1e" stroke-width="0.62"><ellipse cx="402.4" cy="203" rx="0.7" ry="0.7"/><ellipse cx="404.1" cy="201.9" rx="1.4" ry="1"/><ellipse cx="406.3" cy="201.3" rx="1.1" ry="1"/><ellipse cx="407.4" cy="202" rx="1.4" ry="1.1"/><ellipse cx="409.8" cy="201.1" rx="1.1" ry="0.8"/><ellipse cx="410.9" cy="201.3" rx="1.4" ry="1.1"/><ellipse cx="413.6" cy="202.3" rx="1.2" ry="1"/><ellipse cx="414.6" cy="201.6" rx="0.6" ry="0.5"/><ellipse cx="416.7" cy="203.2" rx="0.6" ry="0.4"/><ellipse cx="417.1" cy="205.3" rx="1.3" ry="1"/><ellipse cx="418.6" cy="205.7" rx="1.1" ry="1"/><ellipse cx="419.8" cy="205.8" rx="0.6" ry="0.6"/><ellipse cx="421.5" cy="205.5" rx="1" ry="0.8"/><ellipse cx="423.8" cy="205.6" rx="1.2" ry="0.9"/><ellipse cx="426.4" cy="205" rx="1" ry="1"/><ellipse cx="428.9" cy="205.4" rx="1.3" ry="1.2"/><ellipse cx="429.6" cy="205.9" rx="0.7" ry="0.6"/><ellipse cx="431.6" cy="205.9" rx="1.1" ry="1.1"/><ellipse cx="432.7" cy="206.8" rx="1" ry="0.8"/><ellipse cx="435.2" cy="208.6" rx="0.7" ry="0.6"/><ellipse cx="435.6" cy="209.2" rx="0.6" ry="0.5"/><ellipse cx="436.8" cy="212.1" rx="1.2" ry="0.8"/><ellipse cx="436.6" cy="214.7" rx="0.6" ry="0.6"/><ellipse cx="437.2" cy="217.5" rx="1" ry="0.7"/><ellipse cx="437.1" cy="220.4" rx="0.9" ry="0.7"/><ellipse cx="437.8" cy="222.4" rx="1.2" ry="1.2"/><ellipse cx="437.5" cy="225" rx="1.2" ry="0.8"/><ellipse cx="435.8" cy="226.3" rx="1.2" ry="0.9"/><ellipse cx="434.4" cy="228.3" rx="1.4" ry="0.9"/><ellipse cx="433.6" cy="230.3" rx="1.4" ry="1.1"/><ellipse cx="431.9" cy="231.2" rx="1.2" ry="1.1"/><ellipse cx="430.7" cy="232" rx="1.2" ry="1.1"/><ellipse cx="428.2" cy="232.8" rx="1.2" ry="1"/><ellipse cx="425.3" cy="233.1" rx="0.7" ry="0.4"/><ellipse cx="423.7" cy="233.6" rx="0.6" ry="0.5"/><ellipse cx="421.5" cy="233.5" rx="0.8" ry="0.6"/><ellipse cx="419" cy="232.4" rx="0.8" ry="0.6"/><ellipse cx="417.1" cy="231.8" rx="0.7" ry="0.7"/><ellipse cx="414" cy="230.5" rx="0.7" ry="0.5"/><ellipse cx="412.2" cy="229.1" rx="0.8" ry="0.8"/><ellipse cx="410.5" cy="227.8" rx="1.1" ry="1"/><ellipse cx="408.3" cy="226.7" rx="0.9" ry="0.8"/><ellipse cx="407.3" cy="223.9" rx="0.7" ry="0.6"/><ellipse cx="406.1" cy="222.3" rx="0.7" ry="0.4"/><ellipse cx="405.7" cy="220.1" rx="0.8" ry="0.5"/><ellipse cx="404.6" cy="218.5" rx="0.8" ry="0.6"/><ellipse cx="403.8" cy="216.5" rx="0.9" ry="0.8"/><ellipse cx="403.2" cy="215.1" rx="1.2" ry="0.8"/><ellipse cx="402.4" cy="213.9" rx="1.3" ry="1.2"/><ellipse cx="401.3" cy="212.9" rx="1.3" ry="1.1"/><ellipse cx="400.9" cy="210.8" rx="0.7" ry="0.6"/><ellipse cx="401" cy="209" rx="1.1" ry="0.7"/><ellipse cx="401.2" cy="208" rx="0.6" ry="0.6"/><ellipse cx="401.2" cy="205" rx="0.7" ry="0.5"/></g>
<path d="M430.9 227.8h.5M410.7 219.7h.5M425.7 208.9h.5M415.1 204.7h.5M430.1 207.3h.5M406.2 210.3h.5M424.5 221.7h.5M420.3 228.5h.5M428.5 208.1h.5M420.7 206.9h.5M410.1 206.2h.5M404.1 212.6h.5M433.4 222.3h.5M404.5 208.4h.5M422.7 218.3h.5M402.3 204.5h.5M421.8 220.5h.5M410 220.1h.5M420.5 212.3h.5M435.5 214h.5M416.6 218.6h.5M429.1 218.5h.5M427.2 221.7h.5M428.8 208.4h.5M421.9 215.4h.5M409.7 226.2h.5M409.3 224h.5M419 215h.5M426.9 224.4h.5M430.2 209.9h.5M425.5 217.2h.5M435.3 215.6h.5M414.3 202.3h.5M418.3 218.4h.5M412.5 204.8h.5M407.5 215.6h.5M413.9 217.3h.5M420.5 213.8h.5M406.2 202.1h.5M421.6 232.2h.5M411.5 212.6h.5M412.9 225h.5M419.2 226.7h.5M401.5 205.7h.5M408.8 213.2h.5M415.8 213.7h.5M436.2 215.4h.5M422.1 232h.5M424.5 220.3h.5M431.3 212.1h.5M420.6 219.9h.5M414.8 221.8h.5M414.7 210.2h.5M433.6 208.6h.5M411.1 216.9h.5M404 214.6h.5M429.6 224.1h.5M433.5 212.8h.5M430.8 216.4h.5M433.5 216.6h.5" stroke="#999" stroke-width="0.5" fill="none"/>
<circle cx="423" cy="216.9" r="1.8" fill="#fff" stroke="#555" stroke-width="0.45"/>
<circle cx="427.5" cy="218.7" r="1.6" fill="#fff" stroke="#555" stroke-width="0.45"/>
<circle cx="424.8" cy="221.4" r="1.6" fill="#fff" stroke="#555" stroke-width="0.45"/>
<circle cx="421.2" cy="220.5" r="1.4" fill="#fff" stroke="#555" stroke-width="0.45"/>
<g fill="#fff" stroke="#1e1e1e" stroke-width="0.62"><ellipse cx="403.9" cy="195.4" rx="0.6" ry="0.4"/><ellipse cx="406.8" cy="194.8" rx="0.6" ry="0.6"/><ellipse cx="407.8" cy="194.3" rx="0.6" ry="0.4"/><ellipse cx="410.4" cy="194.5" rx="0.6" ry="0.5"/><ellipse cx="411.8" cy="194.8" rx="0.9" ry="0.7"/><ellipse cx="413.4" cy="194.3" rx="0.5" ry="0.4"/><ellipse cx="415.1" cy="195.1" rx="0.6" ry="0.4"/><ellipse cx="416.7" cy="195.8" rx="0.8" ry="0.6"/><ellipse cx="419.3" cy="196.8" rx="0.7" ry="0.7"/><ellipse cx="420.1" cy="196.9" rx="1.1" ry="0.9"/></g>
<path d="M365.5 211.4 L365.5 216 L370.2 216" fill="none" stroke="#2a2a2a" stroke-width="0.7"/>
<path d="M399.2 211.4 L399.2 216 L394.5 216" fill="none" stroke="#2a2a2a" stroke-width="0.7"/>
<path d="M365.2 227.7 L370.2 227.7 L370.2 240" fill="none" stroke="#2a2a2a" stroke-width="0.7"/>
<path d="M399.5 227.7 L394.5 227.7 L394.5 240" fill="none" stroke="#2a2a2a" stroke-width="0.7"/>
<path d="M312.2 184 L331.4 184.5 L330.7 200.1 L326.6 199.6 L326.6 194.1 L312.2 193.6Z" fill="none" stroke="#2a2a2a" stroke-width="0.8"/>
<path d="M341.1 176 L354.1 176 L354.1 190.5 L341.1 190.5Z" fill="#fff" stroke="#222" stroke-width="1.0"/>
<path d="M342.8 177.7 L352.4 177.7 L352.4 188.8 L342.8 188.8Z" fill="none" stroke="#444" stroke-width="0.45"/>
<text x="347.6" y="184.6" font-size="3.6" text-anchor="middle" fill="#222">26</text>
<path d="M340.4 190.5 L340.4 204.9 L354.8 204.9 L354.8 190.5" fill="none" stroke="#2a2a2a" stroke-width="0.5"/>
<circle cx="305.9" cy="205.7" r="5.3" fill="#fff" stroke="#555" stroke-width="0.45"/>
<circle cx="305.9" cy="205.7" r="0.35" fill="#555"/>
<circle cx="321.1" cy="208.6" r="4.3" fill="#fff" stroke="#555" stroke-width="0.45"/>
<circle cx="321.1" cy="208.6" r="0.35" fill="#555"/>
<circle cx="309" cy="220.6" r="2.9" fill="#fff" stroke="#555" stroke-width="0.45"/>
<circle cx="309" cy="220.6" r="0.35" fill="#555"/>
<circle cx="321.1" cy="218.2" r="2.4" fill="#fff" stroke="#555" stroke-width="0.45"/>
<circle cx="321.1" cy="218.2" r="0.35" fill="#555"/>
<circle cx="333.1" cy="258" r="2.9" fill="#fff" stroke="#555" stroke-width="0.45"/>
<circle cx="333.1" cy="258" r="0.35" fill="#555"/>
<circle cx="333.1" cy="264.7" r="2.4" fill="#fff" stroke="#555" stroke-width="0.45"/>
<circle cx="333.1" cy="264.7" r="0.35" fill="#555"/>
<circle cx="382" cy="242.3" r="3.9" fill="#fff" stroke="#555" stroke-width="0.45"/>
<circle cx="382" cy="242.3" r="0.35" fill="#555"/>
<circle cx="392.2" cy="241.8" r="2.4" fill="#fff" stroke="#555" stroke-width="0.45"/>
<circle cx="392.2" cy="241.8" r="0.35" fill="#555"/>
<circle cx="342.8" cy="273.6" r="2.9" fill="#fff" stroke="#555" stroke-width="0.45"/>
<circle cx="342.8" cy="273.6" r="0.35" fill="#555"/>
<circle cx="342.8" cy="279.6" r="2.9" fill="#fff" stroke="#555" stroke-width="0.45"/>
<circle cx="342.8" cy="279.6" r="0.35" fill="#555"/>
<circle cx="345.2" cy="262.8" r="2.4" fill="#fff" stroke="#555" stroke-width="0.45"/>
<circle cx="345.2" cy="262.8" r="0.35" fill="#555"/>
<circle cx="305.9" cy="171.2" r="2.9" fill="#fff" stroke="#555" stroke-width="0.45"/>
<circle cx="305.9" cy="171.2" r="0.35" fill="#555"/>
<g fill="#fff" stroke="#1e1e1e" stroke-width="0.62"><ellipse cx="333.7" cy="174" rx="0.7" ry="0.5"/><ellipse cx="334.2" cy="176.2" rx="0.9" ry="0.7"/><ellipse cx="333.4" cy="177.9" rx="0.6" ry="0.6"/><ellipse cx="333.2" cy="181.4" rx="0.7" ry="0.4"/><ellipse cx="333" cy="183.8" rx="1" ry="0.8"/><ellipse cx="333.4" cy="186.8" rx="1.2" ry="0.8"/><ellipse cx="333.3" cy="188.1" rx="0.6" ry="0.4"/><ellipse cx="333.9" cy="192" rx="1.2" ry="0.8"/><ellipse cx="334.4" cy="193.4" rx="0.9" ry="0.8"/><ellipse cx="334.2" cy="197.1" rx="0.9" ry="0.8"/><ellipse cx="334.1" cy="198.1" rx="0.6" ry="0.4"/><ellipse cx="335.9" cy="202.2" rx="1" ry="0.9"/><ellipse cx="335.8" cy="204.2" rx="0.6" ry="0.5"/><ellipse cx="335.7" cy="205.5" rx="1.3" ry="0.9"/><ellipse cx="336" cy="208.8" rx="0.6" ry="0.6"/><ellipse cx="335.2" cy="211.8" rx="0.5" ry="0.4"/><ellipse cx="337" cy="212.7" rx="0.7" ry="0.7"/><ellipse cx="336.7" cy="216" rx="1.2" ry="0.7"/><ellipse cx="337" cy="218.7" rx="1" ry="0.8"/><ellipse cx="336.4" cy="220.9" rx="0.6" ry="0.4"/><ellipse cx="336.7" cy="223.5" rx="0.6" ry="0.5"/><ellipse cx="338.1" cy="225.6" rx="0.8" ry="0.6"/><ellipse cx="338.1" cy="227.6" rx="0.9" ry="0.7"/><ellipse cx="338.5" cy="230.5" rx="1" ry="0.6"/><ellipse cx="337.5" cy="232.6" rx="1" ry="0.8"/><ellipse cx="337.9" cy="234.7" rx="0.6" ry="0.5"/><ellipse cx="337.9" cy="237.7" rx="1.1" ry="0.8"/><ellipse cx="338" cy="239.9" rx="0.7" ry="0.5"/><ellipse cx="338" cy="242" rx="1.1" ry="0.8"/><ellipse cx="338.6" cy="245.5" rx="1.1" ry="0.8"/><ellipse cx="337.9" cy="246.3" rx="0.6" ry="0.6"/><ellipse cx="337.1" cy="249.4" rx="1" ry="0.9"/><ellipse cx="336.8" cy="252.5" rx="0.7" ry="0.6"/><ellipse cx="336" cy="253.9" rx="1" ry="0.7"/><ellipse cx="336.7" cy="256.9" rx="0.6" ry="0.5"/><ellipse cx="336.9" cy="259.1" rx="0.9" ry="0.8"/><ellipse cx="335.8" cy="262.4" rx="0.7" ry="0.6"/><ellipse cx="335.4" cy="263.5" rx="0.5" ry="0.5"/><ellipse cx="335.5" cy="267.2" rx="0.9" ry="0.8"/><ellipse cx="334.7" cy="269.2" rx="0.6" ry="0.5"/><ellipse cx="335.6" cy="270.7" rx="1" ry="0.8"/><ellipse cx="335.9" cy="273.4" rx="1.1" ry="0.7"/><ellipse cx="335.9" cy="276.4" rx="1.2" ry="1.1"/><ellipse cx="336.7" cy="280" rx="1.2" ry="1.1"/><ellipse cx="336.1" cy="282.8" rx="0.6" ry="0.4"/><ellipse cx="337" cy="285" rx="0.6" ry="0.4"/><ellipse cx="336.6" cy="287.6" rx="0.6" ry="0.5"/><ellipse cx="335.9" cy="288.7" rx="1.2" ry="0.8"/></g>
<g fill="#fff" stroke="#1e1e1e" stroke-width="0.62"><ellipse cx="342.4" cy="209.4" rx="0.9" ry="0.5"/><ellipse cx="343.4" cy="212.2" rx="1.1" ry="1"/><ellipse cx="343.9" cy="214.1" rx="0.7" ry="0.6"/><ellipse cx="342.9" cy="217" rx="1" ry="0.7"/><ellipse cx="343.8" cy="220.1" rx="1.4" ry="1.1"/><ellipse cx="344.2" cy="222.6" rx="0.9" ry="0.7"/><ellipse cx="344" cy="225.4" rx="0.8" ry="0.6"/><ellipse cx="344.3" cy="228" rx="0.7" ry="0.5"/><ellipse cx="345.2" cy="229.9" rx="0.8" ry="0.7"/><ellipse cx="344" cy="232.7" rx="0.8" ry="0.8"/><ellipse cx="344.1" cy="235.5" rx="1.2" ry="1"/><ellipse cx="345.3" cy="237.7" rx="1" ry="0.7"/><ellipse cx="344.6" cy="239.9" rx="1.2" ry="1.1"/><ellipse cx="345.4" cy="243.1" rx="1.1" ry="0.8"/><ellipse cx="345.6" cy="244.5" rx="0.9" ry="0.7"/><ellipse cx="346.5" cy="248.3" rx="0.6" ry="0.5"/><ellipse cx="346.4" cy="249.6" rx="0.7" ry="0.7"/><ellipse cx="346" cy="252.6" rx="1.1" ry="0.8"/><ellipse cx="346" cy="254.7" rx="1.3" ry="1.2"/><ellipse cx="345.7" cy="256.2" rx="0.8" ry="0.5"/><ellipse cx="346.1" cy="258.4" rx="1.3" ry="1.1"/><ellipse cx="344.9" cy="260.2" rx="1.3" ry="1.1"/><ellipse cx="345.5" cy="262" rx="1" ry="0.7"/><ellipse cx="345" cy="265" rx="1.1" ry="1.1"/><ellipse cx="344.7" cy="266" rx="1.4" ry="0.9"/><ellipse cx="344" cy="269" rx="0.9" ry="0.9"/><ellipse cx="344.2" cy="270.8" rx="1.2" ry="1.2"/></g>
<g fill="#fff" stroke="#1e1e1e" stroke-width="0.62"><ellipse cx="316.5" cy="241.7" rx="0.4" ry="0.3"/><ellipse cx="317.6" cy="242.2" rx="1" ry="0.7"/><ellipse cx="318.9" cy="241" rx="0.8" ry="0.7"/><ellipse cx="319.2" cy="239.2" rx="0.6" ry="0.5"/></g>
<path d="M356 194.1 L356.5 196.2 L357.3 199.1 L358.2 202.5 L359 206.2 L359.6 209.9 L359.6 213.4 L359.2 216.4 L358.2 219.3 L357 222.1 L355.7 225.2 L354.5 228.6 L353.6 232.7 L353 237.8 L352.5 244.1 L352 250.7 L351.7 257.1 L351.4 262.5 L351.2 266.4" fill="none" stroke="#333" stroke-width="0.62"/>
<path d="M358.9 194.1 L359.5 196.2 L360.4 199 L361.5 202.4 L362.4 206.1 L363.1 209.8 L363.3 213.4 L362.8 216.7 L361.9 220.1 L360.6 223.5 L359.3 227 L358.1 230.9 L357.2 235.1 L356.6 240.1 L356.1 245.9 L355.8 252.1 L355.5 257.9 L355.3 262.9 L355.1 266.4" fill="none" stroke="#333" stroke-width="0.62"/>
<path d="M352.4 206.1 L352.9 207.4 L353.7 209.1 L354.6 211.1 L355.4 213.4 L355.9 215.8 L356 218.2 L355.5 220.6 L354.6 222.9 L353.4 225.4 L352.1 228.2 L350.9 231.4 L350 235.1 L349.4 239.8 L348.8 245.6 L348.4 251.8 L348.1 257.7 L347.8 262.8 L347.6 266.4" fill="none" stroke="#5a5a5a" stroke-width="0.47"/>
<path d="M365.7 211.4 L399.4 211.4 L399.4 216.3 L403.7 217.2 L403 227.8 L398.9 228.3 L398.2 238.7 L366.1 238.7 L366.1 228.3 L362.8 227.3 L363.3 217.2 L365.7 216.3Z" fill="none" stroke="#2a2a2a" stroke-width="0.9"/>
<path d="M371.2 215.8 L394.1 215.8 L394.1 235.1 L371.2 235.1Z" fill="none" stroke="#2a2a2a" stroke-width="0.8"/>
<text x="382.5" y="223.1" font-size="3.6" text-anchor="middle" fill="#222">27</text>
<path d="M375.3 225.9 L389.8 225.9" fill="none" stroke="#2a2a2a" stroke-width="0.5"/>
<path d="M372.9 233.1 L392.2 233.1" fill="none" stroke="#2a2a2a" stroke-width="0.4"/>
<path d="M353.6 170 L353.8 171.7 L354.1 174 L354.4 176.8 L354.8 179.6 L355.3 182.3 L356 184.5 L356.8 186.1 L357.5 187.6 L358.4 188.8 L359.6 189.9 L361.2 190.8 L363.3 191.7 L366 192.4 L369.3 193 L373 193.5 L376.9 193.9 L381 194.1 L384.9 194.1 L389.2 193.9 L394 193.4 L398.8 192.8 L403.4 192.2 L407.2 191.6 L410 191.2" fill="none" stroke="#333" stroke-width="0.62"/>
<path d="M368.1 170 L368.3 171.1 L368.4 172.6 L368.7 174.4 L369.1 176.2 L369.6 178.1 L370.5 179.6 L371.6 181 L373 182.4 L374.5 183.7 L376.3 184.9 L378.2 186 L380.1 186.9 L382.2 187.6 L384.5 188.2 L387 188.7 L389.5 189 L392.1 189.2 L394.6 189.3 L397.3 189.1 L400.2 188.6 L403.2 188 L406 187.3 L408.3 186.8 L410 186.4" fill="none" stroke="#333" stroke-width="0.62"/>
<g fill="#fff" stroke="#1e1e1e" stroke-width="0.62"><ellipse cx="372" cy="176.8" rx="1.1" ry="1.1"/><ellipse cx="373.7" cy="178.5" rx="0.9" ry="0.6"/><ellipse cx="374.8" cy="179" rx="1.1" ry="1"/><ellipse cx="377.1" cy="180.3" rx="0.7" ry="0.7"/><ellipse cx="378.9" cy="181.1" rx="1.2" ry="1"/><ellipse cx="380.5" cy="181.9" rx="1.3" ry="1.1"/><ellipse cx="381.7" cy="182.5" rx="0.7" ry="0.7"/><ellipse cx="383.2" cy="183.9" rx="1.2" ry="0.8"/><ellipse cx="384.8" cy="183.6" rx="0.6" ry="0.6"/><ellipse cx="386.3" cy="184.8" rx="0.9" ry="0.7"/><ellipse cx="387.8" cy="184.8" rx="1.1" ry="1.1"/><ellipse cx="389.4" cy="185.1" rx="0.8" ry="0.5"/><ellipse cx="390.9" cy="185.7" rx="0.7" ry="0.6"/><ellipse cx="392.8" cy="185.3" rx="0.6" ry="0.6"/><ellipse cx="395.5" cy="185.6" rx="0.6" ry="0.4"/><ellipse cx="398.4" cy="185.9" rx="0.9" ry="0.7"/><ellipse cx="400.7" cy="185.5" rx="0.9" ry="0.9"/><ellipse cx="402.8" cy="185.2" rx="0.8" ry="0.6"/><ellipse cx="405.1" cy="184.5" rx="1.2" ry="0.9"/><ellipse cx="407.5" cy="183.4" rx="1.3" ry="1"/><ellipse cx="409.2" cy="182.9" rx="1" ry="0.8"/></g>
<g fill="#fff" stroke="#1e1e1e" stroke-width="0.62"><ellipse cx="376.7" cy="171" rx="1" ry="0.9"/><ellipse cx="379.3" cy="172.5" rx="1.1" ry="0.7"/><ellipse cx="381.4" cy="174" rx="0.6" ry="0.4"/><ellipse cx="383" cy="175.6" rx="1" ry="0.7"/><ellipse cx="384.3" cy="175.6" rx="0.7" ry="0.6"/><ellipse cx="387.1" cy="177.5" rx="1" ry="0.8"/><ellipse cx="390.3" cy="178.3" rx="0.8" ry="0.7"/><ellipse cx="393.1" cy="179.2" rx="0.6" ry="0.5"/><ellipse cx="395.9" cy="179.5" rx="1" ry="0.9"/><ellipse cx="399.2" cy="179.6" rx="0.8" ry="0.6"/><ellipse cx="401.4" cy="179.8" rx="0.7" ry="0.6"/><ellipse cx="404.4" cy="179.8" rx="1.2" ry="1.2"/><ellipse cx="405.5" cy="178.5" rx="1.1" ry="1.1"/><ellipse cx="407.7" cy="178.4" rx="1.2" ry="0.9"/><ellipse cx="409.2" cy="177.4" rx="0.8" ry="0.6"/></g>
<g fill="#fff" stroke="#1e1e1e" stroke-width="0.62"><ellipse cx="401.7" cy="208.6" rx="0.6" ry="0.6"/><ellipse cx="402.1" cy="206.1" rx="0.8" ry="0.7"/><ellipse cx="403" cy="204.1" rx="0.7" ry="0.5"/><ellipse cx="403.7" cy="202.1" rx="0.6" ry="0.6"/><ellipse cx="405" cy="200.1" rx="0.7" ry="0.6"/><ellipse cx="407.5" cy="198.8" rx="0.7" ry="0.4"/><ellipse cx="409.2" cy="198.3" rx="1" ry="0.8"/></g>
<g fill="#fff" stroke="#1e1e1e" stroke-width="0.62"><ellipse cx="400.8" cy="240.4" rx="1.1" ry="0.8"/><ellipse cx="402.1" cy="241.2" rx="0.8" ry="0.7"/><ellipse cx="404" cy="240.8" rx="0.7" ry="0.7"/><ellipse cx="405.9" cy="241" rx="1" ry="0.8"/><ellipse cx="407.6" cy="240.6" rx="0.6" ry="0.4"/><ellipse cx="409.2" cy="239.5" rx="0.8" ry="0.6"/></g>
<path d="M363.3 238.7 L363.3 247.1" fill="none" stroke="#2a2a2a" stroke-width="0.6"/>
<path d="M365.7 271.2 L374.1 279.6" fill="none" stroke="#2a2a2a" stroke-width="0.4"/>
<path d="M363.3 276 L371.7 284.5" fill="none" stroke="#2a2a2a" stroke-width="0.4"/>
<path d="M353.6 276 L354.2 276.8 L355.1 277.9 L356.2 279.2 L357.2 280.6 L358 282 L358.4 283.3 L358.4 284.5 L358.1 285.8 L357.5 287.1 L356.9 288.3 L356.4 289.3 L356 290" fill="none" stroke="#333" stroke-width="0.52"/>
<path d="M436.1 155.5 L436.6 227.8 L438.6 253.1" fill="none" stroke="#1e1e1e" stroke-width="1.1"/>
<path d="M439.3 191.7 L441 227.8 L442.9 253.1" fill="none" stroke="#2a2a2a" stroke-width="0.7"/>
<g fill="#fff" stroke="#1e1e1e" stroke-width="0.62"><ellipse cx="402.3" cy="186" rx="1" ry="0.9"/><ellipse cx="403.7" cy="186.9" rx="0.9" ry="0.7"/><ellipse cx="406" cy="187.7" rx="1.2" ry="0.9"/><ellipse cx="408.5" cy="187.6" rx="0.7" ry="0.6"/><ellipse cx="410.8" cy="187.7" rx="0.7" ry="0.6"/><ellipse cx="412.9" cy="188.2" rx="1" ry="0.7"/><ellipse cx="414.7" cy="187.5" rx="1" ry="1"/><ellipse cx="416.8" cy="186" rx="1.1" ry="1"/><ellipse cx="419" cy="184.9" rx="1.2" ry="1.1"/><ellipse cx="420.3" cy="184" rx="1" ry="0.8"/><ellipse cx="421.5" cy="181.9" rx="0.8" ry="0.7"/><ellipse cx="421.8" cy="178.9" rx="1.2" ry="0.9"/><ellipse cx="423.5" cy="176.8" rx="0.6" ry="0.6"/><ellipse cx="423.5" cy="175.7" rx="0.7" ry="0.6"/></g>
<path d="M400 203.7 L401 203.4 L402.3 202.9 L403.9 202.4 L405.7 201.9 L407.6 201.5 L409.6 201.3 L411.8 201.4 L414.3 201.8 L416.9 202.2 L419.5 202.8 L421.9 203.3 L424.1 203.7 L426.1 204.2 L428 204.6 L429.8 205.1 L431.4 205.5 L432.7 205.9 L433.7 206.1" fill="none" stroke="#333" stroke-width="0.62"/>
<path d="M400 213.4 L400.7 214.7 L401.7 216.4 L402.9 218.5 L404.2 220.8 L405.7 223.1 L407.2 225.4 L409 227.8 L411.2 230.3 L413.4 233 L415.6 235.5 L417.6 237.9 L419.3 239.9 L420.6 241.5 L421.6 242.9 L422.4 244.2 L423.1 245.2 L423.7 246 L424.1 246.6" fill="none" stroke="#333" stroke-width="0.62"/>
<path d="M403.6 211 L404.3 212.4 L405.1 214.4 L406.1 216.7 L407.3 219.3 L408.6 221.8 L410.1 224.2 L411.9 226.5 L414 228.9 L416.3 231.4 L418.5 233.7 L420.5 235.9 L422.2 238 L423.4 239.8 L424.3 241.5 L425.1 243.1 L425.7 244.6 L426.1 245.7 L426.5 246.6" fill="none" stroke="#505050" stroke-width="0.52"/>
<path d="M418.5 222.5h.5M421.6 229.2h.5M420.6 221.4h.5M419.7 218.9h.5M424.6 213.1h.5M426.1 221.4h.5M417.3 212.8h.5M411.6 221.4h.5M428.7 227.7h.5M413.6 225.4h.5M427.1 220.2h.5M416.9 220.9h.5M425.4 219.6h.5M416.2 227.7h.5M418.1 219.1h.5M414.5 220.3h.5M425 217.9h.5M424 220.5h.5M415.9 221.5h.5M411 214.9h.5M420.9 211.8h.5M415.5 220.8h.5M413.4 216.9h.5M429.3 219.5h.5M414.7 222.5h.5M412.1 221h.5M423.7 212.7h.5M421.5 216.9h.5M425.8 222.8h.5M429.4 222.7h.5M413.6 214.5h.5M424.9 226.6h.5M411 219h.5M415.8 220h.5M428.6 221.8h.5M425.8 225.7h.5M415.7 222.9h.5M417.8 220.1h.5M421.1 223.8h.5M413.1 217h.5" stroke="#888" stroke-width="0.5" fill="none"/>
<g fill="#fff" stroke="#1e1e1e" stroke-width="0.62"><ellipse cx="413.3" cy="212.1" rx="1.3" ry="1.3"/><ellipse cx="416" cy="211.1" rx="0.6" ry="0.4"/><ellipse cx="418.3" cy="211.1" rx="1.2" ry="0.7"/><ellipse cx="421.5" cy="210.3" rx="0.7" ry="0.6"/><ellipse cx="424.3" cy="211" rx="0.9" ry="0.9"/><ellipse cx="425.8" cy="212.2" rx="1.3" ry="1.2"/><ellipse cx="427.9" cy="212.7" rx="1.1" ry="0.8"/><ellipse cx="429.1" cy="214.8" rx="0.8" ry="0.6"/><ellipse cx="430.7" cy="216.8" rx="1.2" ry="0.8"/><ellipse cx="431.3" cy="218.3" rx="1.3" ry="0.9"/><ellipse cx="431.5" cy="220.3" rx="1.2" ry="1"/><ellipse cx="431.3" cy="222.5" rx="0.7" ry="0.4"/><ellipse cx="431.1" cy="224.6" rx="1.1" ry="0.8"/><ellipse cx="430.1" cy="226.6" rx="1" ry="0.6"/><ellipse cx="428.7" cy="227.9" rx="1" ry="0.7"/><ellipse cx="426.8" cy="229.3" rx="0.8" ry="0.6"/><ellipse cx="424.8" cy="229.5" rx="1.3" ry="1.1"/><ellipse cx="422.2" cy="230.4" rx="0.6" ry="0.4"/><ellipse cx="419.1" cy="230.7" rx="1" ry="0.7"/><ellipse cx="417" cy="229.8" rx="1.3" ry="1.2"/><ellipse cx="414.8" cy="229.7" rx="1.3" ry="1.2"/><ellipse cx="412.8" cy="228.5" rx="1.3" ry="0.9"/><ellipse cx="411.9" cy="226.5" rx="1.2" ry="1.2"/><ellipse cx="411" cy="225.2" rx="1.2" ry="1"/><ellipse cx="409.8" cy="222.9" rx="1.2" ry="0.9"/><ellipse cx="408.9" cy="220.9" rx="1" ry="0.9"/><ellipse cx="409.1" cy="219.2" rx="1.3" ry="1"/><ellipse cx="409.3" cy="216.3" rx="1.1" ry="0.8"/><ellipse cx="409.4" cy="214.8" rx="1.4" ry="0.9"/></g>
<circle cx="422.9" cy="235.1" r="2.4" fill="#fff" stroke="#555" stroke-width="0.45"/>
<circle cx="422.9" cy="235.1" r="0.35" fill="#555"/>
<circle cx="431.3" cy="234.6" r="2.9" fill="#fff" stroke="#555" stroke-width="0.45"/>
<circle cx="431.3" cy="234.6" r="0.35" fill="#555"/>
<circle cx="424.1" cy="219.4" r="2.2" fill="#fff" stroke="#555" stroke-width="0.45"/>
<circle cx="427.7" cy="221.8" r="1.9" fill="#fff" stroke="#555" stroke-width="0.45"/>
<circle cx="422.9" cy="223.5" r="1.9" fill="#fff" stroke="#555" stroke-width="0.45"/>
<path d="M428.4 253.1 L437.3 253.1 L437.3 270.7" fill="none" stroke="#2a2a2a" stroke-width="0.7"/>
<path d="M432.5 254.3 L432.5 268.8" fill="none" stroke="#2a2a2a" stroke-width="0.4"/>
<path d="M443.4 239.9 L466.3 239.9 L466.3 251.9 L443.4 251.9Z" fill="#fff" stroke="#222" stroke-width="0.9"/>
<text x="454.8" y="247.2" font-size="3.6" text-anchor="middle" fill="#222">10</text>
<path d="M439.8 227.8 L467.5 227.8" fill="none" stroke="#2a2a2a" stroke-width="0.5"/>
<path d="M443.4 236.3 L468.7 236.3" fill="none" stroke="#2a2a2a" stroke-width="0.6"/>
<path d="M443.4 254.3 L468.7 254.8" fill="none" stroke="#2a2a2a" stroke-width="0.5"/>
<path d="M443.4 227.8 L443.4 271.2" fill="none" stroke="#2a2a2a" stroke-width="0.8"/>
<path d="M439.8 253.1 L439.8 271.2" fill="none" stroke="#2a2a2a" stroke-width="0.5"/>
<g fill="#fff" stroke="#1e1e1e" stroke-width="0.62"><ellipse cx="449.2" cy="262.1" rx="0.7" ry="0.7"/><ellipse cx="451" cy="261.1" rx="1.1" ry="1.1"/><ellipse cx="452.6" cy="260.5" rx="0.8" ry="0.7"/><ellipse cx="454.2" cy="258.8" rx="1" ry="0.7"/><ellipse cx="456.6" cy="259" rx="0.6" ry="0.6"/><ellipse cx="457.9" cy="260" rx="1" ry="0.7"/><ellipse cx="459.6" cy="261.1" rx="0.9" ry="0.8"/><ellipse cx="462" cy="261.7" rx="1" ry="0.6"/><ellipse cx="463.5" cy="263.1" rx="0.8" ry="0.5"/><ellipse cx="464.6" cy="264" rx="0.7" ry="0.4"/><ellipse cx="464.9" cy="266.6" rx="0.9" ry="0.6"/><ellipse cx="465.8" cy="267.8" rx="1.1" ry="0.9"/></g>
<g fill="#fff" stroke="#1e1e1e" stroke-width="0.62"><ellipse cx="450" cy="266.8" rx="1" ry="1"/><ellipse cx="452.7" cy="265.7" rx="0.6" ry="0.4"/><ellipse cx="454.1" cy="265.8" rx="0.6" ry="0.5"/><ellipse cx="456.6" cy="265.5" rx="0.5" ry="0.4"/><ellipse cx="457.8" cy="266" rx="0.9" ry="0.8"/><ellipse cx="460.3" cy="266.5" rx="0.9" ry="0.7"/></g>
<path d="M469.9 226.6 L506 226.6 L506 236.3 L503.6 236.3 L503.6 268.8 L492.8 270 L492.8 276 L479.5 276 L479.5 270 L469.9 268.8Z" fill="none" stroke="#1e1e1e" stroke-width="0.95"/>
<path d="M479.5 227.8 L492.8 227.8 L492.8 235.1 L479.5 235.1Z" fill="none" stroke="#2a2a2a" stroke-width="0.7"/>
<text x="486.3" y="233" font-size="3.6" text-anchor="middle" fill="#222">9</text>
<path d="M471.8 229 L476.6 229 L476.6 233.1 L471.8 233.1 L471.8 236.3" fill="none" stroke="#2a2a2a" stroke-width="0.9"/>
<path d="M469.9 236.3 L503.6 236.3" fill="none" stroke="#2a2a2a" stroke-width="0.5"/>
<path d="M480.6 251.7h.5M484 248.3h.5M487.8 251.2h.5M497.1 244.4h.5M480.8 242.3h.5M483 258.2h.5M475.3 243.7h.5M480.2 248.7h.5M491.6 241.6h.5M476.8 245.5h.5M475.9 240.9h.5M476.2 255.9h.5M494.8 256.9h.5M490.7 244.8h.5M479.4 258.5h.5M476 252.5h.5M477.4 253h.5M491.3 243.3h.5M486.1 242.9h.5M496.6 252.2h.5M491.8 252h.5M494.2 249.6h.5M489.1 249.1h.5M493.5 250h.5M480.9 249.6h.5M487.3 257.5h.5M492.6 242.8h.5M487 251.1h.5M488.9 248.4h.5M487 253.5h.5M496.8 249.6h.5M494.3 253.3h.5M476.7 243.9h.5M481.8 246h.5M486.5 244.7h.5M483.3 253.7h.5M490.2 259.4h.5M483.4 257.6h.5M494.8 245.3h.5M477.3 256.1h.5M484.5 246h.5M485.8 254.3h.5M493.8 242.1h.5M478.8 245.7h.5M478.2 248.7h.5M477 252.7h.5M484.4 243.7h.5M491.7 245.5h.5M493.5 257.7h.5M481.3 244h.5" stroke="#888" stroke-width="0.5" fill="none"/>
<g fill="#fff" stroke="#1e1e1e" stroke-width="0.62"><ellipse cx="475.7" cy="240.2" rx="1" ry="0.9"/><ellipse cx="477.4" cy="238.7" rx="0.9" ry="0.7"/><ellipse cx="479.5" cy="238.5" rx="1.2" ry="0.8"/><ellipse cx="482.4" cy="238.5" rx="1.2" ry="1.1"/><ellipse cx="484.1" cy="237.7" rx="0.7" ry="0.5"/><ellipse cx="486.4" cy="238.1" rx="0.6" ry="0.6"/><ellipse cx="489.2" cy="239.3" rx="1.1" ry="0.7"/><ellipse cx="491.9" cy="239.9" rx="0.6" ry="0.4"/><ellipse cx="494.5" cy="240.8" rx="1.1" ry="0.8"/><ellipse cx="496" cy="241.8" rx="0.6" ry="0.5"/><ellipse cx="497.5" cy="242.6" rx="1.1" ry="0.7"/><ellipse cx="499" cy="244" rx="1.2" ry="1"/><ellipse cx="499.5" cy="245.8" rx="0.6" ry="0.5"/><ellipse cx="500.1" cy="247.4" rx="1.1" ry="0.7"/><ellipse cx="500.2" cy="249" rx="1" ry="0.9"/><ellipse cx="499.6" cy="251.5" rx="1.2" ry="1"/><ellipse cx="499.2" cy="253.7" rx="1.2" ry="1.1"/><ellipse cx="497.7" cy="255.9" rx="0.9" ry="0.7"/><ellipse cx="496.7" cy="257.5" rx="0.8" ry="0.6"/><ellipse cx="495.6" cy="259.1" rx="1.1" ry="1"/><ellipse cx="493" cy="260.3" rx="0.6" ry="0.6"/><ellipse cx="489.9" cy="261.1" rx="0.8" ry="0.7"/><ellipse cx="487.1" cy="260.4" rx="1" ry="0.8"/><ellipse cx="484.8" cy="260.9" rx="0.8" ry="0.8"/><ellipse cx="482.2" cy="260" rx="1" ry="0.9"/><ellipse cx="479.9" cy="259.4" rx="1" ry="0.6"/><ellipse cx="478" cy="259" rx="1" ry="0.7"/><ellipse cx="476.2" cy="257.8" rx="0.9" ry="0.9"/><ellipse cx="474.8" cy="255.6" rx="0.6" ry="0.5"/><ellipse cx="473.1" cy="254.3" rx="0.9" ry="0.8"/><ellipse cx="472.6" cy="252" rx="1.2" ry="1.1"/><ellipse cx="473.3" cy="249.5" rx="0.6" ry="0.5"/><ellipse cx="472.8" cy="245.7" rx="0.7" ry="0.5"/><ellipse cx="474.2" cy="243.2" rx="1" ry="1"/></g>
<g fill="#fff" stroke="#1e1e1e" stroke-width="0.62"><ellipse cx="484" cy="242.8" rx="0.8" ry="0.6"/><ellipse cx="485.3" cy="244.6" rx="0.5" ry="0.3"/><ellipse cx="487.5" cy="245.4" rx="0.7" ry="0.4"/><ellipse cx="489" cy="246.4" rx="0.6" ry="0.4"/><ellipse cx="489.1" cy="249" rx="0.8" ry="0.5"/><ellipse cx="488.3" cy="250.2" rx="0.6" ry="0.6"/><ellipse cx="487.6" cy="251.9" rx="1" ry="0.7"/><ellipse cx="487.1" cy="254" rx="1.1" ry="0.8"/></g>
<circle cx="476.6" cy="247.6" r="2.4" fill="#fff" stroke="#555" stroke-width="0.45"/>
<circle cx="476.6" cy="247.6" r="0.35" fill="#555"/>
<g fill="#fff" stroke="#1e1e1e" stroke-width="0.62"><ellipse cx="498.7" cy="239.7" rx="0.8" ry="0.6"/><ellipse cx="500.9" cy="240.7" rx="0.5" ry="0.4"/><ellipse cx="502.7" cy="242.6" rx="0.8" ry="0.7"/><ellipse cx="502.8" cy="245.1" rx="0.7" ry="0.6"/><ellipse cx="502.2" cy="247.1" rx="0.5" ry="0.4"/><ellipse cx="501.9" cy="250.1" rx="1" ry="0.6"/><ellipse cx="502.6" cy="252.2" rx="1.1" ry="1"/><ellipse cx="501.9" cy="254.8" rx="1.1" ry="0.7"/><ellipse cx="501.9" cy="256.9" rx="1" ry="0.6"/><ellipse cx="501.5" cy="258.8" rx="0.5" ry="0.5"/><ellipse cx="501.3" cy="262" rx="0.6" ry="0.4"/></g>
<path d="M442.2 194.1 L442.7 193.7 L443.4 193.1 L444.3 192.4 L445.3 191.7 L446.6 191.1 L448.2 190.5 L450.1 190 L452.5 189.7 L455 189.4 L457.7 189 L460.3 188.6 L462.7 188.1 L464.9 187.4 L467.1 186.6 L469.3 185.7 L471.3 184.9 L473.1 184 L474.7 183.3 L476 182.5 L477 181.8 L477.9 181.1 L478.5 180.5 L479.1 180 L479.5 179.6" fill="none" stroke="#333" stroke-width="0.62"/>
<path d="M442.2 194.1 L442.3 195.4 L442.3 197.4 L442.5 199.6 L442.7 202 L442.9 204.2 L443.4 206.1 L443.9 207.8 L444.4 209.4 L445 210.9 L445.7 212.3 L446.8 213.5 L448.2 214.6 L450.1 215.5 L452.5 216.1 L455.1 216.7 L457.8 217.2 L460.4 217.6 L462.7 218.2 L464.6 218.8 L466.3 219.4 L467.9 220 L469.4 220.6 L470.9 221.2 L472.3 221.8 L473.7 222.5 L475.1 223.1 L476.5 223.8 L477.7 224.5 L478.8 225 L479.5 225.4" fill="none" stroke="#333" stroke-width="0.62"/>
<path d="M445.3 195.3 L445.4 196.5 L445.5 198.3 L445.6 200.3 L445.8 202.4 L446.1 204.4 L446.5 206.1 L447 207.5 L447.5 208.8 L448.1 210 L448.8 211 L449.8 212 L451.1 212.9 L452.8 213.6 L454.8 214.2 L457.1 214.8 L459.4 215.2 L461.7 215.7 L463.9 216.3 L465.9 216.9 L468 217.7 L470.1 218.4 L472 219.1 L473.5 219.7 L474.7 220.1" fill="none" stroke="#5a5a5a" stroke-width="0.47"/>
<g fill="#fff" stroke="#1e1e1e" stroke-width="0.62"><ellipse cx="443.9" cy="198.4" rx="1" ry="0.8"/><ellipse cx="443.5" cy="200.3" rx="0.7" ry="0.5"/><ellipse cx="443.4" cy="203.9" rx="0.7" ry="0.5"/><ellipse cx="444.1" cy="206.7" rx="1" ry="1"/><ellipse cx="444.5" cy="208.3" rx="0.9" ry="0.8"/><ellipse cx="445.7" cy="209.9" rx="0.7" ry="0.6"/><ellipse cx="446.2" cy="212" rx="0.7" ry="0.7"/><ellipse cx="447.2" cy="213.8" rx="1.1" ry="1.1"/><ellipse cx="448.8" cy="214.3" rx="0.8" ry="0.7"/><ellipse cx="450.9" cy="216.2" rx="0.8" ry="0.7"/><ellipse cx="453" cy="216.3" rx="0.9" ry="0.7"/><ellipse cx="455.6" cy="217.9" rx="0.5" ry="0.4"/><ellipse cx="459" cy="217.6" rx="0.6" ry="0.5"/><ellipse cx="460.4" cy="218.5" rx="0.6" ry="0.6"/><ellipse cx="463.9" cy="219.1" rx="0.5" ry="0.4"/><ellipse cx="465.9" cy="219.7" rx="0.7" ry="0.6"/><ellipse cx="469.7" cy="220.7" rx="0.7" ry="0.7"/><ellipse cx="472.3" cy="222" rx="1" ry="0.8"/><ellipse cx="474.1" cy="222.8" rx="1" ry="0.6"/><ellipse cx="476.4" cy="224.4" rx="0.8" ry="0.8"/></g>
<g fill="#fff" stroke="#1e1e1e" stroke-width="0.62"><ellipse cx="445.5" cy="183.2" rx="0.8" ry="0.8"/><ellipse cx="447.1" cy="183.1" rx="0.9" ry="0.6"/><ellipse cx="449.6" cy="182.4" rx="0.7" ry="0.4"/><ellipse cx="452.2" cy="181" rx="0.7" ry="0.7"/><ellipse cx="453.9" cy="180.4" rx="0.6" ry="0.5"/><ellipse cx="456.7" cy="180.7" rx="0.6" ry="0.6"/><ellipse cx="458.6" cy="180.1" rx="1.1" ry="0.8"/><ellipse cx="461.3" cy="180.2" rx="0.6" ry="0.5"/><ellipse cx="463.7" cy="179.4" rx="0.6" ry="0.6"/><ellipse cx="466.1" cy="179.9" rx="1.1" ry="1.1"/><ellipse cx="468.2" cy="178.6" rx="0.7" ry="0.6"/><ellipse cx="470.7" cy="178.6" rx="1" ry="0.8"/><ellipse cx="472.8" cy="178.3" rx="0.8" ry="0.5"/><ellipse cx="474.3" cy="177.5" rx="0.9" ry="0.7"/></g>
<path d="M439.8 189.3 L441 188.6 L442.7 187.6 L444.7 186.4 L446.9 185.2 L449.3 184.1 L451.8 183.3 L454.6 182.7 L457.7 182.3 L461 182 L464.3 181.7 L467.3 181.4 L469.9 180.8 L472 180.1 L473.8 179.2 L475.4 178.3 L476.8 177.2 L478.1 176.2 L479.5 175.3 L480.9 174.3 L482.4 173.3 L483.7 172.3 L485 171.4 L486 170.6 L486.7 170" fill="none" stroke="#333" stroke-width="0.5700000000000001"/>
<path d="M526.5 221.8 L525.8 224.1 L524.9 227.3 L523.8 231.1 L522.6 235.1 L521.5 239 L520.5 242.3 L519.7 245.1 L519 247.8 L518.3 250.3 L517.6 252.6 L516.7 254.8 L515.7 256.7 L514.2 258.6 L512.4 260.3 L510.5 261.9 L508.7 263.2 L507.1 264.3 L506 265.2" fill="none" stroke="#333" stroke-width="0.62"/>
<path d="M530.1 224.2 L529.5 226.2 L528.5 229 L527.4 232.3 L526.2 235.8 L525.1 239.2 L524.1 242.3 L523.3 245.1 L522.6 247.9 L522 250.7 L521.3 253.3 L520.4 255.8 L519.3 258 L517.7 259.9 L515.7 261.8 L513.6 263.4 L511.5 264.8 L509.7 266 L508.4 266.9" fill="none" stroke="#333" stroke-width="0.62"/>
<path d="M524.1 224.2 L523.4 226.3 L522.5 229.1 L521.4 232.5 L520.2 236 L519.1 239.4 L518.1 242.3 L517.1 244.8 L516.2 247.2 L515.3 249.4 L514.5 251.4 L513.8 253.1 L513.3 254.3" fill="none" stroke="#6a6a6a" stroke-width="0.47"/>
<text x="509.6" y="261.9" font-size="3.2" text-anchor="middle" fill="#222">5</text>
<path d="M531.3 224.9 L553 224.9 L553 244.7 L531.3 244.7Z" fill="none" stroke="#2a2a2a" stroke-width="0.8"/>
<path d="M534.2 227.3 L550.1 227.3 L550.1 241.8 L534.2 241.8Z" fill="#fff" stroke="#222" stroke-width="1.0"/>
<text x="542.2" y="235.9" font-size="3.6" text-anchor="middle" fill="#222">4</text>
<path d="M544.6 244.7 L544.6 251.9 L534.9 253.1 L533.7 264 L525.3 265.2 L525.3 276" fill="none" stroke="#2a2a2a" stroke-width="0.9"/>
<path d="M553 244.7 L554.2 256.7 L560 256.7" fill="none" stroke="#2a2a2a" stroke-width="0.7"/>
<circle cx="530.1" cy="254.3" r="2.2" fill="#fff" stroke="#555" stroke-width="0.45"/>
<circle cx="530.1" cy="254.3" r="0.35" fill="#555"/>
<circle cx="530.1" cy="259.6" r="1.9" fill="#fff" stroke="#555" stroke-width="0.45"/>
<circle cx="530.1" cy="259.6" r="0.35" fill="#555"/>
<g fill="#fff" stroke="#1e1e1e" stroke-width="0.62"><ellipse cx="544.1" cy="266.6" rx="1.1" ry="1"/><ellipse cx="546.9" cy="265.9" rx="1" ry="0.7"/><ellipse cx="549.7" cy="264.8" rx="0.6" ry="0.6"/><ellipse cx="552.2" cy="265.4" rx="1.2" ry="1"/><ellipse cx="554.3" cy="264.9" rx="1.1" ry="0.7"/><ellipse cx="555.8" cy="265.6" rx="1.1" ry="0.9"/><ellipse cx="557" cy="267.7" rx="0.7" ry="0.6"/><ellipse cx="558.7" cy="268.8" rx="1.1" ry="0.8"/><ellipse cx="559.5" cy="271.1" rx="0.9" ry="0.8"/></g>
<path d="M537.3 290 L537.4 288.4 L537.5 286 L537.6 283.3 L537.8 280.5 L538.1 278 L538.6 276 L539.2 274.6 L540.1 273.4 L541 272.4 L542.1 271.8 L543.3 271.3 L544.6 271.2 L546.1 271.3 L547.8 271.8 L549.7 272.4 L551.5 273.4 L553.1 274.6 L554.2 276 L554.9 278 L555.3 280.5 L555.4 283.3 L555.4 286 L555.4 288.4 L555.4 290" fill="none" stroke="#333" stroke-width="0.5700000000000001"/>
<path d="M506 266.4 L506 290" fill="none" stroke="#2a2a2a" stroke-width="0.6"/>
<g fill="#fff" stroke="#1e1e1e" stroke-width="0.62"><ellipse cx="513.4" cy="269.4" rx="0.8" ry="0.5"/><ellipse cx="515.6" cy="268.2" rx="1" ry="1"/><ellipse cx="517.5" cy="267.4" rx="1.1" ry="1"/><ellipse cx="520.1" cy="266.3" rx="0.6" ry="0.5"/><ellipse cx="521.9" cy="267" rx="0.8" ry="0.6"/><ellipse cx="523.2" cy="268.5" rx="0.6" ry="0.5"/><ellipse cx="524.5" cy="269.5" rx="0.8" ry="0.5"/><ellipse cx="524.9" cy="271.8" rx="0.6" ry="0.4"/><ellipse cx="524.8" cy="273.2" rx="0.9" ry="0.9"/><ellipse cx="524.9" cy="275.6" rx="1.2" ry="0.9"/><ellipse cx="525.4" cy="277.7" rx="0.9" ry="0.9"/><ellipse cx="525" cy="279.2" rx="1" ry="1"/><ellipse cx="524.2" cy="281.9" rx="0.8" ry="0.8"/><ellipse cx="522.8" cy="283.3" rx="1.1" ry="1"/><ellipse cx="521.7" cy="284.7" rx="0.6" ry="0.5"/><ellipse cx="520.1" cy="286" rx="0.8" ry="0.6"/><ellipse cx="518.7" cy="286.6" rx="1" ry="0.8"/><ellipse cx="517.1" cy="287.3" rx="0.9" ry="0.6"/></g>
<circle cx="528.9" cy="276" r="1.9" fill="#fff" stroke="#555" stroke-width="0.45"/>
<circle cx="528.9" cy="276" r="0.35" fill="#555"/>
<path d="M656 170 L655.9 172.4 L655.6 175.6 L655.3 179.5 L655 183.7 L654.8 187.8 L654.8 191.7 L655 195.5 L655.2 199.5 L655.6 203.6 L656 207.4 L656.6 210.7 L657.2 213.4 L658.1 215.1 L659.2 216.1 L660.5 216.5 L661.6 216.9 L662.6 217.3 L663.3 218.2 L663.5 219.6 L663.3 221.4 L663 223.3 L662.6 225.2 L662.3 226.7 L662 227.8" fill="none" stroke="#333" stroke-width="0.5700000000000001"/>
<path d="M653.1 170 L653 172.3 L652.7 175.6 L652.4 179.4 L652.1 183.6 L651.9 187.8 L651.9 191.7 L652.1 195.6 L652.4 199.9 L652.7 204.2 L653.2 208.2 L653.7 211.8 L654.3 214.6 L655.1 216.5 L656.1 217.7 L657.1 218.4 L658.2 218.8 L659 219.1 L659.6 219.4" fill="none" stroke="#505050" stroke-width="0.52"/>
<path d="M550 219.4 L552.6 219.6 L556.2 219.8 L560.5 220.2 L565.2 220.5 L569.8 220.8 L574.1 221.1 L578.2 221.4 L582.3 221.8 L586.4 222.1 L590.5 222.4 L594.5 222.6 L598.2 222.5 L601.7 222.3 L605.2 221.8 L608.4 221.2 L611.6 220.6 L614.6 219.9 L617.5 219.4 L620.1 218.9 L622.5 218.3 L624.7 217.8 L626.9 217.3 L629.3 217 L631.9 217 L634.9 217.2 L638.3 217.6 L641.7 218.2 L645.1 218.9 L648.4 219.7 L651.2 220.6 L653.8 221.7 L656.2 223 L658.4 224.4 L660.4 225.8 L662 227 L663.3 227.8" fill="none" stroke="#333" stroke-width="0.62"/>
<path d="M550 221.8 L552.6 222 L556.2 222.3 L560.5 222.6 L565.2 222.9 L569.8 223.2 L574.1 223.5 L578.2 223.8 L582.3 224.2 L586.4 224.5 L590.5 224.8 L594.5 225 L598.2 224.9 L601.7 224.7 L605.2 224.2 L608.4 223.6 L611.6 222.9 L614.6 222.3 L617.5 221.8 L620.1 221.3 L622.5 220.8 L624.8 220.3 L627 219.9 L629.4 219.7 L631.9 219.6 L634.9 219.9 L638.4 220.5 L641.9 221.3 L645.2 222.1 L648 222.8 L650 223.3" fill="none" stroke="#5a5a5a" stroke-width="0.47"/>
<path d="M550 224.9 L552.6 225.1 L556.2 225.3 L560.5 225.6 L565.2 225.9 L569.8 226.1 L574.1 226.4 L578.4 226.6 L583 226.9 L587.7 227.2 L591.9 227.5 L595.6 227.7 L598.2 227.8" fill="none" stroke="#6a6a6a" stroke-width="0.47"/>
<path d="M553.6 237 L582.5 237 L582.5 258.7 L553.6 258.7Z" fill="none" stroke="#2a2a2a" stroke-width="0.6"/>
<path d="M556.5 239.2 L579.6 239.2 L579.6 256.3 L556.5 256.3Z" fill="#fff" stroke="#222" stroke-width="1.0"/>
<path d="M558.2 240.8 L578 240.8 L578 254.6 L558.2 254.6Z" fill="none" stroke="#444" stroke-width="0.45"/>
<text x="568.1" y="249" font-size="3.6" text-anchor="middle" fill="#222">3</text>
<path d="M659.6 197.7 L672.9 198.4 L671.7 209.8 L658.9 209Z" fill="#ddd" stroke="#2a2a2a" stroke-width="0.9"/>
<path d="M661.3 199.4 L665.7 199.6 L665.2 208.1 L660.8 207.8Z" fill="#999" stroke="#2a2a2a" stroke-width="0.6"/>
<path d="M667.1 199.9 L671.2 200.1 L670.5 208.6 L666.6 208.1Z" fill="#999" stroke="#2a2a2a" stroke-width="0.6"/>
<path d="M658.9 174.8 L656 208.6 L665.7 211 L663.3 227.8" fill="none" stroke="#2a2a2a" stroke-width="0.7"/>
<circle cx="665.7" cy="188.1" r="2.9" fill="#fff" stroke="#555" stroke-width="0.45"/>
<circle cx="665.7" cy="188.1" r="0.35" fill="#555"/>
<circle cx="673.4" cy="186.4" r="2.2" fill="#fff" stroke="#555" stroke-width="0.45"/>
<circle cx="673.4" cy="186.4" r="0.35" fill="#555"/>
<circle cx="669.3" cy="180.8" r="1.4" fill="#fff" stroke="#555" stroke-width="0.45"/>
<circle cx="669.3" cy="180.8" r="0.35" fill="#555"/>
<circle cx="616.3" cy="237.5" r="3.4" fill="#fff" stroke="#555" stroke-width="0.45"/>
<circle cx="616.3" cy="237.5" r="0.35" fill="#555"/>
<circle cx="624.7" cy="235.5" r="3.9" fill="#fff" stroke="#555" stroke-width="0.45"/>
<circle cx="624.7" cy="235.5" r="0.35" fill="#555"/>
<circle cx="650" cy="238.7" r="2.9" fill="#fff" stroke="#555" stroke-width="0.45"/>
<circle cx="650" cy="238.7" r="0.35" fill="#555"/>
<circle cx="581.3" cy="230.2" r="2.4" fill="#fff" stroke="#555" stroke-width="0.45"/>
<circle cx="581.3" cy="230.2" r="0.35" fill="#555"/>
<circle cx="592.9" cy="257.2" r="3.4" fill="#fff" stroke="#555" stroke-width="0.45"/>
<circle cx="592.9" cy="257.2" r="0.35" fill="#555"/>
<circle cx="651.2" cy="273.6" r="3.9" fill="#fff" stroke="#555" stroke-width="0.45"/>
<circle cx="651.2" cy="273.6" r="0.35" fill="#555"/>
<circle cx="641.6" cy="280.8" r="2.4" fill="#fff" stroke="#555" stroke-width="0.45"/>
<circle cx="641.6" cy="280.8" r="0.35" fill="#555"/>
<circle cx="640.4" cy="288.1" r="1.9" fill="#fff" stroke="#555" stroke-width="0.45"/>
<circle cx="640.4" cy="288.1" r="0.35" fill="#555"/>
<circle cx="586.1" cy="233.9" r="1.2" fill="#fff" stroke="#555" stroke-width="0.45"/>
<circle cx="586.1" cy="233.9" r="0.35" fill="#555"/>
<path d="M618.9 246.7h.5M626.1 249h.5M620.2 228.6h.5M618.5 244.4h.5M631.6 241.1h.5M615.3 246.6h.5M611 244.2h.5M638.1 242.8h.5M642.2 245.8h.5M624.9 249.8h.5M654.3 238h.5M648.7 234.5h.5M635.7 228h.5M647 240.7h.5M623 242.2h.5M617.6 234.5h.5M638.4 246h.5M654 236h.5M612.5 244.5h.5M657.3 231.6h.5M608 232.8h.5M622.3 236h.5M598 228.6h.5M617 248.9h.5M620.7 246.4h.5M602.5 232.6h.5M643 229.8h.5M633.6 228.5h.5M641.3 250.8h.5M614.3 227.9h.5M633.7 238.4h.5M656.4 238.4h.5M621.2 240.6h.5M649 239.4h.5M620.8 251h.5M639.2 251.8h.5M628 239h.5M616.5 227.8h.5M654 228.3h.5M616.8 250.5h.5M637.2 247.3h.5M625.1 230.5h.5M624.5 244.1h.5M645.7 242.1h.5M624.3 241.8h.5M641.3 249.1h.5M617.8 247.3h.5M618.2 238h.5M621.6 245.3h.5M653.8 229.7h.5M651.4 244.4h.5M640.1 249.6h.5M620.8 231.2h.5M640.3 234.1h.5M625.9 242.7h.5M617.1 242h.5M623.1 256.2h.5M652.5 233h.5M643.6 238.9h.5M632.2 244.1h.5M641.5 236.5h.5M637.5 238.5h.5M644.3 242.1h.5M611.6 228h.5M651.6 243h.5M635.4 251.8h.5M651.3 239h.5M640.7 251.9h.5M617 240h.5M617.2 237.7h.5M620.2 252.3h.5M644.8 244h.5M635.2 236.5h.5M618.2 242.3h.5M607.6 235.1h.5M648.8 246.4h.5M622.5 246.3h.5M605.4 227.9h.5M616.6 244.5h.5M614.5 235.4h.5M641.5 238.3h.5M641.7 249.5h.5M617.8 228.7h.5M648.2 243.8h.5M631.1 247.7h.5M629.1 254.1h.5M633.5 239.6h.5M632.2 228.1h.5M633.9 239.7h.5M630.7 251.8h.5M613.6 235.1h.5M610.8 243.1h.5M654.5 232.8h.5M612.2 238.6h.5M635 238.1h.5M637 232.2h.5M640.5 231.7h.5M638.3 232.5h.5M620 229.4h.5M642.4 246.3h.5M631.4 242.6h.5M636 242.2h.5M619.2 252h.5M613 239.6h.5M615.8 240.4h.5M619.5 233.9h.5M616.5 250.7h.5M611.9 244.6h.5M643.7 231.2h.5M625 233.3h.5M635.4 247.4h.5M607.8 234.5h.5M613.1 237.3h.5M644.9 239.2h.5M623.1 233.6h.5M623.3 255.3h.5M613 241.9h.5M626.8 251h.5M640.3 249.3h.5M610.5 235.1h.5M632.3 229.3h.5M625.5 238.3h.5M643.7 231.2h.5M623.9 250.7h.5M650.1 237.1h.5M628.3 244.8h.5M622.7 251.5h.5M639.3 251.5h.5M609.8 242.4h.5M628.7 244.7h.5" stroke="#777" stroke-width="0.5" fill="none"/>
<g fill="#fff" stroke="#1e1e1e" stroke-width="0.62"><ellipse cx="595.9" cy="228.8" rx="0.6" ry="0.4"/><ellipse cx="598.8" cy="228.7" rx="1.2" ry="1"/><ellipse cx="601" cy="227.8" rx="1" ry="0.7"/><ellipse cx="602.6" cy="227.8" rx="0.7" ry="0.4"/><ellipse cx="604.1" cy="227.9" rx="0.6" ry="0.5"/><ellipse cx="606" cy="227.7" rx="0.9" ry="0.6"/><ellipse cx="607.9" cy="227.2" rx="0.6" ry="0.5"/><ellipse cx="610.2" cy="227" rx="0.7" ry="0.6"/><ellipse cx="611.9" cy="226.7" rx="1.2" ry="1.2"/><ellipse cx="614.1" cy="227.2" rx="0.6" ry="0.5"/><ellipse cx="615.4" cy="227" rx="1.2" ry="1.1"/><ellipse cx="618" cy="226.5" rx="1.2" ry="1"/><ellipse cx="619.5" cy="226.1" rx="1.2" ry="0.7"/><ellipse cx="621.2" cy="226.6" rx="0.7" ry="0.5"/><ellipse cx="624" cy="226.2" rx="0.8" ry="0.6"/><ellipse cx="625.3" cy="225.7" rx="0.6" ry="0.6"/><ellipse cx="628" cy="225.6" rx="0.8" ry="0.5"/><ellipse cx="629.1" cy="226.2" rx="1.2" ry="1"/><ellipse cx="632" cy="226" rx="0.7" ry="0.7"/><ellipse cx="634.5" cy="226.7" rx="0.9" ry="0.7"/><ellipse cx="636.8" cy="226.8" rx="1" ry="0.6"/><ellipse cx="639.3" cy="226.7" rx="1" ry="0.7"/><ellipse cx="641.6" cy="227" rx="0.6" ry="0.6"/><ellipse cx="644.5" cy="228" rx="0.8" ry="0.6"/><ellipse cx="646.1" cy="228.3" rx="0.7" ry="0.6"/><ellipse cx="648" cy="228.1" rx="1.2" ry="1"/><ellipse cx="650.1" cy="229.1" rx="1" ry="1"/></g>
<g fill="#fff" stroke="#1e1e1e" stroke-width="0.62"><ellipse cx="596.5" cy="234.2" rx="1" ry="1"/><ellipse cx="598" cy="235.3" rx="1" ry="0.9"/><ellipse cx="601.4" cy="236.7" rx="0.8" ry="0.6"/><ellipse cx="603.9" cy="238.2" rx="0.9" ry="0.9"/><ellipse cx="605.5" cy="240.3" rx="1.1" ry="1"/><ellipse cx="606.7" cy="241.2" rx="1.1" ry="0.7"/><ellipse cx="607.2" cy="243.8" rx="1" ry="0.7"/><ellipse cx="608.6" cy="246.2" rx="0.8" ry="0.7"/><ellipse cx="609.1" cy="248.3" rx="0.9" ry="0.8"/><ellipse cx="609.8" cy="249.9" rx="1" ry="0.6"/><ellipse cx="612.2" cy="250.6" rx="0.6" ry="0.6"/><ellipse cx="613.9" cy="252.4" rx="1" ry="1"/><ellipse cx="617" cy="253.3" rx="1" ry="0.8"/><ellipse cx="618.9" cy="254" rx="1.1" ry="0.7"/></g>
<g fill="#fff" stroke="#1e1e1e" stroke-width="0.62"><ellipse cx="634.1" cy="234.1" rx="0.8" ry="0.5"/><ellipse cx="635.3" cy="235.6" rx="0.9" ry="0.6"/><ellipse cx="637.2" cy="237.7" rx="1.1" ry="0.7"/><ellipse cx="638.9" cy="238.7" rx="1" ry="0.8"/><ellipse cx="639.4" cy="240.5" rx="0.9" ry="0.7"/><ellipse cx="639.4" cy="242.5" rx="1.1" ry="0.8"/><ellipse cx="638.4" cy="244.8" rx="1.2" ry="0.9"/><ellipse cx="637.6" cy="246.5" rx="0.8" ry="0.8"/><ellipse cx="637" cy="248.7" rx="0.9" ry="0.5"/><ellipse cx="636.5" cy="250.5" rx="0.6" ry="0.4"/><ellipse cx="634.3" cy="251.3" rx="0.8" ry="0.6"/><ellipse cx="633" cy="252.9" rx="1.1" ry="1.1"/><ellipse cx="630.9" cy="253" rx="0.9" ry="0.8"/><ellipse cx="629.9" cy="253.9" rx="0.6" ry="0.4"/></g>
<path d="M653.6 244.7 L665.7 244.7 L665.7 253.1 L653.6 253.1Z" fill="#fff" stroke="#222" stroke-width="1.0"/>
<text x="659.6" y="250.2" font-size="3.6" text-anchor="middle" fill="#222">20</text>
<path d="M646.4 243.5 L652.4 243.5 L652.4 253.1 L646.4 253.1Z" fill="none" stroke="#2a2a2a" stroke-width="0.9"/>
<path d="M645.2 243.5 L645.2 254.3 L642.8 261.6 L634.3 262.8 L634.3 290" fill="none" stroke="#1a1a1a" stroke-width="0.95"/>
<path d="M665.7 247.1 L666.9 253.1 L663.3 266.4 L636.7 265.2" fill="none" stroke="#1a1a1a" stroke-width="0.9"/>
<path d="M663.3 266.4 L661.3 290" fill="none" stroke="#1a1a1a" stroke-width="1.0"/>
<path d="M623.5 266.4 L634.3 266.4 L634.3 279.6 L623.5 279.6Z" fill="#fff" stroke="#222" stroke-width="0.9"/>
<text x="628.9" y="274.3" font-size="3.6" text-anchor="middle" fill="#222">21</text>
<path d="M621.1 268.8 L623.5 268.8 L623.5 277.2 L621.1 277.2" fill="none" stroke="#2a2a2a" stroke-width="0.5"/>
<path d="M607.8 242.3 L609 255.5 L613.9 254.3 L615.1 264 L609 265.2" fill="none" stroke="#1a1a1a" stroke-width="0.95"/>
<path d="M622.3 245.9 L630.7 245.9 L630.7 254.3 L622.3 254.3Z" fill="#fff" stroke="#222" stroke-width="0.8"/>
<path d="M624 247.6 L629 247.6 L629 252.7 L624 252.7Z" fill="none" stroke="#444" stroke-width="0.45"/>
<g fill="#fff" stroke="#1e1e1e" stroke-width="0.62"><ellipse cx="551.9" cy="266.8" rx="1.4" ry="1.2"/><ellipse cx="554.6" cy="267.3" rx="0.7" ry="0.6"/><ellipse cx="558.2" cy="267.7" rx="1.2" ry="1"/><ellipse cx="559.3" cy="268.2" rx="1.3" ry="1.1"/><ellipse cx="562.5" cy="268.9" rx="1.4" ry="1.1"/><ellipse cx="566.3" cy="268.3" rx="1" ry="0.9"/><ellipse cx="569.2" cy="268.4" rx="0.9" ry="0.7"/><ellipse cx="572.3" cy="267.6" rx="0.7" ry="0.6"/><ellipse cx="575.4" cy="266.5" rx="1.2" ry="1"/><ellipse cx="577.4" cy="266.8" rx="1.2" ry="0.9"/><ellipse cx="580.2" cy="267" rx="1.4" ry="1.3"/><ellipse cx="582.4" cy="267.1" rx="1.2" ry="1"/><ellipse cx="584.7" cy="268.4" rx="1.2" ry="0.9"/><ellipse cx="586.3" cy="268.8" rx="1" ry="0.7"/><ellipse cx="588.2" cy="270.6" rx="0.6" ry="0.5"/><ellipse cx="588.9" cy="273.2" rx="1.2" ry="0.8"/><ellipse cx="587.9" cy="274.8" rx="0.9" ry="0.8"/><ellipse cx="587.6" cy="277.3" rx="0.7" ry="0.6"/><ellipse cx="587" cy="279.9" rx="1.3" ry="1.3"/></g>
<g fill="#fff" stroke="#1e1e1e" stroke-width="0.62"><ellipse cx="555.6" cy="262.2" rx="0.7" ry="0.5"/><ellipse cx="557.6" cy="262.6" rx="0.7" ry="0.4"/><ellipse cx="560.5" cy="262.7" rx="1.1" ry="0.8"/><ellipse cx="563" cy="263" rx="0.7" ry="0.6"/><ellipse cx="566.2" cy="262.3" rx="0.9" ry="0.6"/><ellipse cx="568.8" cy="262.7" rx="1.1" ry="0.8"/><ellipse cx="572" cy="261.9" rx="0.6" ry="0.5"/><ellipse cx="575.1" cy="261.3" rx="0.5" ry="0.5"/><ellipse cx="577.8" cy="261.1" rx="1" ry="0.7"/></g>
<path d="M554.8 278.4 L554.7 277.5 L554.6 276.6 L554.7 275.7 L555 274.8 L555.8 274.1 L557.2 273.6 L559.6 273.3 L563 273.2 L566.8 273.2 L570.6 273.4 L574 273.7 L576.5 274.1 L578.1 274.7 L579.1 275.6 L579.7 276.6 L580 277.7 L580.1 278.7 L580.1 279.6 L580.1 280.5 L580 281.5 L579.7 282.4 L579.1 283.3 L578.1 284 L576.5 284.5 L574 284.7 L570.6 284.8 L566.8 284.7 L563 284.5 L559.6 284.2 L557.2 283.7 L555.8 283.1 L555 282.3 L554.7 281.3 L554.6 280.3 L554.7 279.3Z" fill="none" stroke="#333" stroke-width="0.72"/>
<g fill="#fff" stroke="#1e1e1e" stroke-width="0.62"><ellipse cx="554.6" cy="289.9" rx="1.1" ry="0.8"/></g>
<path d="M599.4 264 L601.8 290" fill="none" stroke="#1a1a1a" stroke-width="0.95"/>
<path d="M599.4 264 L597 266.4 L594.6 276" fill="none" stroke="#2a2a2a" stroke-width="0.6"/>
<circle cx="594.6" cy="271.2" r="2.2" fill="#fff" stroke="#555" stroke-width="0.45"/>
<circle cx="594.6" cy="271.2" r="0.35" fill="#555"/>
<circle cx="594.6" cy="277.2" r="1.9" fill="#fff" stroke="#555" stroke-width="0.45"/>
<circle cx="594.6" cy="277.2" r="0.35" fill="#555"/>
<g fill="#fff" stroke="#1e1e1e" stroke-width="0.62"><ellipse cx="640.3" cy="270.2" rx="0.6" ry="0.5"/><ellipse cx="642.3" cy="269.3" rx="0.5" ry="0.4"/><ellipse cx="644.9" cy="268.9" rx="0.7" ry="0.5"/><ellipse cx="646.7" cy="269.7" rx="1" ry="0.7"/><ellipse cx="648.8" cy="269.9" rx="0.8" ry="0.7"/><ellipse cx="649.7" cy="271.1" rx="1" ry="0.7"/><ellipse cx="650.9" cy="274.1" rx="1" ry="0.8"/><ellipse cx="651.6" cy="276.5" rx="0.7" ry="0.7"/><ellipse cx="651.4" cy="279.1" rx="0.6" ry="0.6"/><ellipse cx="651.5" cy="280.5" rx="0.8" ry="0.7"/><ellipse cx="650.3" cy="282.1" rx="0.7" ry="0.5"/><ellipse cx="648.6" cy="283.8" rx="0.7" ry="0.6"/><ellipse cx="645.9" cy="284.9" rx="0.7" ry="0.5"/><ellipse cx="644.3" cy="284.9" rx="0.9" ry="0.6"/><ellipse cx="642.4" cy="283.7" rx="0.6" ry="0.6"/><ellipse cx="640.9" cy="281.8" rx="1" ry="0.6"/><ellipse cx="639.9" cy="277.7" rx="0.7" ry="0.7"/><ellipse cx="639.5" cy="276.2" rx="0.6" ry="0.4"/><ellipse cx="638.7" cy="273" rx="0.8" ry="0.7"/></g>
<g fill="#fff" stroke="#1e1e1e" stroke-width="0.62"><ellipse cx="334.6" cy="243.5" rx="1" ry="0.6"/><ellipse cx="334.8" cy="244.1" rx="0.7" ry="0.6"/><ellipse cx="334.3" cy="246.5" rx="1.2" ry="1"/><ellipse cx="334.6" cy="248.3" rx="0.7" ry="0.7"/><ellipse cx="334.7" cy="249.9" rx="1.1" ry="0.8"/><ellipse cx="334.4" cy="252.7" rx="1.1" ry="1"/><ellipse cx="334.7" cy="255.4" rx="0.6" ry="0.4"/><ellipse cx="335" cy="256.8" rx="0.8" ry="0.7"/><ellipse cx="334.4" cy="259.1" rx="0.8" ry="0.6"/><ellipse cx="334.7" cy="262.1" rx="1.2" ry="0.9"/><ellipse cx="334.2" cy="263.7" rx="0.9" ry="0.7"/><ellipse cx="334" cy="264.9" rx="1" ry="0.7"/><ellipse cx="334.5" cy="267.5" rx="1.2" ry="1"/><ellipse cx="335" cy="269.2" rx="0.8" ry="0.7"/><ellipse cx="335.2" cy="270.5" rx="1.1" ry="0.7"/><ellipse cx="335.5" cy="272.5" rx="1.1" ry="0.8"/><ellipse cx="335.5" cy="273.9" rx="1.1" ry="1.1"/><ellipse cx="335.8" cy="276.9" rx="1.1" ry="1"/><ellipse cx="336.4" cy="279.3" rx="0.8" ry="0.7"/><ellipse cx="335.5" cy="280.2" rx="0.9" ry="0.8"/><ellipse cx="335.6" cy="283.8" rx="1.1" ry="1"/><ellipse cx="335.1" cy="286.4" rx="0.6" ry="0.5"/><ellipse cx="335.4" cy="290.6" rx="0.8" ry="0.6"/><ellipse cx="334.1" cy="293.6" rx="0.6" ry="0.5"/><ellipse cx="334" cy="295.3" rx="0.9" ry="0.5"/><ellipse cx="333.9" cy="298.5" rx="1.2" ry="0.9"/><ellipse cx="334" cy="301.6" rx="1" ry="0.8"/><ellipse cx="333.7" cy="303.1" rx="1.2" ry="0.8"/><ellipse cx="333.8" cy="304.2" rx="0.7" ry="0.7"/></g>
<g fill="#fff" stroke="#1e1e1e" stroke-width="0.62"><ellipse cx="315" cy="249.8" rx="0.4" ry="0.4"/><ellipse cx="314.8" cy="251.4" rx="0.3" ry="0.3"/><ellipse cx="314.5" cy="253.2" rx="0.5" ry="0.4"/><ellipse cx="314.4" cy="254.9" rx="0.4" ry="0.3"/><ellipse cx="314.4" cy="257" rx="0.6" ry="0.3"/><ellipse cx="314.2" cy="258.6" rx="0.5" ry="0.4"/><ellipse cx="314" cy="260.7" rx="0.6" ry="0.3"/><ellipse cx="313.7" cy="262.6" rx="0.6" ry="0.5"/><ellipse cx="313.6" cy="264.4" rx="0.6" ry="0.5"/><ellipse cx="313.7" cy="265.7" rx="0.6" ry="0.5"/><ellipse cx="314.1" cy="267" rx="0.6" ry="0.6"/><ellipse cx="314.1" cy="268.6" rx="0.5" ry="0.3"/><ellipse cx="314.1" cy="270.1" rx="0.7" ry="0.4"/><ellipse cx="314.6" cy="272.3" rx="0.3" ry="0.3"/><ellipse cx="315" cy="274.7" rx="0.4" ry="0.3"/><ellipse cx="314.8" cy="276.2" rx="0.4" ry="0.2"/></g>
<path d="M351.2 266.3 L351 267.9 L350.7 270.2 L350.4 272.9 L350 275.7 L349.6 278.5 L349.3 281 L348.9 283.1 L348.3 285.2 L347.8 287.2 L347.4 289.1 L347 291 L346.9 293 L346.9 295.1 L347 297.3 L347.2 299.6 L347.6 301.7 L348.1 303.5 L348.8 305.1 L349.7 306.3 L350.9 307.2 L352.2 308 L353.6 308.5 L354.9 308.7 L356 308.7 L357.1 308.3 L358.2 307.6 L359.2 306.6 L360.1 305.5 L360.9 304.1 L361.3 302.7 L361.5 301 L361.4 299 L361.1 296.9 L360.6 294.7 L360.2 292.5 L359.9 290.6 L359.6 288.8 L359.2 287.2 L358.8 285.6 L358.4 284 L358.1 282.5 L358 281 L358 279.5 L358.2 278 L358.6 276.5 L358.8 275.1 L359 273.8 L358.9 272.5 L358.5 271.3 L357.8 270 L357 268.9 L356.2 267.8 L355.5 266.9 L355.1 266.3" fill="none" stroke="#333" stroke-width="0.67"/>
<g fill="#fff" stroke="#1e1e1e" stroke-width="0.62"><ellipse cx="343.1" cy="242.4" rx="1.2" ry="1.1"/><ellipse cx="343.9" cy="244.7" rx="1.1" ry="0.8"/><ellipse cx="344" cy="246.5" rx="0.6" ry="0.6"/><ellipse cx="344" cy="248.4" rx="1" ry="0.8"/><ellipse cx="344.7" cy="249.9" rx="0.7" ry="0.7"/><ellipse cx="344.3" cy="251" rx="1.4" ry="1.1"/><ellipse cx="344.4" cy="253.2" rx="1" ry="0.7"/><ellipse cx="344" cy="255.7" rx="1.4" ry="1.3"/><ellipse cx="344" cy="258.6" rx="0.8" ry="0.6"/><ellipse cx="342.8" cy="262" rx="1" ry="1"/><ellipse cx="341.9" cy="264.1" rx="1.3" ry="1"/><ellipse cx="341.8" cy="267.9" rx="1.2" ry="1.2"/><ellipse cx="341.3" cy="270.3" rx="1.1" ry="0.7"/><ellipse cx="341.9" cy="273" rx="0.9" ry="0.6"/><ellipse cx="342.3" cy="276.1" rx="1" ry="0.7"/><ellipse cx="342" cy="279.2" rx="0.9" ry="0.7"/><ellipse cx="343" cy="281.6" rx="1" ry="0.7"/><ellipse cx="342.7" cy="285" rx="1.4" ry="1.2"/><ellipse cx="343.1" cy="286.6" rx="0.9" ry="0.8"/><ellipse cx="343.3" cy="288.5" rx="1" ry="0.9"/><ellipse cx="342.8" cy="290.1" rx="0.9" ry="0.7"/><ellipse cx="343.5" cy="292" rx="0.6" ry="0.5"/><ellipse cx="342.9" cy="293.4" rx="1.2" ry="1"/><ellipse cx="343.8" cy="295.5" rx="0.6" ry="0.6"/><ellipse cx="343.6" cy="297" rx="1.3" ry="1"/><ellipse cx="344" cy="299" rx="1.2" ry="1.2"/><ellipse cx="345" cy="301.9" rx="1.2" ry="1"/><ellipse cx="346.3" cy="305" rx="1.1" ry="1.1"/><ellipse cx="348" cy="306.9" rx="1.1" ry="0.9"/><ellipse cx="349.4" cy="309.9" rx="1.3" ry="0.9"/><ellipse cx="351.3" cy="311.4" rx="1.2" ry="1.1"/><ellipse cx="353.7" cy="312.1" rx="0.6" ry="0.4"/><ellipse cx="355.5" cy="312.4" rx="0.8" ry="0.6"/><ellipse cx="357.4" cy="311.8" rx="0.7" ry="0.5"/><ellipse cx="360" cy="310.5" rx="1.2" ry="1"/><ellipse cx="361.5" cy="309.5" rx="0.7" ry="0.5"/><ellipse cx="362.2" cy="308.3" rx="1.1" ry="0.9"/><ellipse cx="363.2" cy="305.4" rx="1.3" ry="1.2"/><ellipse cx="363.1" cy="303.3" rx="1.1" ry="1"/><ellipse cx="363" cy="301" rx="1.1" ry="1.1"/><ellipse cx="363.6" cy="299" rx="0.9" ry="0.7"/></g>
<g fill="#fff" stroke="#1e1e1e" stroke-width="0.62"><ellipse cx="362.5" cy="268.9" rx="0.6" ry="0.4"/></g>
<circle cx="331.9" cy="264.1" r="2.4" fill="#fff" stroke="#555" stroke-width="0.45"/>
<circle cx="331.9" cy="264.1" r="0.35" fill="#555"/>
<circle cx="334.8" cy="264.1" r="1.9" fill="#fff" stroke="#555" stroke-width="0.45"/>
<circle cx="334.8" cy="264.1" r="0.35" fill="#555"/>
<circle cx="344" cy="271.3" r="3.4" fill="#fff" stroke="#555" stroke-width="0.45"/>
<circle cx="344" cy="271.3" r="0.35" fill="#555"/>
<circle cx="342.8" cy="278.6" r="2.9" fill="#fff" stroke="#555" stroke-width="0.45"/>
<circle cx="342.8" cy="278.6" r="0.35" fill="#555"/>
<circle cx="346.9" cy="267" r="2.4" fill="#fff" stroke="#555" stroke-width="0.45"/>
<circle cx="346.9" cy="267" r="0.35" fill="#555"/>
<circle cx="333.1" cy="256.9" r="2.2" fill="#fff" stroke="#555" stroke-width="0.45"/>
<circle cx="333.1" cy="256.9" r="0.35" fill="#555"/>
<circle cx="330.7" cy="303.9" r="1.9" fill="#fff" stroke="#555" stroke-width="0.45"/>
<circle cx="330.7" cy="303.9" r="0.35" fill="#555"/>
<circle cx="345.2" cy="243.6" r="1.9" fill="#fff" stroke="#555" stroke-width="0.45"/>
<circle cx="345.2" cy="243.6" r="0.35" fill="#555"/>
<circle cx="358.9" cy="285.8" r="2.4" fill="#fff" stroke="#555" stroke-width="0.45"/>
<circle cx="358.9" cy="285.8" r="0.35" fill="#555"/>
<text x="358.9" y="287.1" font-size="3" text-anchor="middle" fill="#222">30</text>
<g fill="#fff" stroke="#1e1e1e" stroke-width="0.62"><ellipse cx="365.4" cy="281.3" rx="0.8" ry="0.7"/><ellipse cx="367.2" cy="282.4" rx="0.9" ry="0.7"/><ellipse cx="368.2" cy="284" rx="0.8" ry="0.6"/><ellipse cx="370.5" cy="284.9" rx="0.8" ry="0.7"/><ellipse cx="370.6" cy="287.1" rx="0.7" ry="0.7"/><ellipse cx="371.2" cy="288.7" rx="1.3" ry="0.8"/><ellipse cx="370.7" cy="291.6" rx="0.7" ry="0.5"/><ellipse cx="369.8" cy="294.3" rx="1.2" ry="0.9"/><ellipse cx="369.8" cy="296.4" rx="0.7" ry="0.7"/><ellipse cx="368.9" cy="298.9" rx="1.2" ry="0.8"/><ellipse cx="368.5" cy="301.1" rx="0.7" ry="0.6"/><ellipse cx="367.2" cy="303.1" rx="0.9" ry="0.8"/><ellipse cx="366.2" cy="305.7" rx="0.9" ry="0.6"/><ellipse cx="365.3" cy="307.5" rx="0.8" ry="0.7"/></g>
<g fill="#fff" stroke="#1e1e1e" stroke-width="0.62"><ellipse cx="365.4" cy="290.1" rx="0.5" ry="0.5"/><ellipse cx="364.2" cy="291" rx="0.7" ry="0.5"/><ellipse cx="363.4" cy="293.5" rx="1" ry="1"/><ellipse cx="362.9" cy="295.3" rx="1.1" ry="1"/><ellipse cx="363.6" cy="297" rx="0.7" ry="0.6"/><ellipse cx="364.7" cy="299.3" rx="0.8" ry="0.7"/><ellipse cx="366.2" cy="301.5" rx="0.6" ry="0.5"/></g>
<path d="M443.4 240 L443.4 247.2 L466.3 247.2 L466.3 240" fill="none" stroke="#2a2a2a" stroke-width="0.8"/>
<path d="M428.4 252.5 L437.3 252.5 L437.3 270.8" fill="none" stroke="#2a2a2a" stroke-width="0.7"/>
<path d="M432.5 253.3 L432.5 270.1" fill="none" stroke="#2a2a2a" stroke-width="0.4"/>
<path d="M439.8 252 L469.9 252" fill="none" stroke="#2a2a2a" stroke-width="0.5"/>
<path d="M443.4 252 L443.4 270.8" fill="none" stroke="#2a2a2a" stroke-width="0.7"/>
<path d="M469.9 240 L469.9 270.1 L478.3 270.8" fill="none" stroke="#1e1e1e" stroke-width="0.95"/>
<g fill="#fff" stroke="#1e1e1e" stroke-width="0.62"><ellipse cx="449" cy="260.2" rx="0.6" ry="0.4"/><ellipse cx="450.7" cy="259" rx="1.1" ry="0.7"/><ellipse cx="453" cy="258" rx="1.1" ry="0.9"/><ellipse cx="454.5" cy="257.5" rx="0.7" ry="0.5"/><ellipse cx="456.3" cy="257" rx="1" ry="0.6"/><ellipse cx="457.8" cy="258" rx="0.8" ry="0.7"/><ellipse cx="460.5" cy="259" rx="1" ry="0.9"/><ellipse cx="462.3" cy="260.5" rx="0.6" ry="0.5"/><ellipse cx="463.4" cy="261.1" rx="1.1" ry="0.8"/><ellipse cx="464.7" cy="263.1" rx="0.9" ry="0.8"/><ellipse cx="465.2" cy="264.5" rx="0.9" ry="0.6"/><ellipse cx="464.6" cy="266.9" rx="0.8" ry="0.6"/></g>
<g fill="#fff" stroke="#1e1e1e" stroke-width="0.62"><ellipse cx="450.1" cy="265.5" rx="0.4" ry="0.4"/><ellipse cx="451.1" cy="265.1" rx="0.7" ry="0.7"/><ellipse cx="453.6" cy="264.1" rx="0.5" ry="0.4"/><ellipse cx="455.6" cy="264.2" rx="0.8" ry="0.7"/><ellipse cx="457.1" cy="264.7" rx="0.5" ry="0.4"/><ellipse cx="459.4" cy="266.2" rx="0.6" ry="0.5"/><ellipse cx="461.2" cy="266.6" rx="0.8" ry="0.8"/></g>
<path d="M503.6 240 L503.6 268.4 L492.8 269.4 L492.8 276.1 L479.5 276.1 L479.5 270.1" fill="none" stroke="#1e1e1e" stroke-width="0.95"/>
<g fill="#fff" stroke="#1e1e1e" stroke-width="0.62"><ellipse cx="475.1" cy="255.2" rx="0.7" ry="0.6"/><ellipse cx="476.7" cy="256.5" rx="1" ry="0.9"/><ellipse cx="478.8" cy="258.5" rx="0.8" ry="0.5"/><ellipse cx="481.2" cy="259.8" rx="0.6" ry="0.4"/><ellipse cx="483" cy="260.3" rx="0.7" ry="0.5"/><ellipse cx="485.4" cy="260.6" rx="1.2" ry="0.8"/><ellipse cx="489.3" cy="260.4" rx="1" ry="0.9"/><ellipse cx="492.1" cy="260.3" rx="0.8" ry="0.6"/><ellipse cx="494.6" cy="259" rx="1.1" ry="0.8"/><ellipse cx="496.1" cy="258.6" rx="1.1" ry="0.8"/><ellipse cx="497.1" cy="256.1" rx="0.9" ry="0.8"/><ellipse cx="498.8" cy="254.5" rx="0.7" ry="0.6"/><ellipse cx="498.7" cy="251.6" rx="0.8" ry="0.7"/><ellipse cx="500.2" cy="250" rx="1.2" ry="1.2"/></g>
<circle cx="476.6" cy="247.7" r="2.4" fill="#fff" stroke="#555" stroke-width="0.45"/>
<circle cx="476.6" cy="247.7" r="0.35" fill="#555"/>
<path d="M480.7 278.6 L501.2 278.6 L501.2 291.8 L480.7 291.8Z" fill="none" stroke="#2a2a2a" stroke-width="0.9"/>
<path d="M485.5 281 L496.4 281 L496.4 289.4 L485.5 289.4Z" fill="none" stroke="#2a2a2a" stroke-width="0.5"/>
<path d="M483.1 272.5 L483.1 312.3" fill="none" stroke="#2a2a2a" stroke-width="0.6"/>
<path d="M480.7 294.2 L483.1 294.2" fill="none" stroke="#2a2a2a" stroke-width="0.5"/>
<path d="M501.2 278.6 L506 278.6 L506 291.8 L501.2 291.8" fill="none" stroke="#2a2a2a" stroke-width="0.6"/>
<g fill="#fff" stroke="#1e1e1e" stroke-width="0.62"><ellipse cx="489.4" cy="299.3" rx="1" ry="0.9"/><ellipse cx="491.1" cy="297.8" rx="1.1" ry="0.8"/><ellipse cx="493.1" cy="297.9" rx="0.8" ry="0.6"/><ellipse cx="495.8" cy="297.3" rx="0.8" ry="0.5"/><ellipse cx="497.4" cy="296.8" rx="0.6" ry="0.5"/><ellipse cx="499.2" cy="297.3" rx="0.6" ry="0.5"/><ellipse cx="501.6" cy="297.7" rx="0.8" ry="0.7"/><ellipse cx="503.7" cy="297.2" rx="1.3" ry="1.1"/><ellipse cx="505.4" cy="297.3" rx="0.9" ry="0.6"/><ellipse cx="506.9" cy="298.5" rx="1" ry="0.7"/><ellipse cx="508.5" cy="299" rx="0.6" ry="0.4"/><ellipse cx="510.4" cy="299.6" rx="1" ry="0.7"/><ellipse cx="512.2" cy="300.6" rx="1.1" ry="0.9"/><ellipse cx="513.4" cy="301.7" rx="0.9" ry="0.8"/><ellipse cx="513.7" cy="303.4" rx="1.1" ry="0.8"/><ellipse cx="513.2" cy="305.3" rx="0.8" ry="0.5"/><ellipse cx="512.4" cy="306.9" rx="0.8" ry="0.6"/><ellipse cx="511.4" cy="307.9" rx="1.4" ry="1"/><ellipse cx="509.8" cy="308.6" rx="1" ry="0.8"/><ellipse cx="506.8" cy="308.8" rx="0.9" ry="0.6"/><ellipse cx="504.2" cy="309.5" rx="0.8" ry="0.7"/><ellipse cx="502.5" cy="309.8" rx="0.7" ry="0.6"/><ellipse cx="500.5" cy="310.1" rx="0.9" ry="0.6"/><ellipse cx="497.8" cy="310.3" rx="1" ry="0.8"/><ellipse cx="495.5" cy="310.4" rx="0.8" ry="0.5"/><ellipse cx="494.4" cy="309.2" rx="0.8" ry="0.6"/><ellipse cx="492.5" cy="309.4" rx="0.9" ry="0.9"/><ellipse cx="490.5" cy="307.8" rx="0.9" ry="0.5"/><ellipse cx="489.8" cy="306.9" rx="0.8" ry="0.5"/><ellipse cx="489" cy="304.7" rx="0.8" ry="0.6"/><ellipse cx="487.5" cy="302.3" rx="0.7" ry="0.6"/><ellipse cx="487.8" cy="301.2" rx="0.6" ry="0.4"/></g>
<path d="M491.1 302.2 L491.6 301.6 L492.5 301.1 L493.7 300.7 L494.9 300.3 L496.3 300 L497.6 299.8 L498.9 299.6 L500.4 299.6 L501.9 299.7 L503.4 299.8 L504.8 300 L506 300.2 L507.1 300.6 L508 301 L508.8 301.5 L509.5 302.1 L510 302.6 L510.4 303.1 L510.5 303.6 L510.5 304.1 L510.4 304.7 L510.1 305.2 L509.6 305.6 L508.9 306 L508 306.4 L506.8 306.7 L505.5 307 L504 307.2 L502.6 307.4 L501.2 307.5 L499.9 307.5 L498.4 307.4 L497 307.2 L495.7 307 L494.5 306.7 L493.5 306.3 L492.7 305.7 L492 305.1 L491.4 304.3 L491 303.5 L490.9 302.8Z" fill="none" stroke="#333" stroke-width="0.62"/>
<path d="M506 266.5 L506.3 267.5 L506.8 268.9 L507.4 270.6 L507.9 272.4 L508.3 274.3 L508.4 276.1 L508.1 278.2 L507.4 280.4 L506.5 282.8 L505.8 285 L505.5 286.9 L506 288.2 L507.6 288.9 L510.1 289.1 L513.1 288.9 L516.1 288.6 L518.7 288.3 L520.5 288.2" fill="none" stroke="#333" stroke-width="0.62"/>
<g fill="#fff" stroke="#1e1e1e" stroke-width="0.62"><ellipse cx="510.6" cy="267.7" rx="0.8" ry="0.7"/><ellipse cx="512.3" cy="266.6" rx="1.1" ry="1"/><ellipse cx="514.8" cy="266.5" rx="1" ry="0.8"/><ellipse cx="516.3" cy="266.4" rx="1.1" ry="1"/><ellipse cx="518.6" cy="266.3" rx="1.1" ry="0.9"/><ellipse cx="520" cy="266.8" rx="1.4" ry="1"/><ellipse cx="521.4" cy="267.2" rx="0.7" ry="0.6"/><ellipse cx="523.1" cy="268.1" rx="0.8" ry="0.5"/><ellipse cx="524.6" cy="268.7" rx="1.1" ry="0.8"/><ellipse cx="525.5" cy="271" rx="0.6" ry="0.5"/><ellipse cx="525.8" cy="271.9" rx="1.1" ry="0.7"/><ellipse cx="526" cy="274.4" rx="1" ry="0.8"/><ellipse cx="524.7" cy="276.2" rx="0.8" ry="0.7"/><ellipse cx="524" cy="277.6" rx="0.9" ry="0.8"/><ellipse cx="523.6" cy="279.7" rx="1.2" ry="0.9"/><ellipse cx="522.4" cy="281.2" rx="0.6" ry="0.5"/><ellipse cx="521.2" cy="282.1" rx="0.7" ry="0.5"/><ellipse cx="520.5" cy="283.4" rx="0.6" ry="0.4"/><ellipse cx="518.8" cy="284.7" rx="0.6" ry="0.6"/><ellipse cx="517" cy="285.2" rx="1.3" ry="0.8"/><ellipse cx="515.1" cy="285.2" rx="0.8" ry="0.6"/><ellipse cx="513.7" cy="285.3" rx="0.7" ry="0.5"/><ellipse cx="512.3" cy="284.2" rx="1" ry="0.8"/><ellipse cx="511.2" cy="283.7" rx="0.8" ry="0.8"/><ellipse cx="510.1" cy="281" rx="0.9" ry="0.7"/><ellipse cx="510.2" cy="280.1" rx="1.4" ry="1.3"/><ellipse cx="509.6" cy="278.4" rx="1" ry="0.8"/><ellipse cx="509.6" cy="276" rx="1.3" ry="1"/><ellipse cx="508.8" cy="274.2" rx="1.2" ry="0.8"/><ellipse cx="509.5" cy="273.3" rx="0.7" ry="0.6"/><ellipse cx="509.4" cy="271.4" rx="1" ry="0.8"/></g>
<path d="M513.3 271.3 L514 270.6 L514.9 270.2 L516.1 269.9 L517.3 269.8 L518.4 269.9 L519.3 270.1 L520 270.6 L520.6 271.2 L521.1 272.1 L521.5 273 L521.7 274 L521.7 274.9 L521.4 276 L521 277.1 L520.3 278.3 L519.6 279.4 L518.8 280.4 L518.1 281 L517.3 281.3 L516.4 281.4 L515.4 281.3 L514.5 281 L513.8 280.5 L513.3 279.8 L512.9 278.7 L512.7 277.2 L512.6 275.5 L512.6 273.9 L512.8 272.4Z" fill="none" stroke="#333" stroke-width="0.62"/>
<path d="M520.5 260.5 L531.3 258.1 L532.5 268.9 L531.3 285.8" fill="none" stroke="#2a2a2a" stroke-width="0.9"/>
<path d="M503.6 264.1 L520.5 260.5" fill="none" stroke="#2a2a2a" stroke-width="0.8"/>
<circle cx="528.9" cy="258.1" r="2.4" fill="#fff" stroke="#555" stroke-width="0.45"/>
<circle cx="528.9" cy="258.1" r="0.35" fill="#555"/>
<circle cx="526.5" cy="271.3" r="1.9" fill="#fff" stroke="#555" stroke-width="0.45"/>
<circle cx="526.5" cy="271.3" r="0.35" fill="#555"/>
<circle cx="525.3" cy="276.1" r="1.9" fill="#fff" stroke="#555" stroke-width="0.45"/>
<circle cx="525.3" cy="276.1" r="0.35" fill="#555"/>
<path d="M534.9 260.5 L554.2 259.3 L560 264.1" fill="none" stroke="#2a2a2a" stroke-width="0.6"/>
<g fill="#fff" stroke="#1e1e1e" stroke-width="0.62"><ellipse cx="544.1" cy="264.2" rx="1" ry="0.7"/><ellipse cx="546.8" cy="264.4" rx="0.9" ry="0.6"/><ellipse cx="549.2" cy="265.6" rx="1.3" ry="1.2"/><ellipse cx="551" cy="266.3" rx="0.8" ry="0.7"/><ellipse cx="552.5" cy="267.3" rx="0.8" ry="0.5"/><ellipse cx="554.2" cy="269.1" rx="0.8" ry="0.6"/><ellipse cx="555.3" cy="270.9" rx="1.1" ry="0.7"/><ellipse cx="556.5" cy="273.1" rx="1.2" ry="1.1"/><ellipse cx="556.8" cy="275.6" rx="1.3" ry="1.2"/><ellipse cx="556.9" cy="276.9" rx="0.6" ry="0.6"/><ellipse cx="555.1" cy="278.8" rx="1.2" ry="0.8"/><ellipse cx="553.9" cy="280.2" rx="1.2" ry="0.8"/><ellipse cx="552.4" cy="281.5" rx="1.2" ry="1.1"/><ellipse cx="550.7" cy="283" rx="0.7" ry="0.7"/><ellipse cx="548.8" cy="283.9" rx="1.1" ry="0.9"/><ellipse cx="545.8" cy="284" rx="1.1" ry="0.8"/><ellipse cx="543.2" cy="284.9" rx="1.2" ry="1.1"/><ellipse cx="540.1" cy="284.7" rx="1" ry="0.9"/><ellipse cx="538.3" cy="284.4" rx="1.4" ry="1"/></g>
<path d="M539.8 268.9 L540.9 269 L542.5 269 L544.4 269.1 L546.3 269.3 L548 269.6 L549.4 270.1 L550.5 270.9 L551.4 271.8 L552.2 272.9 L552.7 274 L553 275.2 L553 276.1 L552.6 277.1 L551.8 278 L550.8 278.9 L549.5 279.8 L548.2 280.5 L547 281 L545.6 281.2 L544 281.3 L542.4 281.3 L540.8 281.1 L539.5 281 L538.6 281" fill="none" stroke="#333" stroke-width="0.5700000000000001"/>
<path d="M534.9 260.5 L534.9 285.8" fill="none" stroke="#2a2a2a" stroke-width="0.8"/>
<path d="M433 284.8 L419.3 325.5" fill="none" stroke="#333" stroke-width="0.6"/>
<path d="M420.7 304.6 L430.4 308.4" fill="none" stroke="#333" stroke-width="0.6"/>
<path d="M430.8 286.3 L434.2 287.2 L431.8 289.6" fill="none" stroke="#333" stroke-width="0.5"/>
<text x="432" y="286.6" font-size="3" text-anchor="middle" fill="#222">北</text>
<path d="M455.9 334.5 L455.9 336.9 L513.3 336.9 L513.3 334.5" fill="none" stroke="#333" stroke-width="0.6"/>
<path d="M465.1 335.2 L465.1 336.9" fill="none" stroke="#333" stroke-width="0.5"/>
<path d="M474.2 335.2 L474.2 336.9" fill="none" stroke="#333" stroke-width="0.5"/>
<path d="M492.8 335.2 L492.8 336.9" fill="none" stroke="#333" stroke-width="0.5"/>
<text x="455.9" y="334" font-size="3.4" text-anchor="middle" fill="#222" font-weight="bold">0</text>
<text x="465.1" y="334" font-size="3.4" text-anchor="middle" fill="#222" font-weight="bold">5</text>
<text x="474.2" y="334" font-size="3.4" text-anchor="middle" fill="#222" font-weight="bold">10</text>
<text x="492.8" y="334" font-size="3.4" text-anchor="middle" fill="#222" font-weight="bold">20</text>
<text x="511.3" y="334" font-size="3.4" text-anchor="middle" fill="#222" font-weight="bold">30m</text>
<path d="M553.6 240 L553.6 256.4 L582.5 256.4 L582.5 240" fill="none" stroke="#2a2a2a" stroke-width="0.6"/>
<path d="M556.5 240 L556.5 254 L579.6 254 L579.6 240" fill="none" stroke="#2a2a2a" stroke-width="1.0"/>
<g fill="#fff" stroke="#1e1e1e" stroke-width="0.62"><ellipse cx="554.1" cy="269.9" rx="0.7" ry="0.5"/><ellipse cx="556.1" cy="269.4" rx="0.7" ry="0.5"/><ellipse cx="559" cy="268.5" rx="1.3" ry="1.1"/><ellipse cx="561.8" cy="268" rx="0.9" ry="0.9"/><ellipse cx="564.3" cy="268.1" rx="1.1" ry="0.9"/><ellipse cx="567.4" cy="267.4" rx="1" ry="0.6"/><ellipse cx="568.7" cy="268.1" rx="1.4" ry="1"/><ellipse cx="570" cy="268.3" rx="1.1" ry="0.9"/><ellipse cx="571.7" cy="267.9" rx="1" ry="0.7"/><ellipse cx="573.2" cy="268" rx="1.3" ry="1"/><ellipse cx="575.3" cy="268.7" rx="1.1" ry="0.8"/><ellipse cx="577.9" cy="269.6" rx="1.5" ry="1.2"/><ellipse cx="579.8" cy="270.7" rx="0.9" ry="0.7"/><ellipse cx="582.4" cy="271.8" rx="0.8" ry="0.6"/><ellipse cx="584.7" cy="274" rx="1" ry="0.7"/><ellipse cx="585.9" cy="275.3" rx="1" ry="0.8"/><ellipse cx="587.5" cy="278" rx="1.4" ry="1.3"/><ellipse cx="589.2" cy="279.8" rx="1" ry="0.7"/><ellipse cx="590.3" cy="282" rx="1" ry="0.8"/><ellipse cx="590.4" cy="284.6" rx="1.2" ry="0.8"/><ellipse cx="591.2" cy="287.4" rx="0.8" ry="0.7"/><ellipse cx="591.3" cy="289.5" rx="1.1" ry="1.1"/><ellipse cx="590.2" cy="291.6" rx="0.8" ry="0.7"/><ellipse cx="589.5" cy="293.4" rx="1" ry="0.7"/><ellipse cx="588.5" cy="295.1" rx="1.4" ry="1.1"/><ellipse cx="586" cy="297" rx="1.1" ry="0.9"/><ellipse cx="585" cy="298.1" rx="1.5" ry="1.1"/><ellipse cx="583.2" cy="297.4" rx="0.8" ry="0.7"/><ellipse cx="581.2" cy="296.5" rx="0.8" ry="0.5"/><ellipse cx="579.1" cy="295.4" rx="1.4" ry="1.4"/><ellipse cx="576.8" cy="294.1" rx="1.4" ry="1"/><ellipse cx="574.9" cy="292.1" rx="1.1" ry="0.8"/><ellipse cx="572.8" cy="291.7" rx="0.9" ry="0.7"/><ellipse cx="571.5" cy="290.8" rx="1.2" ry="0.8"/><ellipse cx="569.7" cy="290.3" rx="1.5" ry="1.1"/><ellipse cx="567.5" cy="288.8" rx="1.4" ry="1"/><ellipse cx="565.5" cy="289" rx="1.3" ry="1.2"/><ellipse cx="563.9" cy="287.6" rx="1.4" ry="1.3"/><ellipse cx="561.6" cy="286.7" rx="0.7" ry="0.5"/><ellipse cx="558.8" cy="286.4" rx="1" ry="1"/><ellipse cx="556.9" cy="285.7" rx="0.9" ry="0.7"/><ellipse cx="555.3" cy="284.6" rx="0.7" ry="0.5"/><ellipse cx="554.2" cy="282.8" rx="0.9" ry="0.8"/><ellipse cx="553.3" cy="279.6" rx="1" ry="0.6"/><ellipse cx="552.4" cy="276.9" rx="1" ry="0.6"/><ellipse cx="551.5" cy="274.1" rx="1.4" ry="0.9"/><ellipse cx="551.8" cy="272.3" rx="0.7" ry="0.6"/></g>
<path d="M554.8 276.1 L554.8 275.4 L555 274.8 L555.3 274.3 L556 273.8 L557 273.5 L558.4 273.3 L560.6 273.1 L563.5 273 L566.8 273 L570.1 273.1 L573.1 273.4 L575.3 273.7 L576.8 274.3 L577.9 275 L578.6 275.9 L579.1 276.8 L579.3 277.7 L579.4 278.6 L579.4 279.4 L579.4 280.4 L579.1 281.3 L578.5 282.2 L577.5 282.9 L576 283.4 L573.8 283.6 L570.7 283.7 L567.2 283.6 L563.8 283.3 L560.7 282.9 L558.4 282.4 L556.9 281.6 L555.9 280.6 L555.3 279.4 L555 278.2 L554.8 277.1Z" fill="none" stroke="#333" stroke-width="0.72"/>
<g fill="#fff" stroke="#1e1e1e" stroke-width="0.62"><ellipse cx="560" cy="263.6" rx="0.7" ry="0.6"/><ellipse cx="562.6" cy="262.9" rx="0.6" ry="0.6"/><ellipse cx="565.3" cy="262.8" rx="0.7" ry="0.5"/><ellipse cx="568.2" cy="263.2" rx="0.7" ry="0.7"/><ellipse cx="570.5" cy="262.9" rx="1.2" ry="0.9"/><ellipse cx="573.1" cy="263.4" rx="0.7" ry="0.5"/><ellipse cx="575.4" cy="263.2" rx="1.1" ry="0.8"/><ellipse cx="578.1" cy="263.2" rx="1.1" ry="0.8"/><ellipse cx="579.9" cy="264.2" rx="0.5" ry="0.3"/><ellipse cx="582.4" cy="264" rx="0.8" ry="0.8"/><ellipse cx="584.5" cy="265.4" rx="0.7" ry="0.6"/><ellipse cx="585.3" cy="266.6" rx="1" ry="0.9"/><ellipse cx="587.3" cy="267.9" rx="1.1" ry="0.7"/><ellipse cx="588.6" cy="268.5" rx="0.8" ry="0.8"/></g>
<g fill="#fff" stroke="#1e1e1e" stroke-width="0.62"><ellipse cx="561.2" cy="289.7" rx="0.7" ry="0.5"/><ellipse cx="563.6" cy="292.7" rx="1.4" ry="1.1"/><ellipse cx="565.1" cy="293.5" rx="1.1" ry="0.8"/><ellipse cx="566.1" cy="295.3" rx="0.8" ry="0.8"/><ellipse cx="566.9" cy="297.2" rx="0.8" ry="0.7"/><ellipse cx="568.7" cy="299.5" rx="0.9" ry="0.6"/><ellipse cx="569.1" cy="301.3" rx="1.2" ry="0.7"/><ellipse cx="568.5" cy="302.4" rx="1.3" ry="0.9"/><ellipse cx="566.3" cy="304" rx="1.3" ry="1.2"/><ellipse cx="564.2" cy="305.2" rx="1.1" ry="0.8"/></g>
<g fill="#fff" stroke="#1e1e1e" stroke-width="0.62"><ellipse cx="576.5" cy="297.1" rx="0.6" ry="0.4"/><ellipse cx="578.2" cy="298.1" rx="0.8" ry="0.6"/><ellipse cx="580.3" cy="299.2" rx="0.9" ry="0.6"/><ellipse cx="581.5" cy="301.4" rx="0.9" ry="0.5"/><ellipse cx="580.3" cy="302.5" rx="1" ry="0.7"/><ellipse cx="579.2" cy="304.5" rx="0.9" ry="0.7"/><ellipse cx="577" cy="304.4" rx="1.2" ry="1.1"/></g>
<g fill="#fff" stroke="#1e1e1e" stroke-width="0.62"><ellipse cx="583.8" cy="264.7" rx="0.7" ry="0.7"/><ellipse cx="585.3" cy="263.5" rx="0.9" ry="0.7"/><ellipse cx="587.3" cy="263.1" rx="1.1" ry="0.9"/><ellipse cx="588.7" cy="262" rx="1.2" ry="1"/><ellipse cx="590.9" cy="261.9" rx="1.2" ry="1.1"/><ellipse cx="592.6" cy="263.5" rx="0.7" ry="0.6"/><ellipse cx="593.6" cy="265.3" rx="0.9" ry="0.7"/><ellipse cx="594.6" cy="267" rx="0.7" ry="0.7"/><ellipse cx="595.1" cy="269.5" rx="1.1" ry="0.7"/><ellipse cx="594.8" cy="271.1" rx="0.8" ry="0.6"/><ellipse cx="593.5" cy="273.6" rx="0.6" ry="0.5"/><ellipse cx="593.8" cy="275.5" rx="0.6" ry="0.4"/></g>
<path d="M601.8 264.1 L598.2 271.3 L595.8 283.4 L593.4 306.3" fill="none" stroke="#1a1a1a" stroke-width="1.0"/>
<circle cx="592.9" cy="257.3" r="3.4" fill="#fff" stroke="#555" stroke-width="0.45"/>
<circle cx="592.9" cy="257.3" r="0.35" fill="#555"/>
<circle cx="600.6" cy="285.8" r="3.4" fill="#fff" stroke="#555" stroke-width="0.45"/>
<circle cx="600.6" cy="285.8" r="0.35" fill="#555"/>
<circle cx="588.6" cy="297.8" r="3.4" fill="#fff" stroke="#555" stroke-width="0.45"/>
<circle cx="588.6" cy="297.8" r="0.35" fill="#555"/>
<circle cx="611.4" cy="302.7" r="3.4" fill="#fff" stroke="#555" stroke-width="0.45"/>
<circle cx="611.4" cy="302.7" r="0.35" fill="#555"/>
<circle cx="619.9" cy="303.9" r="2.2" fill="#fff" stroke="#555" stroke-width="0.45"/>
<circle cx="619.9" cy="303.9" r="0.35" fill="#555"/>
<circle cx="625.9" cy="303.9" r="2.7" fill="#fff" stroke="#555" stroke-width="0.45"/>
<circle cx="625.9" cy="303.9" r="0.35" fill="#555"/>
<circle cx="629.5" cy="297.3" r="2.4" fill="#fff" stroke="#555" stroke-width="0.45"/>
<circle cx="629.5" cy="297.3" r="0.35" fill="#555"/>
<circle cx="656" cy="273.7" r="3.9" fill="#fff" stroke="#555" stroke-width="0.45"/>
<circle cx="656" cy="273.7" r="0.35" fill="#555"/>
<circle cx="640.4" cy="287" r="2.9" fill="#fff" stroke="#555" stroke-width="0.45"/>
<circle cx="640.4" cy="287" r="0.35" fill="#555"/>
<circle cx="575.3" cy="323.1" r="2.9" fill="#fff" stroke="#555" stroke-width="0.45"/>
<circle cx="575.3" cy="323.1" r="0.35" fill="#555"/>
<circle cx="568.1" cy="324.3" r="2.2" fill="#fff" stroke="#555" stroke-width="0.45"/>
<circle cx="568.1" cy="324.3" r="0.35" fill="#555"/>
<circle cx="574.1" cy="330.4" r="1.9" fill="#fff" stroke="#555" stroke-width="0.45"/>
<circle cx="574.1" cy="330.4" r="0.35" fill="#555"/>
<circle cx="594.6" cy="271.3" r="2.2" fill="#fff" stroke="#555" stroke-width="0.45"/>
<circle cx="594.6" cy="271.3" r="0.35" fill="#555"/>
<circle cx="595.8" cy="276.1" r="1.9" fill="#fff" stroke="#555" stroke-width="0.45"/>
<circle cx="595.8" cy="276.1" r="0.35" fill="#555"/>
<path d="M609 254.5 L610.2 267.7 L615.1 266.5 L614.6 254.5" fill="none" stroke="#1a1a1a" stroke-width="0.95"/>
<path d="M623.5 265.3 L634.3 265.3 L634.3 278.6 L623.5 278.6Z" fill="#fff" stroke="#222" stroke-width="0.9"/>
<text x="628.9" y="273.2" font-size="3.6" text-anchor="middle" fill="#222">21</text>
<path d="M621.1 267.7 L623.5 267.7 L623.5 276.1 L621.1 276.1" fill="none" stroke="#2a2a2a" stroke-width="0.5"/>
<path d="M615.1 290.6 L623.5 290.6 L623.5 299 L615.1 299Z" fill="#fff" stroke="#222" stroke-width="0.9"/>
<text x="619.3" y="296.1" font-size="3.6" text-anchor="middle" fill="#222">22</text>
<path d="M635.5 291.8 L653.6 291.8 L653.6 304.6 L635.5 304.6Z" fill="none" stroke="#2a2a2a" stroke-width="0.6"/>
<path d="M638 293.5 L651.2 293.5 L651.2 302.7 L638 302.7Z" fill="#fff" stroke="#222" stroke-width="1.0"/>
<text x="644.6" y="299.4" font-size="3.6" text-anchor="middle" fill="#222">23</text>
<path d="M653.6 244.8 L664.5 244.8 L664.5 253.3 L653.6 253.3Z" fill="#fff" stroke="#222" stroke-width="1.0"/>
<text x="659" y="250.3" font-size="3.6" text-anchor="middle" fill="#222">20</text>
<path d="M646.4 243.6 L652.4 243.6 L652.4 253.3 L646.4 253.3Z" fill="none" stroke="#2a2a2a" stroke-width="0.9"/>
<path d="M645.2 243.6 L645.2 254.5 L642.8 261.7 L634.3 262.9 L634.3 290.6" fill="none" stroke="#1a1a1a" stroke-width="0.95"/>
<path d="M665.7 247.2 L666.9 253.3 L663.3 265.3 L636.7 264.1" fill="none" stroke="#1a1a1a" stroke-width="0.9"/>
<path d="M663.3 265.3 L659.6 290.6 L634.3 290.6" fill="none" stroke="#1a1a1a" stroke-width="0.9"/>
<g fill="#fff" stroke="#1e1e1e" stroke-width="0.62"><ellipse cx="641.8" cy="267.5" rx="0.6" ry="0.5"/><ellipse cx="643.7" cy="267.2" rx="0.6" ry="0.4"/><ellipse cx="646.2" cy="267.6" rx="0.9" ry="0.6"/><ellipse cx="647" cy="268.1" rx="1" ry="0.6"/><ellipse cx="648.5" cy="270" rx="0.9" ry="0.6"/><ellipse cx="649.4" cy="272.5" rx="1.2" ry="1.1"/><ellipse cx="650" cy="274.3" rx="0.9" ry="0.8"/><ellipse cx="648.8" cy="277.1" rx="1" ry="0.7"/><ellipse cx="648" cy="278.6" rx="0.9" ry="0.8"/><ellipse cx="647.2" cy="279.6" rx="1.1" ry="0.8"/><ellipse cx="645.9" cy="281.3" rx="1.2" ry="1.1"/><ellipse cx="644.3" cy="282" rx="1" ry="0.9"/><ellipse cx="641.4" cy="280.9" rx="1.1" ry="1"/><ellipse cx="640.7" cy="280" rx="1" ry="0.7"/><ellipse cx="640" cy="277.7" rx="0.7" ry="0.5"/><ellipse cx="639.5" cy="275.8" rx="0.7" ry="0.6"/><ellipse cx="639.2" cy="273.4" rx="1" ry="0.9"/><ellipse cx="640" cy="270.8" rx="1.2" ry="1.1"/></g>
<path d="M612.6 297.2h.5M605.8 292h.5M612.3 299h.5M609.1 293.6h.5M609.7 298.9h.5M612.7 292.9h.5M607.4 293.6h.5M612.6 293.9h.5M614 295.3h.5M607.3 295.3h.5M606.8 299.2h.5M605.6 295.3h.5M609.1 292.1h.5M607.6 300.1h.5M613.7 295.4h.5M613.8 299.5h.5M613.7 297.9h.5M610.9 296.1h.5M612.3 296.9h.5M614.8 293.3h.5M614.1 298.2h.5M609.7 299h.5M608.2 295.1h.5M611 300h.5M607.8 299h.5" stroke="#888" stroke-width="0.5" fill="none"/>
<path d="M554.8 308.7 L554.8 314.7 L574.1 314.7 L574.1 308.7" fill="none" stroke="#2a2a2a" stroke-width="0.7"/>
<path d="M559.6 309.9 L559.6 313.5" fill="none" stroke="#2a2a2a" stroke-width="0.4"/>
<path d="M564.5 308.7 L564.5 314.7" fill="none" stroke="#2a2a2a" stroke-width="0.5"/>
<path d="M569.3 309.9 L569.3 313.5" fill="none" stroke="#2a2a2a" stroke-width="0.4"/>
<path d="M550 312.3 L554.8 312.3" fill="none" stroke="#2a2a2a" stroke-width="0.5"/>
<path d="M574.1 312.3 L578.9 312.3" fill="none" stroke="#2a2a2a" stroke-width="0.5"/>
<path d="M551.2 317.1 L578.9 318.3" fill="none" stroke="#2a2a2a" stroke-width="0.5"/>
<g fill="#fff" stroke="#1e1e1e" stroke-width="0.62"><ellipse cx="553.7" cy="221.1" rx="0.9" ry="0.8"/><ellipse cx="555.8" cy="221.7" rx="1" ry="1"/><ellipse cx="558" cy="221.3" rx="0.9" ry="0.7"/><ellipse cx="561" cy="221.4" rx="1.1" ry="0.8"/><ellipse cx="563.6" cy="221.7" rx="0.6" ry="0.6"/><ellipse cx="565.9" cy="222.7" rx="0.6" ry="0.4"/><ellipse cx="568.7" cy="222.7" rx="0.9" ry="0.5"/><ellipse cx="571.3" cy="223.1" rx="0.9" ry="0.7"/><ellipse cx="573.6" cy="223.2" rx="0.9" ry="0.8"/><ellipse cx="576.8" cy="222.5" rx="1.1" ry="1"/><ellipse cx="578.7" cy="223.5" rx="0.7" ry="0.6"/><ellipse cx="581" cy="223.5" rx="0.7" ry="0.4"/><ellipse cx="583.5" cy="223.3" rx="0.6" ry="0.6"/><ellipse cx="586.9" cy="223.6" rx="0.7" ry="0.6"/><ellipse cx="589" cy="224.1" rx="1" ry="0.6"/><ellipse cx="591.7" cy="224.2" rx="1" ry="0.7"/><ellipse cx="593.4" cy="224.7" rx="0.5" ry="0.4"/><ellipse cx="596" cy="223.8" rx="0.7" ry="0.6"/><ellipse cx="598" cy="223.7" rx="1" ry="0.9"/><ellipse cx="600.6" cy="223.8" rx="1" ry="1"/><ellipse cx="602" cy="224.4" rx="0.9" ry="0.8"/><ellipse cx="604.9" cy="223.7" rx="0.6" ry="0.5"/><ellipse cx="606.2" cy="223.6" rx="0.5" ry="0.3"/><ellipse cx="608" cy="223" rx="0.6" ry="0.4"/><ellipse cx="610.3" cy="222.8" rx="1" ry="0.9"/><ellipse cx="611.9" cy="222" rx="1.1" ry="1"/><ellipse cx="614.4" cy="221.6" rx="0.7" ry="0.6"/><ellipse cx="616" cy="221.2" rx="0.6" ry="0.5"/><ellipse cx="617.8" cy="220.7" rx="0.9" ry="0.6"/><ellipse cx="619.4" cy="221" rx="0.6" ry="0.5"/><ellipse cx="620.3" cy="220.5" rx="1" ry="0.6"/><ellipse cx="623.5" cy="219.5" rx="0.7" ry="0.6"/><ellipse cx="626" cy="219.4" rx="0.6" ry="0.4"/><ellipse cx="628.7" cy="218.3" rx="0.9" ry="0.6"/><ellipse cx="630.6" cy="218.8" rx="0.9" ry="0.8"/><ellipse cx="632.2" cy="219" rx="0.9" ry="0.8"/><ellipse cx="633.4" cy="218.5" rx="0.8" ry="0.5"/><ellipse cx="635.5" cy="218.8" rx="0.6" ry="0.5"/><ellipse cx="637.4" cy="219.6" rx="1" ry="0.9"/><ellipse cx="639.8" cy="219.2" rx="0.6" ry="0.4"/><ellipse cx="641.5" cy="219.4" rx="0.6" ry="0.4"/><ellipse cx="644.2" cy="220.7" rx="1" ry="0.6"/><ellipse cx="646.2" cy="220.7" rx="0.5" ry="0.4"/><ellipse cx="647.8" cy="221.1" rx="0.9" ry="0.6"/><ellipse cx="649.8" cy="222.2" rx="0.6" ry="0.3"/><ellipse cx="651.2" cy="222.1" rx="0.6" ry="0.5"/><ellipse cx="652.5" cy="222.5" rx="0.8" ry="0.6"/><ellipse cx="653.8" cy="223.5" rx="1" ry="0.9"/><ellipse cx="655.5" cy="224.7" rx="0.8" ry="0.8"/><ellipse cx="656.7" cy="225" rx="1.1" ry="0.9"/><ellipse cx="659.5" cy="226.6" rx="1" ry="0.8"/><ellipse cx="661.2" cy="227.5" rx="1.1" ry="0.7"/><ellipse cx="662.4" cy="229.3" rx="0.6" ry="0.5"/></g>
<g fill="#fff" stroke="#1e1e1e" stroke-width="0.62"><ellipse cx="533" cy="219.2" rx="1" ry="0.7"/><ellipse cx="535.5" cy="218.8" rx="1.1" ry="0.9"/><ellipse cx="539" cy="218.5" rx="1" ry="0.8"/><ellipse cx="540" cy="218.1" rx="1" ry="0.8"/><ellipse cx="541.3" cy="218.5" rx="0.7" ry="0.5"/><ellipse cx="542.9" cy="217.8" rx="0.9" ry="0.8"/><ellipse cx="546.3" cy="218.4" rx="1" ry="0.7"/><ellipse cx="548.1" cy="218.7" rx="0.8" ry="0.7"/><ellipse cx="549.2" cy="218.1" rx="0.9" ry="0.8"/><ellipse cx="551.1" cy="218.6" rx="0.5" ry="0.4"/><ellipse cx="553.5" cy="219.4" rx="0.9" ry="0.7"/><ellipse cx="554.5" cy="219" rx="0.6" ry="0.4"/><ellipse cx="556.5" cy="219.4" rx="1.1" ry="0.7"/><ellipse cx="558.8" cy="220" rx="1.1" ry="0.7"/></g>
<g fill="#fff" stroke="#1e1e1e" stroke-width="0.62"><ellipse cx="540.3" cy="148.7" rx="0.6" ry="0.4"/><ellipse cx="543.4" cy="146.9" rx="0.7" ry="0.5"/><ellipse cx="544.6" cy="146.2" rx="0.7" ry="0.5"/><ellipse cx="546.1" cy="145.6" rx="0.5" ry="0.4"/><ellipse cx="548.2" cy="144.6" rx="0.8" ry="0.5"/><ellipse cx="550" cy="143.8" rx="0.9" ry="0.7"/><ellipse cx="552.3" cy="143.2" rx="0.6" ry="0.6"/><ellipse cx="553.9" cy="142.6" rx="0.5" ry="0.3"/><ellipse cx="555.9" cy="142.6" rx="0.6" ry="0.5"/><ellipse cx="558" cy="142.5" rx="0.9" ry="0.7"/><ellipse cx="560.8" cy="141.8" rx="0.9" ry="0.8"/><ellipse cx="563.7" cy="141.9" rx="0.8" ry="0.7"/><ellipse cx="566.4" cy="142.2" rx="1" ry="0.7"/><ellipse cx="569.2" cy="142.1" rx="0.6" ry="0.6"/><ellipse cx="571.4" cy="142.3" rx="0.7" ry="0.5"/><ellipse cx="573.7" cy="142" rx="0.5" ry="0.4"/><ellipse cx="576.3" cy="142.1" rx="0.6" ry="0.5"/><ellipse cx="578.1" cy="142.8" rx="0.7" ry="0.7"/><ellipse cx="580.7" cy="143.7" rx="0.8" ry="0.6"/><ellipse cx="581.8" cy="144.3" rx="0.4" ry="0.4"/><ellipse cx="583.7" cy="145.4" rx="0.6" ry="0.5"/><ellipse cx="585.3" cy="146.3" rx="0.7" ry="0.6"/><ellipse cx="587.5" cy="147" rx="0.8" ry="0.8"/><ellipse cx="588.6" cy="148.3" rx="0.6" ry="0.6"/><ellipse cx="589.6" cy="149.5" rx="0.7" ry="0.4"/><ellipse cx="591.7" cy="151.2" rx="0.4" ry="0.3"/></g>
<g fill="#fff" stroke="#1e1e1e" stroke-width="0.62"><ellipse cx="596.1" cy="149.6" rx="0.4" ry="0.3"/><ellipse cx="598.7" cy="149.1" rx="1" ry="0.8"/><ellipse cx="601.2" cy="147.8" rx="0.6" ry="0.6"/><ellipse cx="604.5" cy="147.4" rx="0.8" ry="0.7"/><ellipse cx="606.1" cy="147.9" rx="0.9" ry="0.8"/><ellipse cx="607.8" cy="147.7" rx="0.5" ry="0.5"/><ellipse cx="609.7" cy="147.3" rx="0.5" ry="0.4"/><ellipse cx="611.8" cy="147.4" rx="0.5" ry="0.5"/><ellipse cx="613.7" cy="147.7" rx="0.6" ry="0.4"/><ellipse cx="615.8" cy="147.5" rx="0.4" ry="0.4"/><ellipse cx="618.3" cy="148.4" rx="0.4" ry="0.4"/><ellipse cx="620.5" cy="148.3" rx="0.6" ry="0.4"/><ellipse cx="622.5" cy="148.5" rx="0.5" ry="0.3"/><ellipse cx="624.7" cy="149.3" rx="0.6" ry="0.4"/><ellipse cx="627.2" cy="149.7" rx="0.7" ry="0.6"/><ellipse cx="629" cy="150.2" rx="0.9" ry="0.5"/><ellipse cx="630.8" cy="151" rx="0.8" ry="0.5"/><ellipse cx="633" cy="152.1" rx="0.5" ry="0.5"/><ellipse cx="634.3" cy="152.9" rx="0.9" ry="0.9"/><ellipse cx="636.3" cy="154.6" rx="0.6" ry="0.4"/><ellipse cx="638.3" cy="155.7" rx="0.7" ry="0.6"/><ellipse cx="639.4" cy="156.3" rx="0.8" ry="0.5"/><ellipse cx="641.3" cy="158.2" rx="0.9" ry="0.9"/><ellipse cx="643.1" cy="159.1" rx="0.6" ry="0.4"/><ellipse cx="644.6" cy="161" rx="0.6" ry="0.4"/><ellipse cx="645.9" cy="162.2" rx="0.7" ry="0.7"/><ellipse cx="646.8" cy="163.5" rx="0.6" ry="0.6"/><ellipse cx="648.7" cy="164.9" rx="0.8" ry="0.6"/><ellipse cx="649.7" cy="167.2" rx="0.9" ry="0.9"/><ellipse cx="651.1" cy="168.9" rx="0.7" ry="0.5"/><ellipse cx="652.3" cy="171" rx="0.7" ry="0.7"/><ellipse cx="653.3" cy="172.5" rx="0.6" ry="0.6"/><ellipse cx="654.2" cy="173.9" rx="0.6" ry="0.5"/><ellipse cx="654.7" cy="175.3" rx="0.8" ry="0.5"/><ellipse cx="656.7" cy="177.8" rx="0.8" ry="0.5"/></g>
<g fill="#fff" stroke="#1e1e1e" stroke-width="0.62"><ellipse cx="558.9" cy="202.7" rx="0.7" ry="0.5"/><ellipse cx="561.4" cy="203.6" rx="0.6" ry="0.5"/><ellipse cx="563.3" cy="203.4" rx="0.8" ry="0.6"/><ellipse cx="565.2" cy="204.2" rx="0.8" ry="0.5"/><ellipse cx="566.4" cy="203.9" rx="0.6" ry="0.4"/><ellipse cx="568.8" cy="204.5" rx="0.8" ry="0.5"/><ellipse cx="570" cy="204.4" rx="0.6" ry="0.5"/><ellipse cx="571.7" cy="204.4" rx="0.7" ry="0.7"/><ellipse cx="573.7" cy="204.5" rx="0.8" ry="0.6"/><ellipse cx="575" cy="204.7" rx="0.8" ry="0.8"/><ellipse cx="577" cy="204.1" rx="0.8" ry="0.7"/><ellipse cx="579.2" cy="204.5" rx="0.5" ry="0.5"/><ellipse cx="581.3" cy="204.6" rx="0.6" ry="0.5"/><ellipse cx="583.2" cy="204.4" rx="0.6" ry="0.6"/><ellipse cx="585.1" cy="204.2" rx="0.9" ry="0.7"/><ellipse cx="586.3" cy="203.4" rx="0.8" ry="0.6"/><ellipse cx="589.1" cy="203" rx="0.9" ry="0.9"/><ellipse cx="591.1" cy="202.4" rx="1" ry="0.9"/><ellipse cx="591.6" cy="200.8" rx="0.5" ry="0.3"/><ellipse cx="593.5" cy="199.9" rx="0.6" ry="0.5"/><ellipse cx="594.9" cy="199.4" rx="0.7" ry="0.4"/><ellipse cx="598.3" cy="200.1" rx="0.7" ry="0.7"/><ellipse cx="599.7" cy="200.3" rx="0.5" ry="0.3"/><ellipse cx="601.3" cy="200" rx="0.5" ry="0.4"/><ellipse cx="604" cy="200.4" rx="0.8" ry="0.7"/><ellipse cx="605.4" cy="200.8" rx="0.9" ry="0.9"/><ellipse cx="607.5" cy="201.2" rx="0.9" ry="0.7"/><ellipse cx="610" cy="201.5" rx="0.5" ry="0.3"/><ellipse cx="612.3" cy="202.3" rx="0.7" ry="0.4"/><ellipse cx="614.2" cy="202.1" rx="0.6" ry="0.4"/><ellipse cx="617.3" cy="202.2" rx="0.6" ry="0.5"/><ellipse cx="619.2" cy="202.2" rx="0.8" ry="0.8"/><ellipse cx="622.3" cy="201.8" rx="0.5" ry="0.3"/><ellipse cx="625" cy="201.5" rx="0.8" ry="0.5"/><ellipse cx="627.2" cy="201.6" rx="0.7" ry="0.7"/><ellipse cx="630.1" cy="201.2" rx="0.4" ry="0.3"/><ellipse cx="633.1" cy="201.1" rx="0.7" ry="0.6"/><ellipse cx="635.6" cy="201.2" rx="0.8" ry="0.6"/><ellipse cx="638" cy="200.7" rx="0.5" ry="0.5"/><ellipse cx="640.1" cy="200" rx="0.5" ry="0.3"/><ellipse cx="641.8" cy="199.9" rx="0.5" ry="0.4"/><ellipse cx="643.8" cy="199.6" rx="0.9" ry="0.7"/><ellipse cx="645.6" cy="198.6" rx="0.6" ry="0.4"/><ellipse cx="647.9" cy="198.7" rx="0.8" ry="0.6"/><ellipse cx="649.1" cy="197.8" rx="0.7" ry="0.6"/><ellipse cx="650.9" cy="197.5" rx="0.7" ry="0.6"/><ellipse cx="653.7" cy="196.5" rx="0.6" ry="0.6"/><ellipse cx="655.6" cy="195.9" rx="0.9" ry="0.6"/></g>
<g fill="#fff" stroke="#1e1e1e" stroke-width="0.62"><ellipse cx="537" cy="125.6" rx="1" ry="0.6"/><ellipse cx="539.6" cy="125.9" rx="0.7" ry="0.4"/><ellipse cx="542.5" cy="126.9" rx="0.7" ry="0.4"/><ellipse cx="544" cy="127.3" rx="0.6" ry="0.5"/><ellipse cx="546" cy="128.2" rx="0.5" ry="0.3"/><ellipse cx="548" cy="128.9" rx="0.7" ry="0.6"/><ellipse cx="550.1" cy="128.9" rx="0.9" ry="0.8"/><ellipse cx="552.2" cy="130.1" rx="0.8" ry="0.5"/><ellipse cx="554.5" cy="130.4" rx="0.9" ry="0.9"/><ellipse cx="557.2" cy="130.6" rx="0.5" ry="0.3"/><ellipse cx="559.6" cy="131.6" rx="1" ry="0.6"/><ellipse cx="562.7" cy="132.6" rx="0.9" ry="0.7"/><ellipse cx="565.4" cy="133.2" rx="0.7" ry="0.6"/><ellipse cx="568.8" cy="133.7" rx="0.7" ry="0.7"/><ellipse cx="571.7" cy="134.8" rx="0.4" ry="0.4"/><ellipse cx="575.2" cy="135.9" rx="0.9" ry="0.7"/><ellipse cx="579" cy="136.5" rx="0.7" ry="0.7"/><ellipse cx="582.6" cy="137.6" rx="0.9" ry="0.7"/><ellipse cx="586.7" cy="138.5" rx="0.8" ry="0.6"/><ellipse cx="591.6" cy="139.4" rx="1" ry="1"/><ellipse cx="596.4" cy="140.7" rx="0.5" ry="0.3"/><ellipse cx="600.7" cy="142.1" rx="0.7" ry="0.4"/><ellipse cx="605.8" cy="142.6" rx="0.8" ry="0.8"/><ellipse cx="610.4" cy="143.8" rx="0.7" ry="0.5"/><ellipse cx="614.3" cy="144.9" rx="0.6" ry="0.5"/><ellipse cx="618.9" cy="145.9" rx="0.6" ry="0.4"/><ellipse cx="622.4" cy="147.1" rx="0.7" ry="0.5"/><ellipse cx="625.4" cy="148.1" rx="0.5" ry="0.5"/><ellipse cx="628.4" cy="149.4" rx="0.6" ry="0.4"/><ellipse cx="631.8" cy="150.5" rx="0.4" ry="0.3"/><ellipse cx="634" cy="150.9" rx="0.6" ry="0.5"/><ellipse cx="636.6" cy="152" rx="0.9" ry="0.9"/><ellipse cx="638.4" cy="153.1" rx="0.9" ry="0.6"/><ellipse cx="640.9" cy="153.8" rx="1" ry="0.9"/><ellipse cx="642" cy="154.6" rx="0.6" ry="0.4"/><ellipse cx="644.2" cy="155.2" rx="0.7" ry="0.5"/></g>
<g fill="#fff" stroke="#1e1e1e" stroke-width="0.62"><ellipse cx="441.9" cy="132.1" rx="0.5" ry="0.5"/><ellipse cx="444.8" cy="131.8" rx="0.5" ry="0.4"/><ellipse cx="446.4" cy="131.8" rx="0.5" ry="0.4"/><ellipse cx="448.3" cy="132" rx="0.6" ry="0.5"/><ellipse cx="449.8" cy="131.5" rx="0.6" ry="0.5"/><ellipse cx="451.9" cy="131.5" rx="0.5" ry="0.4"/><ellipse cx="453.8" cy="131" rx="0.8" ry="0.5"/><ellipse cx="455.5" cy="131.4" rx="0.7" ry="0.5"/><ellipse cx="457.2" cy="131.3" rx="0.6" ry="0.5"/><ellipse cx="458.8" cy="131.4" rx="0.5" ry="0.3"/><ellipse cx="460.6" cy="131.9" rx="0.8" ry="0.8"/><ellipse cx="461.9" cy="131.4" rx="0.8" ry="0.7"/><ellipse cx="463.5" cy="131.4" rx="0.7" ry="0.6"/><ellipse cx="465.5" cy="131.6" rx="0.8" ry="0.6"/><ellipse cx="466.7" cy="132.3" rx="0.8" ry="0.8"/><ellipse cx="468.6" cy="132.2" rx="0.8" ry="0.7"/><ellipse cx="470.6" cy="132.4" rx="0.6" ry="0.6"/><ellipse cx="472.4" cy="132.6" rx="0.9" ry="0.8"/><ellipse cx="474.3" cy="132.6" rx="0.8" ry="0.5"/><ellipse cx="475.8" cy="133.3" rx="0.7" ry="0.5"/><ellipse cx="477.9" cy="133" rx="0.9" ry="0.8"/><ellipse cx="480.5" cy="133.6" rx="0.6" ry="0.4"/><ellipse cx="481.8" cy="133.7" rx="0.6" ry="0.5"/><ellipse cx="484.2" cy="134" rx="0.6" ry="0.6"/><ellipse cx="485.9" cy="134.5" rx="0.8" ry="0.5"/><ellipse cx="487.6" cy="134.9" rx="0.6" ry="0.4"/><ellipse cx="490.2" cy="134.4" rx="0.9" ry="0.9"/><ellipse cx="491.7" cy="135.2" rx="0.4" ry="0.3"/><ellipse cx="493.5" cy="135.1" rx="0.9" ry="0.7"/><ellipse cx="494.7" cy="135.3" rx="0.5" ry="0.4"/><ellipse cx="496.7" cy="135.1" rx="0.5" ry="0.4"/><ellipse cx="498.1" cy="135.6" rx="0.8" ry="0.5"/><ellipse cx="499.8" cy="136" rx="0.9" ry="0.9"/><ellipse cx="502.7" cy="136.1" rx="1" ry="0.6"/><ellipse cx="505.3" cy="135.7" rx="1" ry="0.6"/></g>
<path d="M446.3 138.5 L447.2 160.2 L456.2 176.4" fill="none" stroke="#2a2a2a" stroke-width="0.6"/>
<path d="M448.4 138.5 L449.3 159.8 L458.4 175.5" fill="none" stroke="#2a2a2a" stroke-width="0.6"/>
<path d="M456.2 176.4 L452.6 182.2 L436.3 192.4" fill="none" stroke="#2a2a2a" stroke-width="0.6"/>
<path d="M458.4 177.4 L453.9 184.4 L437.2 194.5" fill="none" stroke="#2a2a2a" stroke-width="0.6"/>
<path d="M458.9 178.6 L473.4 175.5" fill="none" stroke="#2a2a2a" stroke-width="0.6"/>
<path d="M459.8 180.8 L475.2 177.7" fill="none" stroke="#2a2a2a" stroke-width="0.6"/>
<path d="M438.5 169.5h.5M441.1 178.3h.5M437.4 173.2h.5M441.8 164.3h.5M448 175.4h.5M444.5 165.3h.5M442.8 179.9h.5M443.8 175h.5M442.6 169.7h.5M437.9 177.2h.5M448.9 176.1h.5M447 166.9h.5M447.2 170.1h.5M447.3 167.4h.5M440.7 172.9h.5M439.9 167.8h.5M445.8 177.9h.5M448.8 175.3h.5M441.3 171.8h.5M444.1 174.1h.5M448 173.7h.5M448.5 172h.5M442.5 163.4h.5M441 172.1h.5M437.4 171.2h.5" stroke="#999" stroke-width="0.5" fill="none"/>
<g fill="#fff" stroke="#1e1e1e" stroke-width="0.62"><ellipse cx="437.7" cy="166.4" rx="0.6" ry="0.6"/><ellipse cx="439.1" cy="164.8" rx="0.6" ry="0.4"/><ellipse cx="440.3" cy="163.7" rx="0.8" ry="0.6"/><ellipse cx="442.2" cy="163.1" rx="0.6" ry="0.4"/><ellipse cx="444.2" cy="163.5" rx="0.9" ry="0.8"/><ellipse cx="445.9" cy="164.3" rx="0.9" ry="0.8"/><ellipse cx="446.8" cy="165.7" rx="0.8" ry="0.7"/><ellipse cx="447.6" cy="166.6" rx="1" ry="0.8"/><ellipse cx="448.3" cy="168" rx="0.9" ry="0.6"/><ellipse cx="449.3" cy="169.6" rx="1" ry="0.9"/><ellipse cx="449.4" cy="172" rx="0.9" ry="0.7"/><ellipse cx="449.2" cy="173.9" rx="0.5" ry="0.5"/><ellipse cx="449.4" cy="175.8" rx="1.2" ry="0.9"/><ellipse cx="448.3" cy="177.6" rx="1.1" ry="0.9"/><ellipse cx="447.8" cy="178.7" rx="0.9" ry="0.9"/><ellipse cx="445.8" cy="180.1" rx="0.6" ry="0.4"/><ellipse cx="445.2" cy="181.1" rx="0.7" ry="0.5"/><ellipse cx="443" cy="181.5" rx="0.8" ry="0.5"/><ellipse cx="441.7" cy="181.6" rx="1.2" ry="0.8"/><ellipse cx="439.9" cy="180.2" rx="1.2" ry="1.2"/><ellipse cx="438.9" cy="179.4" rx="0.9" ry="0.7"/><ellipse cx="437.6" cy="177.8" rx="0.5" ry="0.5"/><ellipse cx="437.4" cy="176.4" rx="0.7" ry="0.6"/><ellipse cx="437.1" cy="174.7" rx="1.1" ry="0.8"/><ellipse cx="436.3" cy="172" rx="0.7" ry="0.5"/><ellipse cx="437" cy="169.7" rx="0.8" ry="0.6"/><ellipse cx="436.6" cy="168.4" rx="0.9" ry="0.6"/></g>
<g fill="#fff" stroke="#1e1e1e" stroke-width="0.62"><ellipse cx="482.6" cy="146" rx="1" ry="0.7"/><ellipse cx="483.1" cy="147.1" rx="0.5" ry="0.4"/><ellipse cx="484.1" cy="149.1" rx="0.7" ry="0.5"/><ellipse cx="483.6" cy="150.8" rx="1" ry="0.9"/><ellipse cx="483.5" cy="152.7" rx="0.7" ry="0.6"/><ellipse cx="483.2" cy="155.1" rx="1.1" ry="0.9"/><ellipse cx="482.5" cy="156.8" rx="0.6" ry="0.4"/><ellipse cx="481.5" cy="158.9" rx="1" ry="0.9"/><ellipse cx="481.4" cy="161.3" rx="0.5" ry="0.4"/><ellipse cx="479.9" cy="163.9" rx="0.6" ry="0.6"/><ellipse cx="479.5" cy="166.3" rx="0.5" ry="0.3"/><ellipse cx="478.3" cy="168.3" rx="0.9" ry="0.8"/><ellipse cx="477.9" cy="169.6" rx="0.7" ry="0.6"/><ellipse cx="477.8" cy="170.8" rx="0.5" ry="0.4"/><ellipse cx="476.4" cy="173.7" rx="0.6" ry="0.4"/><ellipse cx="476.4" cy="175.7" rx="1.1" ry="0.9"/></g>
<g fill="#fff" stroke="#1e1e1e" stroke-width="0.62"><ellipse cx="453.1" cy="185.7" rx="0.9" ry="0.7"/><ellipse cx="454.7" cy="185.4" rx="0.7" ry="0.7"/><ellipse cx="456.7" cy="184.3" rx="1" ry="0.6"/><ellipse cx="458.1" cy="184.1" rx="0.6" ry="0.6"/><ellipse cx="460" cy="183.3" rx="1.1" ry="0.7"/><ellipse cx="461.6" cy="183.4" rx="0.8" ry="0.8"/><ellipse cx="464.1" cy="183" rx="0.8" ry="0.7"/><ellipse cx="466.2" cy="182.8" rx="0.8" ry="0.6"/><ellipse cx="467.1" cy="182.5" rx="1.1" ry="0.9"/></g>
<path d="M440.8 205 L441.2 203.9 L441.5 202.4 L442 200.6 L442.7 198.8 L443.4 197 L444.5 195.4 L445.7 194.1 L447.2 192.9 L448.9 191.7 L450.7 190.6 L452.6 189.6 L454.4 188.7 L456.4 187.9 L458.6 187.2 L460.9 186.5 L463 185.9 L464.8 185.5 L466.1 185.1" fill="none" stroke="#505050" stroke-width="0.52"/>
</g>
<g font-size="6.6" font-weight="600" fill="#505050" transform="rotate(0.75 277 358)">
<text x="277.2" y="360.6">1-园门</text>
<text x="301.1" y="360.6">2-腰门</text>
<text x="325.0" y="360.6">3-远香堂</text>
<text x="355.0" y="360.6">4-倚玉轩</text>
<text x="384.9" y="360.6">5-小飞虹</text>
<text x="414.8" y="360.6">6-松风亭</text>
<text x="446.0" y="360.6">7-小沧浪</text>
<text x="477.2" y="360.6">8-得真亭</text>
<text x="507.1" y="360.6">9-香洲</text>
<text x="531.8" y="360.6">10-玉兰堂</text>
<text x="565.8" y="360.6">11-别有洞天</text>
<text x="606.5" y="360.6">12-柳荫曲路</text>
<text x="277.2" y="371.5">13-见山楼</text>
<text x="310.7" y="371.5">14-荷风四面亭</text>
<text x="355.7" y="371.5">15-雪香云蔚亭</text>
<text x="401.7" y="371.5">16-北山亭</text>
<text x="435.2" y="371.5">17-绿漪亭</text>
<text x="468.7" y="371.5">18-梧竹幽居</text>
<text x="508.3" y="371.5">19-绣绮亭</text>
<text x="541.8" y="371.5">20-海棠春坞</text>
<text x="582.5" y="371.5">21-玲珑馆</text>
<text x="616.5" y="371.5">22-嘉宝亭</text>
<text x="277.2" y="382.2">23-听雨轩</text>
<text x="310.7" y="382.2">24-倒影楼</text>
<text x="343.0" y="382.2">25-浮翠阁</text>
<text x="376.5" y="382.2">26-留听阁</text>
<text x="410.0" y="382.2">27-三十六鸳鸯馆</text>
<text x="461.5" y="382.2">28-与谁同坐轩</text>
<text x="508.3" y="382.2">29-宜两亭</text>
<text x="541.8" y="382.2">30-塔影亭</text>
<text x="402.9" y="349.7" font-size="7">图 7-135</text><text x="435.2" y="349.5" font-size="7">拙政园中部及西部平面图</text>
</g>
<text x="574.6" y="352.4" font-size="3.4" fill="#222" text-anchor="middle">1</text>
<path d="M590.4 339.3v9.2l2.2-2 1.6 3.6 1.4-.6-1.6-3.5h3z" fill="#fff" stroke="#777" stroke-width="0.6"/>
</svg>

</div>

<div id="taskbar" class="abs"><svg class="abs" style="left:0;top:0" width="736" height="27" viewBox="38 450 736 27" font-family="'Liberation Sans','Noto Sans CJK SC',sans-serif">
<defs><linearGradient id="wl" x1="0" y1="0" x2="1" y2="1"><stop offset="0" stop-color="#6ad4ff"/><stop offset="1" stop-color="#1f9cf0"/></linearGradient>
<linearGradient id="pp" x1="0" y1="0" x2="1" y2="0"><stop offset="0" stop-color="#d04a22"/><stop offset="0.6" stop-color="#e8673a"/><stop offset="1" stop-color="#f59a6a"/></linearGradient></defs>
<rect x="38" y="450" width="736" height="27" fill="#1c1d21"/>
<rect x="250" y="452" width="120" height="24" fill="#1d1e26"/>
<!-- widgets -->
<rect x="47.6" y="457.6" width="13.4" height="11.8" rx="1" fill="#2f8ae6"/><rect x="47.6" y="457.6" width="6.2" height="11.8" rx="1" fill="#e9f1fd"/><rect x="54.6" y="457.6" width="6.4" height="4.6" rx="0.8" fill="#6fb6f5"/>
<!-- windows logo -->
<rect x="361" y="456.8" width="6.6" height="6.4" fill="url(#wl)"/><rect x="368.6" y="456.8" width="6.6" height="6.4" fill="url(#wl)"/><rect x="361" y="464.2" width="6.6" height="6.4" fill="url(#wl)"/><rect x="368.6" y="464.2" width="6.6" height="6.4" fill="url(#wl)"/>
<!-- search -->
<circle cx="394.8" cy="461.6" r="5" fill="#2a2c33" stroke="#f2f2f2" stroke-width="1.7"/><path d="M391.2 465.4L388.2 469" stroke="#f2f2f2" stroke-width="2" stroke-linecap="round"/>
<!-- meeting app -->
<rect x="412.2" y="457.2" width="13.4" height="12.6" rx="2.6" fill="#1f6bf5"/>
<path d="M414.2 465.2L417.2 461.2 419 463.2 420.8 460.8 424 465.2 422 466 420.6 464 419 466 417.2 464 415.8 466z" fill="#fff"/>
<rect x="416.8" y="472.4" width="4" height="1.2" rx="0.6" fill="#a0a0a0"/>
<!-- powerpoint -->
<circle cx="445" cy="463" r="7.3" fill="url(#pp)"/><path d="M445 455.7A7.3 7.3 0 0 1 452.3 463H445z" fill="#f7a27a"/>
<rect x="436.6" y="459" width="8.2" height="8.2" rx="1" fill="#c43e1c"/>
<text x="440.7" y="465.8" font-size="7" font-weight="bold" fill="#fff" text-anchor="middle">P</text>
<rect x="441.8" y="472.4" width="4" height="1.2" rx="0.6" fill="#a0a0a0"/>
<!-- tray -->
<path d="M591.2 465L594.7 461.4 598.2 465" fill="none" stroke="#eee" stroke-width="1.1"/>
<rect x="610.9" y="457.6" width="3.8" height="7" rx="1.9" fill="#3f9fb8"/><path d="M609.4 462.6a3.4 3.4 0 0 0 6.8 0M612.8 466v2.2M611 468.4h3.6" fill="none" stroke="#4fb3c8" stroke-width="0.9"/>
<text x="631.4" y="466.6" font-size="9.5" fill="#f2f2f2" text-anchor="middle">中</text>
<text x="653.2" y="466.6" font-size="9.5" fill="#f2f2f2" text-anchor="middle">拼</text>
<path d="M670 461.2a7 7 0 0 1 9.6 0M671.6 463a4.6 4.6 0 0 1 6.4 0M673.2 464.8a2.4 2.4 0 0 1 3.2 0" fill="none" stroke="#eee" stroke-width="0.9"/><circle cx="674.8" cy="466.4" r="0.8" fill="#eee"/>
<path d="M684.4 461.6h1.8l2.4-2.2v7.6l-2.4-2.2h-1.8z" fill="#eee"/><path d="M690 460.8a3.4 3.4 0 0 1 0 5M691.6 459.4a5.4 5.4 0 0 1 0 7.8" fill="none" stroke="#eee" stroke-width="0.8"/>
<rect x="697.8" y="460.2" width="8.6" height="5.2" rx="1" fill="none" stroke="#eee" stroke-width="0.9"/><rect x="698.8" y="461.2" width="4.2" height="3.2" fill="#eee"/><rect x="706.8" y="461.8" width="1.1" height="2" fill="#eee"/>
<text x="734.2" y="461.2" font-size="7" fill="#f2f2f2" textLength="15" lengthAdjust="spacingAndGlyphs">19:57</text>
<text x="716" y="470.4" font-size="7" fill="#f2f2f2" textLength="33.2" lengthAdjust="spacingAndGlyphs">2022/10/14</text>
<path d="M758.4 459.6a4.1 4.1 0 1 0 3.4 5.9a3.6 3.6 0 0 1-3.4-5.9z" fill="none" stroke="#eee" stroke-width="0.9"/>
</svg>
</div>
<div id="botbar" class="abs"></div>
<div id="rstrip" class="abs"></div><div class="abs" style="left:915px;top:117.5px;width:3px;height:1px;background:#777"></div><div class="abs" style="left:915px;top:146.5px;width:3px;height:1.6px;background:#888"></div>
<svg class="abs" style="left:814.7px;top:17px" width="102.2" height="57.2" viewBox="42 37 748 418" preserveAspectRatio="none">
<defs><filter id="wb" x="-5%" y="-5%" width="110%" height="110%"><feGaussianBlur stdDeviation="7"/></filter>
<filter id="wb2" x="-5%" y="-5%" width="110%" height="110%"><feGaussianBlur stdDeviation="4"/></filter>
<radialGradient id="fc" cx="0.45" cy="0.4" r="0.7"><stop offset="0" stop-color="#d9ab96"/><stop offset="0.6" stop-color="#c8977f"/><stop offset="1" stop-color="#a87860"/></radialGradient>
<clipPath id="wc"><rect x="42" y="37" width="748" height="418"/></clipPath></defs>
<g clip-path="url(#wc)"><g filter="url(#wb)">
<rect x="20" y="20" width="800" height="460" fill="#c4dade"/>
<rect x="200" y="20" width="320" height="190" fill="#cfe0e8"/><rect x="520" y="20" width="290" height="150" fill="#d9e8ee"/>
<rect x="514" y="30" width="6" height="135" fill="#a3b8c2"/>
<rect x="775" y="30" width="6" height="90" fill="#a9bcc4"/>
<!-- left poster -->
<rect x="20" y="20" width="135" height="330" fill="#d2e0e0"/>
<path d="M45 60L120 45 150 80 130 140 90 170 60 130z" fill="#5a9ea4"/><path d="M90 60L140 70 120 120z" fill="#86b060"/><path d="M60 150L100 160 95 200 65 195z" fill="#c8d8d0"/><path d="M50 230L110 240 100 290 60 280z" fill="#3c4a4a"/><path d="M45 40L200 40 200 75 150 60z" fill="#6aa6b2"/>
<path d="M42 330L100 340 90 400 42 395z" fill="#dfe8e6"/>
<!-- dark shelves -->
<path d="M150 70L205 90 198 330 130 300z" fill="#e4ecec"/>
<rect x="158" y="90" width="36" height="78" fill="#3a3f42"/><rect x="143" y="180" width="40" height="85" fill="#33383a"/><rect x="118" y="275" width="44" height="62" fill="#383a3a"/>
<rect x="42" y="340" width="60" height="30" fill="#4a4a48"/>
<!-- wall below shelf -->
<path d="M430 205L810 135 810 380 430 380z" fill="#7f98a2"/>
<path d="M430 192L810 125 810 160 430 226z" fill="#8c8c84"/>
<rect x="655" y="245" width="150" height="125" fill="#b9c6cc"/><rect x="668" y="272" width="135" height="95" fill="#e2eaf0"/><path d="M680 290h30v20h-30zM730 300h30v25h-30zM700 330h40v25h-40zM760 280h25v20h-25z" fill="#5f7fa8"/>
<rect x="612" y="318" width="42" height="46" fill="#4a4038"/>
<circle cx="765" cy="118" r="13" fill="#2f4a78"/>
<rect x="590" y="372" width="230" height="100" fill="#c3cbd0"/><rect x="590" y="366" width="230" height="10" fill="#98a2a8"/>
<rect x="420" y="272" width="52" height="32" fill="#cfd9dd"/>
</g>
<g filter="url(#wb2)">
<!-- jacket -->
<path d="M130 470 Q170 385 260 365 L425 300 Q520 300 590 390 L650 470z" fill="#4a4f54"/>
<path d="M420 300 Q470 330 500 400 L520 470 L440 470z" fill="#54595e"/>
<path d="M420 312 Q400 380 350 450 L300 450 Q280 420 275 380 Q350 380 400 322z" fill="#d4d8d8"/>
<path d="M300 400 Q330 420 350 450 L290 455z" fill="#8a6a58"/>
<!-- head -->
<path d="M212 215 Q205 130 280 105 Q360 85 415 130 Q440 160 432 225 L415 225 Q405 170 330 165 Q260 165 235 225z" fill="#6c6c6a"/>
<path d="M225 160 Q250 110 300 100 L290 150 Q250 170 232 215z" fill="#50504e"/>
<ellipse cx="318" cy="270" rx="106" ry="125" fill="url(#fc)"/>
<path d="M225 190 Q300 135 412 180 Q405 215 320 205 Q255 210 222 235z" fill="#d0a48e"/>
<ellipse cx="420" cy="245" rx="16" ry="42" fill="#b98a72"/>
<rect x="188" y="214" width="235" height="7" fill="#2a2a30" transform="rotate(-4 300 217)"/>
<ellipse cx="240" cy="238" rx="34" ry="25" fill="#2e3058"/><ellipse cx="327" cy="228" rx="37" ry="26" fill="#2e3058"/>
<ellipse cx="243" cy="238" rx="23" ry="15" fill="#3d4bf2"/><ellipse cx="325" cy="228" rx="25" ry="16" fill="#4a58ff"/>
<ellipse cx="300" cy="337" rx="32" ry="10" fill="#7a4a44"/>
<ellipse cx="282" cy="290" rx="20" ry="13" fill="#b5826c"/>
<!-- hand/arm -->
<path d="M42 455 Q60 360 140 312 Q190 272 215 292 Q240 330 225 390 Q200 380 170 400 Q130 430 120 470z" fill="#c99a80"/>
<path d="M150 392 Q200 372 240 382 L250 440 Q200 420 150 455z" fill="#5a4a44"/>
</g></g>
</svg>

</div>
</body>
</html>
